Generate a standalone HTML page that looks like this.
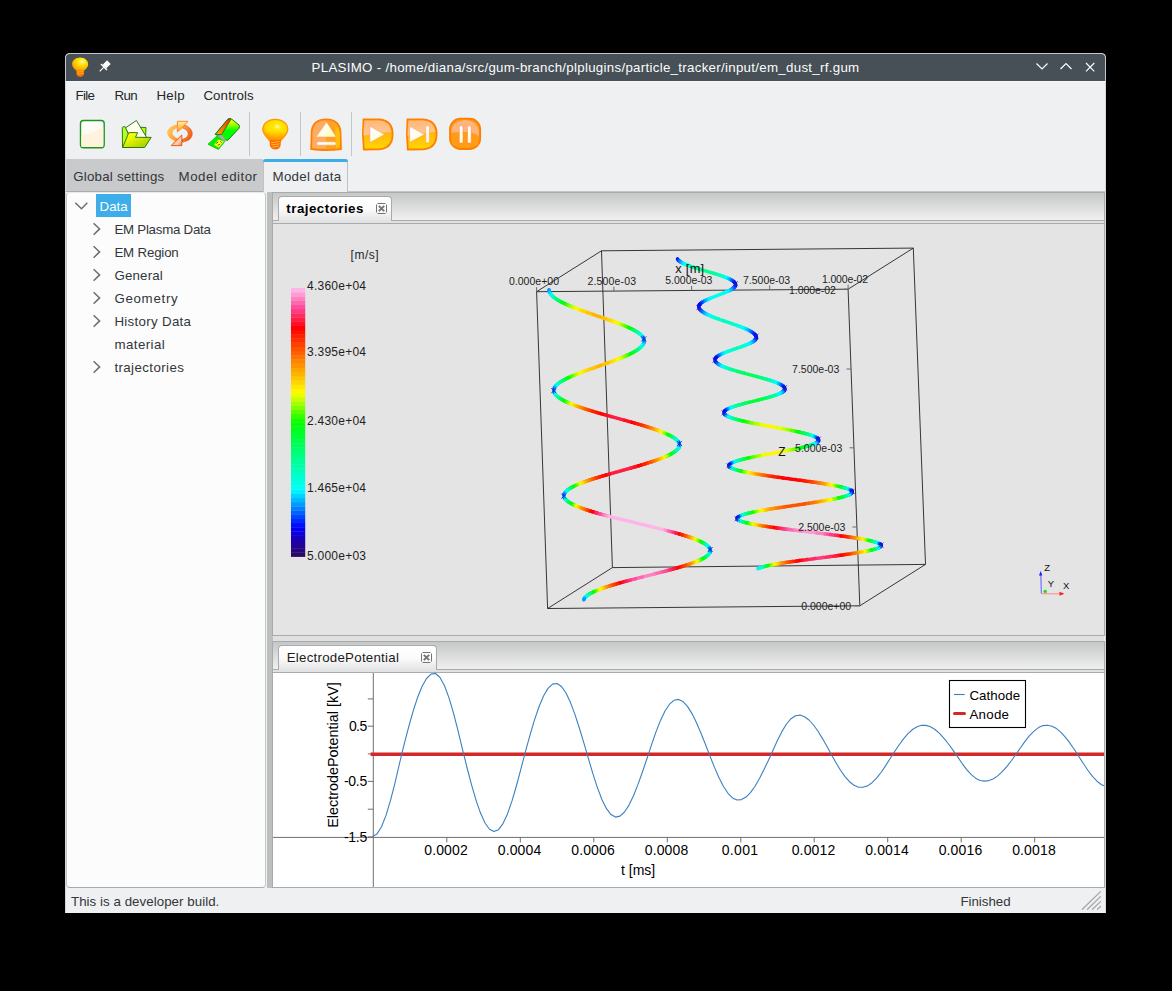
<!DOCTYPE html><html><head><meta charset="utf-8"><style>
*{margin:0;padding:0;box-sizing:border-box}
html,body{width:1172px;height:991px;background:#000;overflow:hidden;font-family:"Liberation Sans",sans-serif}
.a{position:absolute}
.t{position:absolute;white-space:nowrap;line-height:1}
svg{position:absolute;overflow:visible}
</style></head><body>
<div class="a" style="left:65px;top:53px;width:1041px;height:860px;background:#eff0f1;border-radius:5px 5px 0 0"></div>
<div class="a" style="left:65px;top:53px;width:1041px;height:28px;background:#475057;border-radius:5px 5px 0 0;border:1px solid #c4c8cc;border-bottom:none"></div>
<div class="a" style="left:66px;top:81px;width:1039px;height:1px;background:#f7f7f8"></div>
<div class="a" style="left:65px;top:81px;width:1px;height:832px;background:#d4d6d8"></div>
<div class="a" style="left:1105px;top:81px;width:1px;height:832px;background:#d4d6d8"></div>
<div class="t" style="left:311.60px;top:60.74px;font-size:13.3px;color:#fcfcfc;font-weight:normal;letter-spacing:0.29277108433734883px;">PLASIMO - /home/diana/src/gum-branch/plplugins/particle_tracker/input/em_dust_rf.gum</div>
<svg style="left:0px;top:0px" width="1172" height="991" viewBox="0 0 1172 991">
<defs><radialGradient id="tb1" cx="0.62" cy="0.32" r="0.7"><stop offset="0" stop-color="#fff8b0"/><stop offset="0.22" stop-color="#ffee40"/><stop offset="0.45" stop-color="#ffdc00"/><stop offset="1" stop-color="#ff9c00"/></radialGradient>
<linearGradient id="tb2" x1="0" y1="0" x2="0" y2="1"><stop offset="0" stop-color="#ff8a00"/><stop offset="1" stop-color="#ff6a00"/></linearGradient></defs>
<path d="M80.1 57.6 C75.5 57.6 72.1 60.5 72.1 64.2 C72.1 66.8 74.2 68.6 76.2 70.6 L84.2 70.6 C86.2 68.6 88.2 66.8 88.2 64.2 C88.2 60.5 84.8 57.6 80.1 57.6 Z" fill="url(#tb1)"/>
<path d="M76.3 70 L84.2 70 L83.9 74.5 Q83 76.9 80.2 76.9 Q77.4 76.9 76.6 74.5 Z" fill="url(#tb2)"/>
<path d="M77 72 L83.5 71.2 M77.2 74 L83.3 73.2" stroke="#ffb020" stroke-width="0.9"/>
<g transform="translate(104.5 66.5) rotate(45)">
<rect x="-2.6" y="-6.2" width="5.2" height="6.6" fill="#fcfcfc"/>
<rect x="-4.2" y="0" width="8.4" height="1.5" fill="#fcfcfc"/>
<rect x="-0.6" y="1.2" width="1.2" height="5.6" fill="#fcfcfc"/>
</g>
</svg>
<svg style="left:1030px;top:58px" width="70" height="20" viewBox="0 0 70 20">
<path d="M6.5 5.5 L12 11 L17.5 5.5" fill="none" stroke="#fcfcfc" stroke-width="1.2"/>
<path d="M30.5 11 L36 5.5 L41.5 11" fill="none" stroke="#fcfcfc" stroke-width="1.2"/>
<path d="M56 5 L64.3 13.3 M64.3 5 L56 13.3" fill="none" stroke="#fcfcfc" stroke-width="1.2"/>
</svg>
<div class="t" style="left:75.40px;top:89.04px;font-size:13.3px;color:#232629;font-weight:normal;letter-spacing:-0.6166666666666684px;">File</div>
<div class="t" style="left:114.60px;top:89.04px;font-size:13.3px;color:#232629;font-weight:normal;letter-spacing:-0.6500000000000021px;">Run</div>
<div class="t" style="left:156.40px;top:89.04px;font-size:13.3px;color:#232629;font-weight:normal;letter-spacing:0.28333333333332905px;">Help</div>
<div class="t" style="left:203.40px;top:89.04px;font-size:13.3px;color:#232629;font-weight:normal;letter-spacing:0.11428571428571185px;">Controls</div>
<div class="a" style="left:249px;top:112px;width:1px;height:44px;background:#c4c6c8"></div>
<div class="a" style="left:300px;top:112px;width:1px;height:44px;background:#c4c6c8"></div>
<div class="a" style="left:351px;top:112px;width:1px;height:44px;background:#c4c6c8"></div>
<svg style="left:0px;top:0px" width="1172" height="991" viewBox="0 0 1172 991">
<defs>
<linearGradient id="gNew" x1="0" y1="0" x2="0" y2="1"><stop offset="0" stop-color="#ffffff"/><stop offset="1" stop-color="#fff4e2"/></linearGradient>
<linearGradient id="gFold" x1="0" y1="0" x2="1" y2="1"><stop offset="0.2" stop-color="#ffff00"/><stop offset="1" stop-color="#90c800"/></linearGradient>
<linearGradient id="gUsbCap" x1="0" y1="0" x2="0" y2="1"><stop offset="0.1" stop-color="#ffff00"/><stop offset="0.55" stop-color="#00ff00"/></linearGradient>
<linearGradient id="gUsbTop" x1="1" y1="0" x2="0" y2="1"><stop offset="0" stop-color="#ff2000"/><stop offset="1" stop-color="#ffb000"/></linearGradient>
<radialGradient id="gBulb" cx="0.58" cy="0.35" r="0.65"><stop offset="0" stop-color="#fff8a0"/><stop offset="0.25" stop-color="#ffe600"/><stop offset="0.7" stop-color="#ffd800"/><stop offset="1" stop-color="#ffa000"/></radialGradient>
<linearGradient id="gOrTop" x1="0" y1="0" x2="0" y2="1"><stop offset="0" stop-color="#ffb878"/><stop offset="1" stop-color="#ffc898"/></linearGradient>
<linearGradient id="gOrBot" x1="0" y1="0" x2="0" y2="1"><stop offset="0" stop-color="#ff9c20"/><stop offset="1" stop-color="#ffd800"/></linearGradient>
<linearGradient id="gWhite" x1="0" y1="0" x2="1" y2="1"><stop offset="0.3" stop-color="#ffffff"/><stop offset="1" stop-color="#ffffa8"/></linearGradient>
<linearGradient id="gRef" x1="0" y1="0" x2="1" y2="1"><stop offset="0" stop-color="#ffe060"/><stop offset="0.5" stop-color="#ffa030"/><stop offset="1" stop-color="#ff5010"/></linearGradient>
<clipPath id="cTop1"><rect x="350" y="110" width="50" height="16"/></clipPath>
</defs>
<rect x="80.5" y="120.5" width="23.7" height="27.3" rx="3" fill="url(#gNew)" stroke="#1f951f" stroke-width="1.4"/>
<path d="M81.4 136 Q88 134.5 91 133.5 Q97 130 103.2 127 L103.2 147 L81.4 147 Z" fill="#fff3de"/>
<path d="M122.5 147.3 L122.3 127.5 L124 126.5 L126 127.5 L133 147.3 Z" fill="#b4ff28" stroke="#1c6e10" stroke-width="0.9"/>
<path d="M140.5 127.3 L146 127.5 L145.5 137 L141 137 Z" fill="#b4ff00" stroke="#1c6e10" stroke-width="0.9"/>
<path d="M125.6 127.8 L136.4 120.5 L146.7 137.5 L132 141 Z" fill="#fffff0" stroke="#1c6e10" stroke-width="0.9"/>
<path d="M122.6 147.5 L128.8 132.6 L137.6 132.6 L135.5 137.3 L151.2 137.4 L144.6 147.5 Z" fill="url(#gFold)" stroke="#1c6e10" stroke-width="0.9"/>
<defs><linearGradient id="gR1" x1="0" y1="0" x2="1" y2="1"><stop offset="0" stop-color="#ffb040"/><stop offset="1" stop-color="#e84a10"/></linearGradient><linearGradient id="gR2" x1="0" y1="0" x2="1" y2="1"><stop offset="0" stop-color="#ffd860"/><stop offset="1" stop-color="#ff8a20"/></linearGradient><linearGradient id="gR3" x1="0" y1="0" x2="0" y2="1"><stop offset="0" stop-color="#fff2a0"/><stop offset="1" stop-color="#ff9a20"/></linearGradient><linearGradient id="gR4" x1="0" y1="0" x2="1" y2="1"><stop offset="0" stop-color="#ff8a30"/><stop offset="0.7" stop-color="#ffd0b0"/><stop offset="1" stop-color="#ff7030"/></linearGradient></defs>
<path d="M183.5 124.5 C189.5 126.5 193 130.5 192.2 135 C191.3 139.3 187.5 141.3 182 142.3 L182 139.3 C185.5 138.5 188.2 136.7 188.2 134 C188.2 131 185.5 128.8 181.2 127.5 Z" fill="url(#gR1)" stroke="#d84a10" stroke-width="0.5"/>
<path d="M177.4 121.3 L187.9 121.3 L184.6 124.9 L181.4 128.4 L177.4 131.9 Z" fill="url(#gR3)" stroke="#ff7010" stroke-width="0.8"/>
<path d="M176.5 124.8 C170.5 126.3 167.2 129.8 167.6 133.2 C168 137 172 140 177.2 141.6 L178.6 138.9 C174.6 137.5 172.2 135.5 172.2 133 C172.2 130.5 174.2 128.6 177.6 127.6 Z" fill="url(#gR2)" stroke="#ffa040" stroke-width="0.4"/>
<path d="M181.8 145.6 L171.2 145.6 L174.7 142 L178.1 138.6 L181.8 135 Z" fill="url(#gR4)" stroke="#e04000" stroke-width="0.8"/>
<path d="M208 144.2 L216.8 136.2 L225.8 140.2 L218.4 149.4 Z" fill="#00ee00" stroke="#00c000" stroke-width="0.8"/>
<path d="M214 144.8 L218.5 139.6 L224 141.5 L218.6 147.8 Z" fill="#ffff20"/>
<path d="M216.3 143.5 L218 141.8 M218.2 145.5 L219.8 143.8 M220.5 141.5 L221.5 142.5" stroke="#111" stroke-width="1"/>
<path d="M215.3 134.2 L227.9 119.2 Q229.5 118 231.5 119 L239 125 Q240 126.5 239 128.3 L227.4 140.6 Z" fill="url(#gUsbCap)" stroke="#117a11" stroke-width="1"/>
<path d="M215.3 134.2 L227.9 119.2 Q229.5 118 231 119.2 L221.5 134.8 Z" fill="url(#gUsbTop)" stroke="#117a11" stroke-width="0.9"/>
<path d="M217 135.4 L221.6 135 L226.5 140.5 L224.5 141.5 Z" fill="#a8a8a8"/>
<path d="M275.2 119.4 C268 119.4 262.8 123.5 262.8 129.5 C262.8 133.5 266 136.5 269.2 140.3 L281 140.3 C284.5 136.5 287.8 133.5 287.8 129.5 C287.8 123.5 282.5 119.4 275.2 119.4 Z" fill="url(#gBulb)" stroke="#ff9800" stroke-width="1.2"/>
<defs><linearGradient id="gNeck" x1="0" y1="0" x2="0" y2="1"><stop offset="0.55" stop-color="#ffa000" stop-opacity="0"/><stop offset="1" stop-color="#ff9000" stop-opacity="1"/></linearGradient></defs>
<path d="M275.2 119.4 C268 119.4 262.8 123.5 262.8 129.5 C262.8 133.5 266 136.5 269.2 140.3 L281 140.3 C284.5 136.5 287.8 133.5 287.8 129.5 C287.8 123.5 282.5 119.4 275.2 119.4 Z" fill="url(#gNeck)"/>
<path d="M269.5 140.2 L281 140.2 L280.5 146 Q279 149.5 275.2 149.6 Q271.5 149.5 270 146 Z" fill="#ff6a00"/>
<path d="M271 142.8 L279.5 141.5 M271.2 145 L279.5 143.8 M272.5 147.2 L278.8 146" stroke="#ffc030" stroke-width="1"/>
<path d="M311.2 149 L311.6 133 Q312 119.5 326 119.3 Q340.2 119.5 340.5 133 L341 149 Q326 151 311.2 149 Z" fill="#ffac60" stroke="#ff8000" stroke-width="1.8"/>
<path d="M326 120.5 Q339 121 339.5 133 L340 148.3 Q333 149.2 326 149.3 Z" fill="#ffa020"/>
<path d="M335 125 Q339.5 129 339.6 134 L340 147.5 L336 148 Z" fill="#ffd000" opacity="0.7"/>
<path d="M316 137 L326.6 122.1 L336.3 137 Z" fill="url(#gWhite)" stroke="#ff9070" stroke-width="0.5"/>
<rect x="316.8" y="141.8" width="19.2" height="3.4" rx="1.5" fill="url(#gWhite)" stroke="#ff9070" stroke-width="0.5"/>
<path d="M363.5 119.3 L379.5 119.4 Q392.6 120.5 392.6 134 Q392.6 148.5 379 149.3 L363.8 149.5 Q362.2 134 363.5 119.3 Z" fill="url(#gOrBot)" stroke="#ff8000" stroke-width="1.8"/>
<path d="M364.5 120.4 L379.5 120.5 Q390.5 121.5 391.2 132 Q379 133 363.6 135.5 Q363.5 128 364.5 120.4 Z" fill="url(#gOrTop)"/>
<path d="M407.5 119.3 L423.5 119.4 Q436.6 120.5 436.6 134 Q436.6 148.5 423 149.3 L407.8 149.5 Q406.2 134 407.5 119.3 Z" fill="url(#gOrBot)" stroke="#ff8000" stroke-width="1.8"/>
<path d="M408.5 120.4 L423.5 120.5 Q434.5 121.5 435.2 132 Q423 133 407.6 135.5 Q407.5 128 408.5 120.4 Z" fill="url(#gOrTop)"/>
<path d="M369.9 126.3 L384.6 134.6 L369.9 142.5 Z" fill="url(#gWhite)" stroke="#ff9070" stroke-width="0.5"/>
<path d="M409.7 126.3 L424.6 134.6 L409.7 142.3 Z" fill="url(#gWhite)" stroke="#ff9070" stroke-width="0.5"/>
<rect x="425.8" y="125.8" width="3.6" height="17" rx="1" fill="url(#gWhite)" stroke="#ff9070" stroke-width="0.5"/>
<rect x="450" y="118.7" width="30.2" height="30.3" rx="10.5" fill="#ff9a1a" stroke="#ff8000" stroke-width="1.8"/>
<path d="M451.2 132.5 Q451.5 121 465 120 Q479 121 479 134 L479 136 Q472 131.5 465 132 Z" fill="#ffb478"/>
<path d="M452 140 Q458 147.5 465 147.5 Q473 147.5 478 140 L478 145 L452 145 Z" fill="#ffa800" opacity="0.6"/>
<rect x="459.4" y="125.8" width="3.6" height="17.3" rx="1.2" fill="url(#gWhite)" stroke="#ff8060" stroke-width="0.5"/>
<rect x="467.6" y="125.8" width="3.6" height="17.3" rx="1.2" fill="url(#gWhite)" stroke="#ff8060" stroke-width="0.5"/>
</svg>
<div class="a" style="left:66px;top:159px;width:197px;height:33px;background:#c9cacb"></div>
<div class="a" style="left:66px;top:191px;width:197px;height:1px;background:#a9abad"></div>
<div class="a" style="left:348px;top:191px;width:757px;height:1px;background:#c4c6c8"></div>
<div class="a" style="left:263px;top:159px;width:85px;height:33px;background:#eff0f1;border:1px solid #c0c2c4;border-bottom:none;border-radius:3px 3px 0 0"></div>
<div class="a" style="left:263px;top:159px;width:85px;height:3px;background:#3daee9;border-radius:3px 3px 0 0"></div>
<div class="t" style="left:73.30px;top:170.44px;font-size:13.3px;color:#31363b;font-weight:normal;letter-spacing:0.20714285714285655px;">Global settings</div>
<div class="t" style="left:178.60px;top:170.44px;font-size:13.3px;color:#31363b;font-weight:normal;letter-spacing:0.472727272727273px;">Model editor</div>
<div class="t" style="left:272.50px;top:170.44px;font-size:13.3px;color:#31363b;font-weight:normal;letter-spacing:0.31111111111111395px;">Model data</div>
<div class="a" style="left:66px;top:192px;width:200px;height:696px;background:#fcfcfc;border:1px solid #c4c6c8;border-top-color:#e8e9ea;border-bottom-color:#a9abad;border-radius:4px"></div>
<div class="a" style="left:96px;top:194px;width:35px;height:23px;background:#3daee9"></div>
<div class="t" style="left:99.50px;top:200.04px;font-size:13.3px;color:#fcfcfc;font-weight:normal;letter-spacing:0.033333333333333805px;">Data</div>
<svg style="left:74px;top:200px" width="16" height="12" viewBox="0 0 16 12"><path d="M1.3 2.7 L7.5 8.7 L13.3 2.7" fill="none" stroke="#6b6e71" stroke-width="1.5"/></svg>
<div class="t" style="left:114.40px;top:222.74px;font-size:13.3px;color:#31363b;font-weight:normal;letter-spacing:-0.24615384615384636px;">EM Plasma Data</div>
<svg style="left:92px;top:222.0px" width="10" height="13" viewBox="0 0 10 12"><path d="M1.6 0.7 L7.6 6.4 L1.6 12.2" fill="none" stroke="#6b6e71" stroke-width="1.5"/></svg>
<div class="t" style="left:114.40px;top:245.74px;font-size:13.3px;color:#31363b;font-weight:normal;letter-spacing:-0.17499999999999893px;">EM Region</div>
<svg style="left:92px;top:245.0px" width="10" height="13" viewBox="0 0 10 12"><path d="M1.6 0.7 L7.6 6.4 L1.6 12.2" fill="none" stroke="#6b6e71" stroke-width="1.5"/></svg>
<div class="t" style="left:114.40px;top:268.74px;font-size:13.3px;color:#31363b;font-weight:normal;letter-spacing:0.18333333333333476px;">General</div>
<svg style="left:92px;top:268.0px" width="10" height="13" viewBox="0 0 10 12"><path d="M1.6 0.7 L7.6 6.4 L1.6 12.2" fill="none" stroke="#6b6e71" stroke-width="1.5"/></svg>
<div class="t" style="left:114.40px;top:291.74px;font-size:13.3px;color:#31363b;font-weight:normal;letter-spacing:0.6999999999999977px;">Geometry</div>
<svg style="left:92px;top:291.0px" width="10" height="13" viewBox="0 0 10 12"><path d="M1.6 0.7 L7.6 6.4 L1.6 12.2" fill="none" stroke="#6b6e71" stroke-width="1.5"/></svg>
<div class="t" style="left:114.40px;top:314.74px;font-size:13.3px;color:#31363b;font-weight:normal;letter-spacing:0.3136363636363626px;">History Data</div>
<svg style="left:92px;top:314.0px" width="10" height="13" viewBox="0 0 10 12"><path d="M1.6 0.7 L7.6 6.4 L1.6 12.2" fill="none" stroke="#6b6e71" stroke-width="1.5"/></svg>
<div class="t" style="left:114.40px;top:337.74px;font-size:13.3px;color:#31363b;font-weight:normal;letter-spacing:0.44285714285714406px;">material</div>
<div class="t" style="left:114.40px;top:360.74px;font-size:13.3px;color:#31363b;font-weight:normal;letter-spacing:0.4045454545454548px;">trajectories</div>
<svg style="left:92px;top:360.0px" width="10" height="13" viewBox="0 0 10 12"><path d="M1.6 0.7 L7.6 6.4 L1.6 12.2" fill="none" stroke="#6b6e71" stroke-width="1.5"/></svg>
<div class="a" style="left:266px;top:192px;width:7px;height:696px;background:#bdbec0"></div>
<div class="a" style="left:266px;top:192px;width:1px;height:696px;background:#eff0f1"></div>
<div class="a" style="left:272px;top:192px;width:833px;height:444px;background:#dfe0e1;border:1px solid #a9aaab"></div>
<div class="a" style="left:273px;top:193px;width:831px;height:27px;background:linear-gradient(#c6c7c7,#f0f0f0)"></div>
<div class="a" style="left:273px;top:220px;width:831px;height:1px;background:#a9aaab"></div>
<div class="a" style="left:273px;top:221px;width:831px;height:2px;background:#e1e2e3"></div>
<div class="a" style="left:272px;top:223px;width:833px;height:1px;background:#a9aaab"></div>
<div class="a" style="left:278px;top:196px;width:114px;height:25px;background:linear-gradient(#ffffff 0%,#fbfbfb 50%,#e4e4e4 100%);border:1px solid #a9aaab;border-bottom:none;border-radius:4px 4px 0 0"></div>
<div class="t" style="left:286.30px;top:202.24px;font-size:13.3px;color:#000;font-weight:bold;letter-spacing:0.4909090909090876px;">trajectories</div>
<svg style="left:376px;top:203px" width="12" height="12" viewBox="0 0 12 12"><path d="M1.5 0.5 H9.5 M1.5 10.5 H9.5 M0.5 1.5 V9.5 M10.5 1.5 V9.5" stroke="#727476" stroke-width="1"/><path d="M2.8 2.8 L8.2 8.2 M8.2 2.8 L2.8 8.2" stroke="#727476" stroke-width="1.9"/></svg>
<div class="a" style="left:273px;top:224px;width:831px;height:411px;background:#e4e4e4"></div>
<div class="a" style="left:272px;top:641px;width:833px;height:247px;background:#dfe0e1;border:1px solid #a9aaab"></div>
<div class="a" style="left:273px;top:642px;width:831px;height:27px;background:linear-gradient(#c6c7c7,#f0f0f0)"></div>
<div class="a" style="left:273px;top:669px;width:831px;height:1px;background:#a9aaab"></div>
<div class="a" style="left:273px;top:670px;width:831px;height:2px;background:#e1e2e3"></div>
<div class="a" style="left:272px;top:672px;width:833px;height:1px;background:#a9aaab"></div>
<div class="a" style="left:278px;top:645px;width:159px;height:25px;background:linear-gradient(#ffffff 0%,#fbfbfb 50%,#e4e4e4 100%);border:1px solid #a9aaab;border-bottom:none;border-radius:4px 4px 0 0"></div>
<div class="t" style="left:286.70px;top:651.44px;font-size:13.3px;color:#1b1b1b;font-weight:normal;letter-spacing:0.24999999999999917px;">ElectrodePotential</div>
<svg style="left:421px;top:652px" width="12" height="12" viewBox="0 0 12 12"><path d="M1.5 0.5 H9.5 M1.5 10.5 H9.5 M0.5 1.5 V9.5 M10.5 1.5 V9.5" stroke="#727476" stroke-width="1"/><path d="M2.8 2.8 L8.2 8.2 M8.2 2.8 L2.8 8.2" stroke="#727476" stroke-width="1.9"/></svg>
<div class="a" style="left:273px;top:673px;width:831px;height:214px;background:#ffffff"></div>
<div class="a" style="left:273px;top:636px;width:831px;height:5px;background:#dfe0e2"></div>
<svg style="left:0px;top:0px" width="1172" height="991" viewBox="0 0 1172 991">
<rect x="291" y="552.40" width="14.2" height="4.50" fill="#2a0867"/>
<rect x="291" y="548.21" width="14.2" height="4.50" fill="#27057c"/>
<rect x="291" y="544.01" width="14.2" height="4.50" fill="#240291"/>
<rect x="291" y="539.81" width="14.2" height="4.50" fill="#1f00a7"/>
<rect x="291" y="535.62" width="14.2" height="4.50" fill="#1600c0"/>
<rect x="291" y="531.42" width="14.2" height="4.50" fill="#0e00d9"/>
<rect x="291" y="527.22" width="14.2" height="4.50" fill="#0500f2"/>
<rect x="291" y="523.02" width="14.2" height="4.50" fill="#000dff"/>
<rect x="291" y="518.83" width="14.2" height="4.50" fill="#002aff"/>
<rect x="291" y="514.63" width="14.2" height="4.50" fill="#0046ff"/>
<rect x="291" y="510.43" width="14.2" height="4.50" fill="#0063ff"/>
<rect x="291" y="506.24" width="14.2" height="4.50" fill="#007fff"/>
<rect x="291" y="502.04" width="14.2" height="4.50" fill="#009cff"/>
<rect x="291" y="497.84" width="14.2" height="4.50" fill="#00b8ff"/>
<rect x="291" y="493.65" width="14.2" height="4.50" fill="#00d4ff"/>
<rect x="291" y="489.45" width="14.2" height="4.50" fill="#00f1ff"/>
<rect x="291" y="485.25" width="14.2" height="4.50" fill="#00fff7"/>
<rect x="291" y="481.06" width="14.2" height="4.50" fill="#00ffe8"/>
<rect x="291" y="476.86" width="14.2" height="4.50" fill="#00ffd9"/>
<rect x="291" y="472.66" width="14.2" height="4.50" fill="#00ffca"/>
<rect x="291" y="468.47" width="14.2" height="4.50" fill="#00ffba"/>
<rect x="291" y="464.27" width="14.2" height="4.50" fill="#00ffab"/>
<rect x="291" y="460.07" width="14.2" height="4.50" fill="#00ff9c"/>
<rect x="291" y="455.88" width="14.2" height="4.50" fill="#00ff8d"/>
<rect x="291" y="451.68" width="14.2" height="4.50" fill="#00ff7d"/>
<rect x="291" y="447.48" width="14.2" height="4.50" fill="#00ff6c"/>
<rect x="291" y="443.28" width="14.2" height="4.50" fill="#00ff5c"/>
<rect x="291" y="439.09" width="14.2" height="4.50" fill="#00ff4b"/>
<rect x="291" y="434.89" width="14.2" height="4.50" fill="#00ff3a"/>
<rect x="291" y="430.69" width="14.2" height="4.50" fill="#00ff2a"/>
<rect x="291" y="426.50" width="14.2" height="4.50" fill="#00ff19"/>
<rect x="291" y="422.30" width="14.2" height="4.50" fill="#00ff08"/>
<rect x="291" y="418.10" width="14.2" height="4.50" fill="#12ff00"/>
<rect x="291" y="413.91" width="14.2" height="4.50" fill="#36ff00"/>
<rect x="291" y="409.71" width="14.2" height="4.50" fill="#5bff00"/>
<rect x="291" y="405.51" width="14.2" height="4.50" fill="#7fff00"/>
<rect x="291" y="401.32" width="14.2" height="4.50" fill="#a3ff00"/>
<rect x="291" y="397.12" width="14.2" height="4.50" fill="#c7ff00"/>
<rect x="291" y="392.92" width="14.2" height="4.50" fill="#ebff00"/>
<rect x="291" y="388.73" width="14.2" height="4.50" fill="#fff700"/>
<rect x="291" y="384.53" width="14.2" height="4.50" fill="#ffe700"/>
<rect x="291" y="380.33" width="14.2" height="4.50" fill="#ffd600"/>
<rect x="291" y="376.13" width="14.2" height="4.50" fill="#ffc600"/>
<rect x="291" y="371.94" width="14.2" height="4.50" fill="#ffb500"/>
<rect x="291" y="367.74" width="14.2" height="4.50" fill="#ffa500"/>
<rect x="291" y="363.54" width="14.2" height="4.50" fill="#ff9400"/>
<rect x="291" y="359.35" width="14.2" height="4.50" fill="#ff8400"/>
<rect x="291" y="355.15" width="14.2" height="4.50" fill="#ff7300"/>
<rect x="291" y="350.95" width="14.2" height="4.50" fill="#ff6200"/>
<rect x="291" y="346.76" width="14.2" height="4.50" fill="#ff5200"/>
<rect x="291" y="342.56" width="14.2" height="4.50" fill="#ff4100"/>
<rect x="291" y="338.36" width="14.2" height="4.50" fill="#ff3000"/>
<rect x="291" y="334.17" width="14.2" height="4.50" fill="#ff2000"/>
<rect x="291" y="329.97" width="14.2" height="4.50" fill="#ff0f00"/>
<rect x="291" y="325.77" width="14.2" height="4.50" fill="#ff0103"/>
<rect x="291" y="321.57" width="14.2" height="4.50" fill="#ff1023"/>
<rect x="291" y="317.38" width="14.2" height="4.50" fill="#ff1e43"/>
<rect x="291" y="313.18" width="14.2" height="4.50" fill="#ff2c64"/>
<rect x="291" y="308.98" width="14.2" height="4.50" fill="#ff3b84"/>
<rect x="291" y="304.79" width="14.2" height="4.50" fill="#ff4f9c"/>
<rect x="291" y="300.59" width="14.2" height="4.50" fill="#ff68ae"/>
<rect x="291" y="296.39" width="14.2" height="4.50" fill="#ff81c1"/>
<rect x="291" y="292.20" width="14.2" height="4.50" fill="#ff9ad4"/>
<rect x="291" y="288.00" width="14.2" height="4.50" fill="#ffb4e7"/>
<line x1="536.6" y1="291.7" x2="848.1" y2="289.2" stroke="#222" stroke-width="0.9"/>
<line x1="848.1" y1="289.2" x2="913.3" y2="248.1" stroke="#222" stroke-width="0.9"/>
<line x1="913.3" y1="248.1" x2="601.5" y2="250.8" stroke="#222" stroke-width="0.9"/>
<line x1="601.5" y1="250.8" x2="536.6" y2="291.7" stroke="#222" stroke-width="0.9"/>
<line x1="547.6" y1="608.5" x2="859.8" y2="605.8" stroke="#222" stroke-width="0.9"/>
<line x1="859.8" y1="605.8" x2="925.5" y2="564.4" stroke="#222" stroke-width="0.9"/>
<line x1="925.5" y1="564.4" x2="612.4" y2="567.6" stroke="#222" stroke-width="0.9"/>
<line x1="612.4" y1="567.6" x2="547.6" y2="608.5" stroke="#222" stroke-width="0.9"/>
<line x1="536.6" y1="291.7" x2="547.6" y2="608.5" stroke="#222" stroke-width="0.9"/>
<line x1="848.1" y1="289.2" x2="859.8" y2="605.8" stroke="#222" stroke-width="0.9"/>
<line x1="601.5" y1="250.8" x2="612.4" y2="567.6" stroke="#222" stroke-width="0.9"/>
<line x1="913.3" y1="248.1" x2="925.5" y2="564.4" stroke="#222" stroke-width="0.9"/>
<line x1="536.6" y1="287.2" x2="536.6" y2="291.7" stroke="#6a6a6a" stroke-width="1"/>
<line x1="613.9" y1="286.6" x2="613.9" y2="291.1" stroke="#6a6a6a" stroke-width="1"/>
<line x1="691.6" y1="286.0" x2="691.6" y2="290.5" stroke="#6a6a6a" stroke-width="1"/>
<line x1="769.7" y1="285.3" x2="769.7" y2="289.8" stroke="#6a6a6a" stroke-width="1"/>
<line x1="848.1" y1="284.7" x2="848.1" y2="289.2" stroke="#6a6a6a" stroke-width="1"/>
<line x1="843.6" y1="289.2" x2="848.1" y2="289.2" stroke="#6a6a6a" stroke-width="1"/>
<line x1="846.5" y1="369.0" x2="851.0" y2="369.0" stroke="#6a6a6a" stroke-width="1"/>
<line x1="849.5" y1="447.8" x2="854.0" y2="447.8" stroke="#6a6a6a" stroke-width="1"/>
<line x1="852.4" y1="527.0" x2="856.9" y2="527.0" stroke="#6a6a6a" stroke-width="1"/>
<line x1="855.3" y1="605.8" x2="859.8" y2="605.8" stroke="#6a6a6a" stroke-width="1"/>
<polyline points="549.0,289.8 549.0,290.1 549.1,290.5" fill="none" stroke="#007fff" stroke-width="3.5" stroke-linecap="round" stroke-linejoin="round"/>
<polyline points="549.1,290.5 549.1,290.8 549.2,291.1 549.3,291.5 549.4,291.8 549.5,292.1" fill="none" stroke="#009cff" stroke-width="3.5" stroke-linecap="round" stroke-linejoin="round"/>
<polyline points="549.5,292.1 549.7,292.5 549.9,292.8 550.1,293.1" fill="none" stroke="#00b8ff" stroke-width="3.5" stroke-linecap="round" stroke-linejoin="round"/>
<polyline points="550.1,293.1 550.3,293.5 550.5,293.8 550.7,294.1" fill="none" stroke="#00d4ff" stroke-width="3.5" stroke-linecap="round" stroke-linejoin="round"/>
<polyline points="550.7,294.1 551.0,294.5 551.3,294.8" fill="none" stroke="#00f1ff" stroke-width="3.5" stroke-linecap="round" stroke-linejoin="round"/>
<polyline points="551.3,294.8 551.6,295.1 551.9,295.5" fill="none" stroke="#00fff7" stroke-width="3.5" stroke-linecap="round" stroke-linejoin="round"/>
<polyline points="551.9,295.5 552.2,295.8 552.5,296.1" fill="none" stroke="#00ffe8" stroke-width="3.5" stroke-linecap="round" stroke-linejoin="round"/>
<polyline points="552.5,296.1 552.9,296.5 553.3,296.8" fill="none" stroke="#00ffd9" stroke-width="3.5" stroke-linecap="round" stroke-linejoin="round"/>
<polyline points="553.3,296.8 553.7,297.1" fill="none" stroke="#00ffca" stroke-width="3.5" stroke-linecap="round" stroke-linejoin="round"/>
<polyline points="553.7,297.1 554.1,297.5 554.5,297.8" fill="none" stroke="#00ffba" stroke-width="3.5" stroke-linecap="round" stroke-linejoin="round"/>
<polyline points="554.5,297.8 555.0,298.1 555.5,298.5" fill="none" stroke="#00ffab" stroke-width="3.5" stroke-linecap="round" stroke-linejoin="round"/>
<polyline points="555.5,298.5 555.9,298.8" fill="none" stroke="#00ff9c" stroke-width="3.5" stroke-linecap="round" stroke-linejoin="round"/>
<polyline points="555.9,298.8 556.4,299.1 557.0,299.5" fill="none" stroke="#00ff8d" stroke-width="3.5" stroke-linecap="round" stroke-linejoin="round"/>
<polyline points="557.0,299.5 557.5,299.8 558.0,300.1" fill="none" stroke="#00ff7d" stroke-width="3.5" stroke-linecap="round" stroke-linejoin="round"/>
<polyline points="558.0,300.1 558.6,300.5" fill="none" stroke="#00ff6c" stroke-width="3.5" stroke-linecap="round" stroke-linejoin="round"/>
<polyline points="558.6,300.5 559.2,300.8 559.8,301.1" fill="none" stroke="#00ff5c" stroke-width="3.5" stroke-linecap="round" stroke-linejoin="round"/>
<polyline points="559.8,301.1 560.4,301.5 561.0,301.8" fill="none" stroke="#00ff4b" stroke-width="3.5" stroke-linecap="round" stroke-linejoin="round"/>
<polyline points="561.0,301.8 561.7,302.1" fill="none" stroke="#00ff3a" stroke-width="3.5" stroke-linecap="round" stroke-linejoin="round"/>
<polyline points="561.7,302.1 562.3,302.5 563.0,302.8" fill="none" stroke="#00ff2a" stroke-width="3.5" stroke-linecap="round" stroke-linejoin="round"/>
<polyline points="563.0,302.8 563.7,303.1 564.4,303.5" fill="none" stroke="#00ff19" stroke-width="3.5" stroke-linecap="round" stroke-linejoin="round"/>
<polyline points="564.4,303.5 565.1,303.8 565.8,304.1" fill="none" stroke="#00ff08" stroke-width="3.5" stroke-linecap="round" stroke-linejoin="round"/>
<polyline points="565.8,304.1 566.6,304.5" fill="none" stroke="#12ff00" stroke-width="3.5" stroke-linecap="round" stroke-linejoin="round"/>
<polyline points="566.6,304.5 567.3,304.8 568.1,305.1" fill="none" stroke="#36ff00" stroke-width="3.5" stroke-linecap="round" stroke-linejoin="round"/>
<polyline points="568.1,305.1 568.9,305.5 569.7,305.8" fill="none" stroke="#5bff00" stroke-width="3.5" stroke-linecap="round" stroke-linejoin="round"/>
<polyline points="569.7,305.8 570.5,306.2 571.3,306.5" fill="none" stroke="#7fff00" stroke-width="3.5" stroke-linecap="round" stroke-linejoin="round"/>
<polyline points="571.3,306.5 572.1,306.8 572.9,307.2" fill="none" stroke="#a3ff00" stroke-width="3.5" stroke-linecap="round" stroke-linejoin="round"/>
<polyline points="572.9,307.2 573.8,307.5 574.6,307.8 575.5,308.2" fill="none" stroke="#c7ff00" stroke-width="3.5" stroke-linecap="round" stroke-linejoin="round"/>
<polyline points="575.5,308.2 576.4,308.5 577.2,308.8" fill="none" stroke="#ebff00" stroke-width="3.5" stroke-linecap="round" stroke-linejoin="round"/>
<polyline points="577.2,308.8 578.1,309.2 579.0,309.5 579.9,309.8" fill="none" stroke="#fff700" stroke-width="3.5" stroke-linecap="round" stroke-linejoin="round"/>
<polyline points="579.9,309.8 580.8,310.2 581.8,310.5 582.7,310.8" fill="none" stroke="#ffe700" stroke-width="3.5" stroke-linecap="round" stroke-linejoin="round"/>
<polyline points="582.7,310.8 583.6,311.2 584.6,311.5 585.5,311.8 586.5,312.2 587.4,312.5" fill="none" stroke="#ffd600" stroke-width="3.5" stroke-linecap="round" stroke-linejoin="round"/>
<polyline points="587.4,312.5 588.4,312.8 589.3,313.2 590.3,313.5 591.3,313.8 592.2,314.2 593.2,314.5" fill="none" stroke="#ffc600" stroke-width="3.5" stroke-linecap="round" stroke-linejoin="round"/>
<polyline points="593.2,314.5 594.2,314.8 595.2,315.2 596.2,315.5 597.1,315.8 598.1,316.2 599.1,316.5 600.1,316.8 601.1,317.2 602.0,317.5 603.0,317.8" fill="none" stroke="#ffb500" stroke-width="3.5" stroke-linecap="round" stroke-linejoin="round"/>
<polyline points="603.0,317.8 604.0,318.2 604.9,318.5 605.9,318.8 606.9,319.2 607.8,319.5 608.8,319.8" fill="none" stroke="#ffc600" stroke-width="3.5" stroke-linecap="round" stroke-linejoin="round"/>
<polyline points="608.8,319.8 609.7,320.2 610.7,320.5 611.6,320.8 612.6,321.2" fill="none" stroke="#ffd600" stroke-width="3.5" stroke-linecap="round" stroke-linejoin="round"/>
<polyline points="612.6,321.2 613.5,321.5 614.4,321.8 615.3,322.2" fill="none" stroke="#ffe700" stroke-width="3.5" stroke-linecap="round" stroke-linejoin="round"/>
<polyline points="615.3,322.2 616.2,322.5 617.1,322.8 618.0,323.2" fill="none" stroke="#fff700" stroke-width="3.5" stroke-linecap="round" stroke-linejoin="round"/>
<polyline points="618.0,323.2 618.9,323.5 619.8,323.8 620.6,324.2" fill="none" stroke="#ebff00" stroke-width="3.5" stroke-linecap="round" stroke-linejoin="round"/>
<polyline points="620.6,324.2 621.5,324.5 622.3,324.8" fill="none" stroke="#c7ff00" stroke-width="3.5" stroke-linecap="round" stroke-linejoin="round"/>
<polyline points="622.3,324.8 623.1,325.2 624.0,325.5" fill="none" stroke="#a3ff00" stroke-width="3.5" stroke-linecap="round" stroke-linejoin="round"/>
<polyline points="624.0,325.5 624.8,325.8 625.5,326.2" fill="none" stroke="#7fff00" stroke-width="3.5" stroke-linecap="round" stroke-linejoin="round"/>
<polyline points="625.5,326.2 626.3,326.5 627.1,326.8" fill="none" stroke="#5bff00" stroke-width="3.5" stroke-linecap="round" stroke-linejoin="round"/>
<polyline points="627.1,326.8 627.9,327.2 628.6,327.5" fill="none" stroke="#36ff00" stroke-width="3.5" stroke-linecap="round" stroke-linejoin="round"/>
<polyline points="628.6,327.5 629.3,327.8" fill="none" stroke="#12ff00" stroke-width="3.5" stroke-linecap="round" stroke-linejoin="round"/>
<polyline points="629.3,327.8 630.0,328.2 630.7,328.5" fill="none" stroke="#00ff08" stroke-width="3.5" stroke-linecap="round" stroke-linejoin="round"/>
<polyline points="630.7,328.5 631.4,328.8 632.1,329.2" fill="none" stroke="#00ff19" stroke-width="3.5" stroke-linecap="round" stroke-linejoin="round"/>
<polyline points="632.1,329.2 632.7,329.5" fill="none" stroke="#00ff2a" stroke-width="3.5" stroke-linecap="round" stroke-linejoin="round"/>
<polyline points="632.7,329.5 633.4,329.8 634.0,330.2" fill="none" stroke="#00ff3a" stroke-width="3.5" stroke-linecap="round" stroke-linejoin="round"/>
<polyline points="634.0,330.2 634.6,330.5" fill="none" stroke="#00ff4b" stroke-width="3.5" stroke-linecap="round" stroke-linejoin="round"/>
<polyline points="634.6,330.5 635.2,330.8 635.8,331.2" fill="none" stroke="#00ff5c" stroke-width="3.5" stroke-linecap="round" stroke-linejoin="round"/>
<polyline points="635.8,331.2 636.3,331.5" fill="none" stroke="#00ff6c" stroke-width="3.5" stroke-linecap="round" stroke-linejoin="round"/>
<polyline points="636.3,331.5 636.9,331.8 637.4,332.2" fill="none" stroke="#00ff7d" stroke-width="3.5" stroke-linecap="round" stroke-linejoin="round"/>
<polyline points="637.4,332.2 637.9,332.5" fill="none" stroke="#00ff8d" stroke-width="3.5" stroke-linecap="round" stroke-linejoin="round"/>
<polyline points="637.9,332.5 638.4,332.8 638.8,333.2" fill="none" stroke="#00ff9c" stroke-width="3.5" stroke-linecap="round" stroke-linejoin="round"/>
<polyline points="638.8,333.2 639.3,333.5" fill="none" stroke="#00ffab" stroke-width="3.5" stroke-linecap="round" stroke-linejoin="round"/>
<polyline points="639.3,333.5 639.7,333.8 640.1,334.2" fill="none" stroke="#00ffba" stroke-width="3.5" stroke-linecap="round" stroke-linejoin="round"/>
<polyline points="640.1,334.2 640.5,334.5" fill="none" stroke="#00ffca" stroke-width="3.5" stroke-linecap="round" stroke-linejoin="round"/>
<polyline points="640.5,334.5 640.9,334.8 641.2,335.2" fill="none" stroke="#00ffd9" stroke-width="3.5" stroke-linecap="round" stroke-linejoin="round"/>
<polyline points="641.2,335.2 641.6,335.5" fill="none" stroke="#00ffe8" stroke-width="3.5" stroke-linecap="round" stroke-linejoin="round"/>
<polyline points="641.6,335.5 641.9,335.8 642.2,336.2" fill="none" stroke="#00fff7" stroke-width="3.5" stroke-linecap="round" stroke-linejoin="round"/>
<polyline points="642.2,336.2 642.5,336.5 642.7,336.9" fill="none" stroke="#00f1ff" stroke-width="3.5" stroke-linecap="round" stroke-linejoin="round"/>
<polyline points="642.7,336.9 642.9,337.2 643.2,337.5" fill="none" stroke="#00d4ff" stroke-width="3.5" stroke-linecap="round" stroke-linejoin="round"/>
<polyline points="643.2,337.5 643.3,337.9 643.5,338.2 643.7,338.5" fill="none" stroke="#00b8ff" stroke-width="3.5" stroke-linecap="round" stroke-linejoin="round"/>
<polyline points="643.7,338.5 643.8,338.9 643.9,339.2 644.0,339.5 644.0,339.9" fill="none" stroke="#009cff" stroke-width="3.5" stroke-linecap="round" stroke-linejoin="round"/>
<polyline points="644.0,339.9 644.1,340.2 644.1,340.5 644.1,340.9 644.1,341.2 644.1,341.5 644.1,341.9" fill="none" stroke="#007fff" stroke-width="3.5" stroke-linecap="round" stroke-linejoin="round"/>
<polyline points="644.1,341.9 644.0,342.2 643.9,342.5 643.8,342.9 643.7,343.2" fill="none" stroke="#009cff" stroke-width="3.5" stroke-linecap="round" stroke-linejoin="round"/>
<polyline points="643.7,343.2 643.5,343.5 643.4,343.9 643.2,344.2" fill="none" stroke="#00b8ff" stroke-width="3.5" stroke-linecap="round" stroke-linejoin="round"/>
<polyline points="643.2,344.2 643.0,344.5 642.8,344.9 642.5,345.2" fill="none" stroke="#00d4ff" stroke-width="3.5" stroke-linecap="round" stroke-linejoin="round"/>
<polyline points="642.5,345.2 642.3,345.5 642.0,345.9" fill="none" stroke="#00f1ff" stroke-width="3.5" stroke-linecap="round" stroke-linejoin="round"/>
<polyline points="642.0,345.9 641.7,346.2 641.4,346.5" fill="none" stroke="#00fff7" stroke-width="3.5" stroke-linecap="round" stroke-linejoin="round"/>
<polyline points="641.4,346.5 641.1,346.9" fill="none" stroke="#00ffe8" stroke-width="3.5" stroke-linecap="round" stroke-linejoin="round"/>
<polyline points="641.1,346.9 640.7,347.2 640.4,347.5" fill="none" stroke="#00ffd9" stroke-width="3.5" stroke-linecap="round" stroke-linejoin="round"/>
<polyline points="640.4,347.5 640.0,347.9 639.6,348.2" fill="none" stroke="#00ffca" stroke-width="3.5" stroke-linecap="round" stroke-linejoin="round"/>
<polyline points="639.6,348.2 639.2,348.5" fill="none" stroke="#00ffba" stroke-width="3.5" stroke-linecap="round" stroke-linejoin="round"/>
<polyline points="639.2,348.5 638.7,348.9 638.3,349.2" fill="none" stroke="#00ffab" stroke-width="3.5" stroke-linecap="round" stroke-linejoin="round"/>
<polyline points="638.3,349.2 637.8,349.5 637.3,349.9" fill="none" stroke="#00ff9c" stroke-width="3.5" stroke-linecap="round" stroke-linejoin="round"/>
<polyline points="637.3,349.9 636.8,350.2" fill="none" stroke="#00ff8d" stroke-width="3.5" stroke-linecap="round" stroke-linejoin="round"/>
<polyline points="636.8,350.2 636.3,350.5 635.8,350.9" fill="none" stroke="#00ff7d" stroke-width="3.5" stroke-linecap="round" stroke-linejoin="round"/>
<polyline points="635.8,350.9 635.2,351.2" fill="none" stroke="#00ff6c" stroke-width="3.5" stroke-linecap="round" stroke-linejoin="round"/>
<polyline points="635.2,351.2 634.7,351.5 634.1,351.9" fill="none" stroke="#00ff5c" stroke-width="3.5" stroke-linecap="round" stroke-linejoin="round"/>
<polyline points="634.1,351.9 633.5,352.2" fill="none" stroke="#00ff4b" stroke-width="3.5" stroke-linecap="round" stroke-linejoin="round"/>
<polyline points="633.5,352.2 632.9,352.5 632.2,352.9" fill="none" stroke="#00ff3a" stroke-width="3.5" stroke-linecap="round" stroke-linejoin="round"/>
<polyline points="632.2,352.9 631.6,353.2 630.9,353.5" fill="none" stroke="#00ff2a" stroke-width="3.5" stroke-linecap="round" stroke-linejoin="round"/>
<polyline points="630.9,353.5 630.3,353.9" fill="none" stroke="#00ff19" stroke-width="3.5" stroke-linecap="round" stroke-linejoin="round"/>
<polyline points="630.3,353.9 629.6,354.2 628.9,354.5" fill="none" stroke="#00ff08" stroke-width="3.5" stroke-linecap="round" stroke-linejoin="round"/>
<polyline points="628.9,354.5 628.2,354.9 627.4,355.2" fill="none" stroke="#12ff00" stroke-width="3.5" stroke-linecap="round" stroke-linejoin="round"/>
<polyline points="627.4,355.2 626.7,355.5 626.0,355.9" fill="none" stroke="#36ff00" stroke-width="3.5" stroke-linecap="round" stroke-linejoin="round"/>
<polyline points="626.0,355.9 625.2,356.2 624.4,356.5" fill="none" stroke="#5bff00" stroke-width="3.5" stroke-linecap="round" stroke-linejoin="round"/>
<polyline points="624.4,356.5 623.6,356.9 622.8,357.2" fill="none" stroke="#7fff00" stroke-width="3.5" stroke-linecap="round" stroke-linejoin="round"/>
<polyline points="622.8,357.2 622.0,357.5 621.2,357.9" fill="none" stroke="#a3ff00" stroke-width="3.5" stroke-linecap="round" stroke-linejoin="round"/>
<polyline points="621.2,357.9 620.4,358.2 619.5,358.5" fill="none" stroke="#c7ff00" stroke-width="3.5" stroke-linecap="round" stroke-linejoin="round"/>
<polyline points="619.5,358.5 618.7,358.9 617.8,359.2 617.0,359.5" fill="none" stroke="#ebff00" stroke-width="3.5" stroke-linecap="round" stroke-linejoin="round"/>
<polyline points="617.0,359.5 616.1,359.9 615.2,360.2 614.3,360.5" fill="none" stroke="#fff700" stroke-width="3.5" stroke-linecap="round" stroke-linejoin="round"/>
<polyline points="614.3,360.5 613.5,360.9 612.6,361.2 611.6,361.5" fill="none" stroke="#ffe700" stroke-width="3.5" stroke-linecap="round" stroke-linejoin="round"/>
<polyline points="611.6,361.5 610.7,361.9 609.8,362.2 608.9,362.5 608.0,362.9" fill="none" stroke="#ffd600" stroke-width="3.5" stroke-linecap="round" stroke-linejoin="round"/>
<polyline points="608.0,362.9 607.0,363.2 606.1,363.5 605.2,363.9 604.2,364.2 603.3,364.5 602.3,364.9 601.4,365.2 600.4,365.5" fill="none" stroke="#ffc600" stroke-width="3.5" stroke-linecap="round" stroke-linejoin="round"/>
<polyline points="600.4,365.5 599.5,365.9 598.5,366.2 597.6,366.5 596.6,366.9 595.7,367.2 594.7,367.6" fill="none" stroke="#ffb500" stroke-width="3.5" stroke-linecap="round" stroke-linejoin="round"/>
<polyline points="594.7,367.6 593.8,367.9 592.8,368.2 591.9,368.6 590.9,368.9 590.0,369.2 589.0,369.6 588.1,369.9" fill="none" stroke="#ffc600" stroke-width="3.5" stroke-linecap="round" stroke-linejoin="round"/>
<polyline points="588.1,369.9 587.2,370.2 586.3,370.6 585.3,370.9 584.4,371.2 583.5,371.6" fill="none" stroke="#ffd600" stroke-width="3.5" stroke-linecap="round" stroke-linejoin="round"/>
<polyline points="583.5,371.6 582.6,371.9 581.7,372.2 580.8,372.6" fill="none" stroke="#ffe700" stroke-width="3.5" stroke-linecap="round" stroke-linejoin="round"/>
<polyline points="580.8,372.6 580.0,372.9 579.1,373.2 578.2,373.6" fill="none" stroke="#fff700" stroke-width="3.5" stroke-linecap="round" stroke-linejoin="round"/>
<polyline points="578.2,373.6 577.4,373.9 576.5,374.2" fill="none" stroke="#ebff00" stroke-width="3.5" stroke-linecap="round" stroke-linejoin="round"/>
<polyline points="576.5,374.2 575.7,374.6 574.9,374.9" fill="none" stroke="#c7ff00" stroke-width="3.5" stroke-linecap="round" stroke-linejoin="round"/>
<polyline points="574.9,374.9 574.1,375.2 573.3,375.6" fill="none" stroke="#a3ff00" stroke-width="3.5" stroke-linecap="round" stroke-linejoin="round"/>
<polyline points="573.3,375.6 572.5,375.9 571.7,376.2" fill="none" stroke="#7fff00" stroke-width="3.5" stroke-linecap="round" stroke-linejoin="round"/>
<polyline points="571.7,376.2 570.9,376.6 570.2,376.9" fill="none" stroke="#5bff00" stroke-width="3.5" stroke-linecap="round" stroke-linejoin="round"/>
<polyline points="570.2,376.9 569.4,377.2 568.7,377.6" fill="none" stroke="#36ff00" stroke-width="3.5" stroke-linecap="round" stroke-linejoin="round"/>
<polyline points="568.7,377.6 568.0,377.9 567.3,378.2" fill="none" stroke="#12ff00" stroke-width="3.5" stroke-linecap="round" stroke-linejoin="round"/>
<polyline points="567.3,378.2 566.6,378.6" fill="none" stroke="#00ff08" stroke-width="3.5" stroke-linecap="round" stroke-linejoin="round"/>
<polyline points="566.6,378.6 565.9,378.9 565.3,379.2" fill="none" stroke="#00ff19" stroke-width="3.5" stroke-linecap="round" stroke-linejoin="round"/>
<polyline points="565.3,379.2 564.6,379.6" fill="none" stroke="#00ff2a" stroke-width="3.5" stroke-linecap="round" stroke-linejoin="round"/>
<polyline points="564.6,379.6 564.0,379.9 563.4,380.2" fill="none" stroke="#00ff3a" stroke-width="3.5" stroke-linecap="round" stroke-linejoin="round"/>
<polyline points="563.4,380.2 562.8,380.6" fill="none" stroke="#00ff4b" stroke-width="3.5" stroke-linecap="round" stroke-linejoin="round"/>
<polyline points="562.8,380.6 562.2,380.9 561.7,381.2" fill="none" stroke="#00ff5c" stroke-width="3.5" stroke-linecap="round" stroke-linejoin="round"/>
<polyline points="561.7,381.2 561.1,381.6" fill="none" stroke="#00ff6c" stroke-width="3.5" stroke-linecap="round" stroke-linejoin="round"/>
<polyline points="561.1,381.6 560.6,381.9 560.1,382.2" fill="none" stroke="#00ff7d" stroke-width="3.5" stroke-linecap="round" stroke-linejoin="round"/>
<polyline points="560.1,382.2 559.6,382.6" fill="none" stroke="#00ff8d" stroke-width="3.5" stroke-linecap="round" stroke-linejoin="round"/>
<polyline points="559.6,382.6 559.1,382.9 558.7,383.2" fill="none" stroke="#00ff9c" stroke-width="3.5" stroke-linecap="round" stroke-linejoin="round"/>
<polyline points="558.7,383.2 558.2,383.6" fill="none" stroke="#00ffab" stroke-width="3.5" stroke-linecap="round" stroke-linejoin="round"/>
<polyline points="558.2,383.6 557.8,383.9 557.4,384.2" fill="none" stroke="#00ffba" stroke-width="3.5" stroke-linecap="round" stroke-linejoin="round"/>
<polyline points="557.4,384.2 557.0,384.6" fill="none" stroke="#00ffca" stroke-width="3.5" stroke-linecap="round" stroke-linejoin="round"/>
<polyline points="557.0,384.6 556.7,384.9 556.3,385.2" fill="none" stroke="#00ffd9" stroke-width="3.5" stroke-linecap="round" stroke-linejoin="round"/>
<polyline points="556.3,385.2 556.0,385.6" fill="none" stroke="#00ffe8" stroke-width="3.5" stroke-linecap="round" stroke-linejoin="round"/>
<polyline points="556.0,385.6 555.7,385.9 555.4,386.2" fill="none" stroke="#00fff7" stroke-width="3.5" stroke-linecap="round" stroke-linejoin="round"/>
<polyline points="555.4,386.2 555.2,386.6 554.9,386.9" fill="none" stroke="#00f1ff" stroke-width="3.5" stroke-linecap="round" stroke-linejoin="round"/>
<polyline points="554.9,386.9 554.7,387.2 554.5,387.6" fill="none" stroke="#00d4ff" stroke-width="3.5" stroke-linecap="round" stroke-linejoin="round"/>
<polyline points="554.5,387.6 554.3,387.9 554.2,388.2" fill="none" stroke="#00b8ff" stroke-width="3.5" stroke-linecap="round" stroke-linejoin="round"/>
<polyline points="554.2,388.2 554.0,388.6 553.9,388.9 553.8,389.2 553.8,389.6" fill="none" stroke="#009cff" stroke-width="3.5" stroke-linecap="round" stroke-linejoin="round"/>
<polyline points="553.8,389.6 553.7,389.9 553.7,390.2 553.7,390.6 553.7,390.9" fill="none" stroke="#007fff" stroke-width="3.5" stroke-linecap="round" stroke-linejoin="round"/>
<polyline points="553.7,390.9 553.8,391.2 553.9,391.6 554.0,391.9 554.1,392.2" fill="none" stroke="#009cff" stroke-width="3.5" stroke-linecap="round" stroke-linejoin="round"/>
<polyline points="554.1,392.2 554.2,392.6 554.4,392.9 554.6,393.2" fill="none" stroke="#00b8ff" stroke-width="3.5" stroke-linecap="round" stroke-linejoin="round"/>
<polyline points="554.6,393.2 554.8,393.6 555.0,393.9" fill="none" stroke="#00d4ff" stroke-width="3.5" stroke-linecap="round" stroke-linejoin="round"/>
<polyline points="555.0,393.9 555.2,394.2 555.5,394.6" fill="none" stroke="#00f1ff" stroke-width="3.5" stroke-linecap="round" stroke-linejoin="round"/>
<polyline points="555.5,394.6 555.8,394.9" fill="none" stroke="#00fff7" stroke-width="3.5" stroke-linecap="round" stroke-linejoin="round"/>
<polyline points="555.8,394.9 556.1,395.2 556.4,395.6" fill="none" stroke="#00ffe8" stroke-width="3.5" stroke-linecap="round" stroke-linejoin="round"/>
<polyline points="556.4,395.6 556.8,395.9" fill="none" stroke="#00ffd9" stroke-width="3.5" stroke-linecap="round" stroke-linejoin="round"/>
<polyline points="556.8,395.9 557.2,396.2 557.6,396.6" fill="none" stroke="#00ffca" stroke-width="3.5" stroke-linecap="round" stroke-linejoin="round"/>
<polyline points="557.6,396.6 558.0,396.9" fill="none" stroke="#00ffba" stroke-width="3.5" stroke-linecap="round" stroke-linejoin="round"/>
<polyline points="558.0,396.9 558.4,397.2" fill="none" stroke="#00ffab" stroke-width="3.5" stroke-linecap="round" stroke-linejoin="round"/>
<polyline points="558.4,397.2 558.9,397.6" fill="none" stroke="#00ff9c" stroke-width="3.5" stroke-linecap="round" stroke-linejoin="round"/>
<polyline points="558.9,397.6 559.3,397.9 559.8,398.2" fill="none" stroke="#00ff8d" stroke-width="3.5" stroke-linecap="round" stroke-linejoin="round"/>
<polyline points="559.8,398.2 560.4,398.6" fill="none" stroke="#00ff7d" stroke-width="3.5" stroke-linecap="round" stroke-linejoin="round"/>
<polyline points="560.4,398.6 560.9,398.9" fill="none" stroke="#00ff6c" stroke-width="3.5" stroke-linecap="round" stroke-linejoin="round"/>
<polyline points="560.9,398.9 561.4,399.3" fill="none" stroke="#00ff5c" stroke-width="3.5" stroke-linecap="round" stroke-linejoin="round"/>
<polyline points="561.4,399.3 562.0,399.6 562.6,399.9" fill="none" stroke="#00ff4b" stroke-width="3.5" stroke-linecap="round" stroke-linejoin="round"/>
<polyline points="562.6,399.9 563.2,400.3" fill="none" stroke="#00ff3a" stroke-width="3.5" stroke-linecap="round" stroke-linejoin="round"/>
<polyline points="563.2,400.3 563.9,400.6" fill="none" stroke="#00ff2a" stroke-width="3.5" stroke-linecap="round" stroke-linejoin="round"/>
<polyline points="563.9,400.6 564.5,400.9" fill="none" stroke="#00ff19" stroke-width="3.5" stroke-linecap="round" stroke-linejoin="round"/>
<polyline points="564.5,400.9 565.2,401.3 565.9,401.6" fill="none" stroke="#00ff08" stroke-width="3.5" stroke-linecap="round" stroke-linejoin="round"/>
<polyline points="565.9,401.6 566.6,401.9" fill="none" stroke="#12ff00" stroke-width="3.5" stroke-linecap="round" stroke-linejoin="round"/>
<polyline points="566.6,401.9 567.3,402.3" fill="none" stroke="#36ff00" stroke-width="3.5" stroke-linecap="round" stroke-linejoin="round"/>
<polyline points="567.3,402.3 568.1,402.6" fill="none" stroke="#5bff00" stroke-width="3.5" stroke-linecap="round" stroke-linejoin="round"/>
<polyline points="568.1,402.6 568.8,402.9 569.6,403.3" fill="none" stroke="#7fff00" stroke-width="3.5" stroke-linecap="round" stroke-linejoin="round"/>
<polyline points="569.6,403.3 570.4,403.6" fill="none" stroke="#a3ff00" stroke-width="3.5" stroke-linecap="round" stroke-linejoin="round"/>
<polyline points="570.4,403.6 571.2,403.9" fill="none" stroke="#c7ff00" stroke-width="3.5" stroke-linecap="round" stroke-linejoin="round"/>
<polyline points="571.2,403.9 572.0,404.3 572.9,404.6" fill="none" stroke="#ebff00" stroke-width="3.5" stroke-linecap="round" stroke-linejoin="round"/>
<polyline points="572.9,404.6 573.7,404.9" fill="none" stroke="#fff700" stroke-width="3.5" stroke-linecap="round" stroke-linejoin="round"/>
<polyline points="573.7,404.9 574.6,405.3" fill="none" stroke="#ffe700" stroke-width="3.5" stroke-linecap="round" stroke-linejoin="round"/>
<polyline points="574.6,405.3 575.5,405.6 576.4,405.9" fill="none" stroke="#ffd600" stroke-width="3.5" stroke-linecap="round" stroke-linejoin="round"/>
<polyline points="576.4,405.9 577.3,406.3" fill="none" stroke="#ffc600" stroke-width="3.5" stroke-linecap="round" stroke-linejoin="round"/>
<polyline points="577.3,406.3 578.3,406.6 579.2,406.9" fill="none" stroke="#ffb500" stroke-width="3.5" stroke-linecap="round" stroke-linejoin="round"/>
<polyline points="579.2,406.9 580.2,407.3" fill="none" stroke="#ffa500" stroke-width="3.5" stroke-linecap="round" stroke-linejoin="round"/>
<polyline points="580.2,407.3 581.2,407.6 582.2,407.9" fill="none" stroke="#ff9400" stroke-width="3.5" stroke-linecap="round" stroke-linejoin="round"/>
<polyline points="582.2,407.9 583.2,408.3 584.2,408.6" fill="none" stroke="#ff8400" stroke-width="3.5" stroke-linecap="round" stroke-linejoin="round"/>
<polyline points="584.2,408.6 585.2,408.9" fill="none" stroke="#ff7300" stroke-width="3.5" stroke-linecap="round" stroke-linejoin="round"/>
<polyline points="585.2,408.9 586.3,409.3 587.3,409.6" fill="none" stroke="#ff6200" stroke-width="3.5" stroke-linecap="round" stroke-linejoin="round"/>
<polyline points="587.3,409.6 588.4,409.9 589.4,410.3" fill="none" stroke="#ff5200" stroke-width="3.5" stroke-linecap="round" stroke-linejoin="round"/>
<polyline points="589.4,410.3 590.5,410.6 591.6,410.9" fill="none" stroke="#ff4100" stroke-width="3.5" stroke-linecap="round" stroke-linejoin="round"/>
<polyline points="591.6,410.9 592.7,411.3 593.8,411.6" fill="none" stroke="#ff3000" stroke-width="3.5" stroke-linecap="round" stroke-linejoin="round"/>
<polyline points="593.8,411.6 595.0,411.9 596.1,412.3 597.2,412.6" fill="none" stroke="#ff2000" stroke-width="3.5" stroke-linecap="round" stroke-linejoin="round"/>
<polyline points="597.2,412.6 598.4,412.9 599.5,413.3 600.7,413.6" fill="none" stroke="#ff0f00" stroke-width="3.5" stroke-linecap="round" stroke-linejoin="round"/>
<polyline points="600.7,413.6 601.9,413.9 603.0,414.3 604.2,414.6 605.4,414.9" fill="none" stroke="#ff0103" stroke-width="3.5" stroke-linecap="round" stroke-linejoin="round"/>
<polyline points="605.4,414.9 606.6,415.3 607.8,415.6 609.0,415.9 610.1,416.3 611.3,416.6" fill="none" stroke="#ff1023" stroke-width="3.5" stroke-linecap="round" stroke-linejoin="round"/>
<polyline points="611.3,416.6 612.6,416.9 613.8,417.3 615.0,417.6 616.2,417.9 617.4,418.3 618.6,418.6 619.8,418.9 621.0,419.3 622.2,419.6 623.4,419.9 624.6,420.3" fill="none" stroke="#ff1e43" stroke-width="3.5" stroke-linecap="round" stroke-linejoin="round"/>
<polyline points="624.6,420.3 625.8,420.6 627.0,420.9 628.2,421.3 629.4,421.6 630.6,421.9 631.7,422.3" fill="none" stroke="#ff1023" stroke-width="3.5" stroke-linecap="round" stroke-linejoin="round"/>
<polyline points="631.7,422.3 632.9,422.6 634.1,422.9 635.2,423.3" fill="none" stroke="#ff0103" stroke-width="3.5" stroke-linecap="round" stroke-linejoin="round"/>
<polyline points="635.2,423.3 636.4,423.6 637.5,423.9 638.7,424.3" fill="none" stroke="#ff0f00" stroke-width="3.5" stroke-linecap="round" stroke-linejoin="round"/>
<polyline points="638.7,424.3 639.8,424.6 640.9,424.9 642.1,425.3" fill="none" stroke="#ff2000" stroke-width="3.5" stroke-linecap="round" stroke-linejoin="round"/>
<polyline points="642.1,425.3 643.2,425.6 644.3,425.9" fill="none" stroke="#ff3000" stroke-width="3.5" stroke-linecap="round" stroke-linejoin="round"/>
<polyline points="644.3,425.9 645.3,426.3 646.4,426.6" fill="none" stroke="#ff4100" stroke-width="3.5" stroke-linecap="round" stroke-linejoin="round"/>
<polyline points="646.4,426.6 647.5,426.9 648.5,427.3" fill="none" stroke="#ff5200" stroke-width="3.5" stroke-linecap="round" stroke-linejoin="round"/>
<polyline points="648.5,427.3 649.6,427.6 650.6,427.9" fill="none" stroke="#ff6200" stroke-width="3.5" stroke-linecap="round" stroke-linejoin="round"/>
<polyline points="650.6,427.9 651.6,428.3" fill="none" stroke="#ff7300" stroke-width="3.5" stroke-linecap="round" stroke-linejoin="round"/>
<polyline points="651.6,428.3 652.6,428.6 653.6,428.9" fill="none" stroke="#ff8400" stroke-width="3.5" stroke-linecap="round" stroke-linejoin="round"/>
<polyline points="653.6,428.9 654.6,429.3" fill="none" stroke="#ff9400" stroke-width="3.5" stroke-linecap="round" stroke-linejoin="round"/>
<polyline points="654.6,429.3 655.6,429.6 656.5,430.0" fill="none" stroke="#ffa500" stroke-width="3.5" stroke-linecap="round" stroke-linejoin="round"/>
<polyline points="656.5,430.0 657.5,430.3" fill="none" stroke="#ffb500" stroke-width="3.5" stroke-linecap="round" stroke-linejoin="round"/>
<polyline points="657.5,430.3 658.4,430.6 659.3,431.0" fill="none" stroke="#ffc600" stroke-width="3.5" stroke-linecap="round" stroke-linejoin="round"/>
<polyline points="659.3,431.0 660.2,431.3" fill="none" stroke="#ffd600" stroke-width="3.5" stroke-linecap="round" stroke-linejoin="round"/>
<polyline points="660.2,431.3 661.0,431.6" fill="none" stroke="#ffe700" stroke-width="3.5" stroke-linecap="round" stroke-linejoin="round"/>
<polyline points="661.0,431.6 661.9,432.0 662.7,432.3" fill="none" stroke="#fff700" stroke-width="3.5" stroke-linecap="round" stroke-linejoin="round"/>
<polyline points="662.7,432.3 663.6,432.6" fill="none" stroke="#ebff00" stroke-width="3.5" stroke-linecap="round" stroke-linejoin="round"/>
<polyline points="663.6,432.6 664.4,433.0" fill="none" stroke="#c7ff00" stroke-width="3.5" stroke-linecap="round" stroke-linejoin="round"/>
<polyline points="664.4,433.0 665.2,433.3" fill="none" stroke="#a3ff00" stroke-width="3.5" stroke-linecap="round" stroke-linejoin="round"/>
<polyline points="665.2,433.3 665.9,433.6 666.7,434.0" fill="none" stroke="#7fff00" stroke-width="3.5" stroke-linecap="round" stroke-linejoin="round"/>
<polyline points="666.7,434.0 667.4,434.3" fill="none" stroke="#5bff00" stroke-width="3.5" stroke-linecap="round" stroke-linejoin="round"/>
<polyline points="667.4,434.3 668.1,434.6" fill="none" stroke="#36ff00" stroke-width="3.5" stroke-linecap="round" stroke-linejoin="round"/>
<polyline points="668.1,434.6 668.8,435.0" fill="none" stroke="#12ff00" stroke-width="3.5" stroke-linecap="round" stroke-linejoin="round"/>
<polyline points="668.8,435.0 669.5,435.3" fill="none" stroke="#00ff08" stroke-width="3.5" stroke-linecap="round" stroke-linejoin="round"/>
<polyline points="669.5,435.3 670.2,435.6 670.8,436.0" fill="none" stroke="#00ff19" stroke-width="3.5" stroke-linecap="round" stroke-linejoin="round"/>
<polyline points="670.8,436.0 671.4,436.3" fill="none" stroke="#00ff2a" stroke-width="3.5" stroke-linecap="round" stroke-linejoin="round"/>
<polyline points="671.4,436.3 672.0,436.6" fill="none" stroke="#00ff3a" stroke-width="3.5" stroke-linecap="round" stroke-linejoin="round"/>
<polyline points="672.0,436.6 672.6,437.0" fill="none" stroke="#00ff4b" stroke-width="3.5" stroke-linecap="round" stroke-linejoin="round"/>
<polyline points="672.6,437.0 673.1,437.3" fill="none" stroke="#00ff5c" stroke-width="3.5" stroke-linecap="round" stroke-linejoin="round"/>
<polyline points="673.1,437.3 673.7,437.6" fill="none" stroke="#00ff6c" stroke-width="3.5" stroke-linecap="round" stroke-linejoin="round"/>
<polyline points="673.7,437.6 674.2,438.0" fill="none" stroke="#00ff7d" stroke-width="3.5" stroke-linecap="round" stroke-linejoin="round"/>
<polyline points="674.2,438.0 674.7,438.3 675.1,438.6" fill="none" stroke="#00ff8d" stroke-width="3.5" stroke-linecap="round" stroke-linejoin="round"/>
<polyline points="675.1,438.6 675.6,439.0" fill="none" stroke="#00ff9c" stroke-width="3.5" stroke-linecap="round" stroke-linejoin="round"/>
<polyline points="675.6,439.0 676.0,439.3" fill="none" stroke="#00ffab" stroke-width="3.5" stroke-linecap="round" stroke-linejoin="round"/>
<polyline points="676.0,439.3 676.4,439.6" fill="none" stroke="#00ffba" stroke-width="3.5" stroke-linecap="round" stroke-linejoin="round"/>
<polyline points="676.4,439.6 676.8,440.0" fill="none" stroke="#00ffca" stroke-width="3.5" stroke-linecap="round" stroke-linejoin="round"/>
<polyline points="676.8,440.0 677.1,440.3 677.5,440.6" fill="none" stroke="#00ffd9" stroke-width="3.5" stroke-linecap="round" stroke-linejoin="round"/>
<polyline points="677.5,440.6 677.8,441.0" fill="none" stroke="#00ffe8" stroke-width="3.5" stroke-linecap="round" stroke-linejoin="round"/>
<polyline points="677.8,441.0 678.1,441.3" fill="none" stroke="#00fff7" stroke-width="3.5" stroke-linecap="round" stroke-linejoin="round"/>
<polyline points="678.1,441.3 678.3,441.6 678.6,442.0" fill="none" stroke="#00f1ff" stroke-width="3.5" stroke-linecap="round" stroke-linejoin="round"/>
<polyline points="678.6,442.0 678.8,442.3 679.0,442.6" fill="none" stroke="#00d4ff" stroke-width="3.5" stroke-linecap="round" stroke-linejoin="round"/>
<polyline points="679.0,442.6 679.1,443.0 679.3,443.3" fill="none" stroke="#00b8ff" stroke-width="3.5" stroke-linecap="round" stroke-linejoin="round"/>
<polyline points="679.3,443.3 679.4,443.6 679.5,444.0 679.6,444.3" fill="none" stroke="#009cff" stroke-width="3.5" stroke-linecap="round" stroke-linejoin="round"/>
<polyline points="679.6,444.3 679.6,444.6 679.6,445.0 679.6,445.3 679.5,445.6" fill="none" stroke="#007fff" stroke-width="3.5" stroke-linecap="round" stroke-linejoin="round"/>
<polyline points="679.5,445.6 679.5,446.0 679.4,446.3 679.3,446.6 679.2,447.0" fill="none" stroke="#009cff" stroke-width="3.5" stroke-linecap="round" stroke-linejoin="round"/>
<polyline points="679.2,447.0 679.0,447.3 678.8,447.6" fill="none" stroke="#00b8ff" stroke-width="3.5" stroke-linecap="round" stroke-linejoin="round"/>
<polyline points="678.8,447.6 678.6,448.0" fill="none" stroke="#00d4ff" stroke-width="3.5" stroke-linecap="round" stroke-linejoin="round"/>
<polyline points="678.6,448.0 678.4,448.3 678.1,448.6" fill="none" stroke="#00f1ff" stroke-width="3.5" stroke-linecap="round" stroke-linejoin="round"/>
<polyline points="678.1,448.6 677.9,449.0" fill="none" stroke="#00fff7" stroke-width="3.5" stroke-linecap="round" stroke-linejoin="round"/>
<polyline points="677.9,449.0 677.6,449.3 677.2,449.6" fill="none" stroke="#00ffe8" stroke-width="3.5" stroke-linecap="round" stroke-linejoin="round"/>
<polyline points="677.2,449.6 676.9,450.0" fill="none" stroke="#00ffd9" stroke-width="3.5" stroke-linecap="round" stroke-linejoin="round"/>
<polyline points="676.9,450.0 676.5,450.3" fill="none" stroke="#00ffca" stroke-width="3.5" stroke-linecap="round" stroke-linejoin="round"/>
<polyline points="676.5,450.3 676.1,450.6" fill="none" stroke="#00ffba" stroke-width="3.5" stroke-linecap="round" stroke-linejoin="round"/>
<polyline points="676.1,450.6 675.7,451.0 675.3,451.3" fill="none" stroke="#00ffab" stroke-width="3.5" stroke-linecap="round" stroke-linejoin="round"/>
<polyline points="675.3,451.3 674.8,451.6" fill="none" stroke="#00ff9c" stroke-width="3.5" stroke-linecap="round" stroke-linejoin="round"/>
<polyline points="674.8,451.6 674.3,452.0" fill="none" stroke="#00ff8d" stroke-width="3.5" stroke-linecap="round" stroke-linejoin="round"/>
<polyline points="674.3,452.0 673.8,452.3" fill="none" stroke="#00ff7d" stroke-width="3.5" stroke-linecap="round" stroke-linejoin="round"/>
<polyline points="673.8,452.3 673.3,452.6" fill="none" stroke="#00ff6c" stroke-width="3.5" stroke-linecap="round" stroke-linejoin="round"/>
<polyline points="673.3,452.6 672.8,453.0" fill="none" stroke="#00ff5c" stroke-width="3.5" stroke-linecap="round" stroke-linejoin="round"/>
<polyline points="672.8,453.0 672.2,453.3" fill="none" stroke="#00ff4b" stroke-width="3.5" stroke-linecap="round" stroke-linejoin="round"/>
<polyline points="672.2,453.3 671.6,453.6" fill="none" stroke="#00ff3a" stroke-width="3.5" stroke-linecap="round" stroke-linejoin="round"/>
<polyline points="671.6,453.6 671.0,454.0 670.4,454.3" fill="none" stroke="#00ff2a" stroke-width="3.5" stroke-linecap="round" stroke-linejoin="round"/>
<polyline points="670.4,454.3 669.7,454.6" fill="none" stroke="#00ff19" stroke-width="3.5" stroke-linecap="round" stroke-linejoin="round"/>
<polyline points="669.7,454.6 669.1,455.0" fill="none" stroke="#00ff08" stroke-width="3.5" stroke-linecap="round" stroke-linejoin="round"/>
<polyline points="669.1,455.0 668.4,455.3" fill="none" stroke="#12ff00" stroke-width="3.5" stroke-linecap="round" stroke-linejoin="round"/>
<polyline points="668.4,455.3 667.7,455.6" fill="none" stroke="#36ff00" stroke-width="3.5" stroke-linecap="round" stroke-linejoin="round"/>
<polyline points="667.7,455.6 666.9,456.0" fill="none" stroke="#5bff00" stroke-width="3.5" stroke-linecap="round" stroke-linejoin="round"/>
<polyline points="666.9,456.0 666.2,456.3" fill="none" stroke="#7fff00" stroke-width="3.5" stroke-linecap="round" stroke-linejoin="round"/>
<polyline points="666.2,456.3 665.4,456.6" fill="none" stroke="#a3ff00" stroke-width="3.5" stroke-linecap="round" stroke-linejoin="round"/>
<polyline points="665.4,456.6 664.6,457.0 663.8,457.3" fill="none" stroke="#c7ff00" stroke-width="3.5" stroke-linecap="round" stroke-linejoin="round"/>
<polyline points="663.8,457.3 663.0,457.6" fill="none" stroke="#ebff00" stroke-width="3.5" stroke-linecap="round" stroke-linejoin="round"/>
<polyline points="663.0,457.6 662.2,458.0" fill="none" stroke="#fff700" stroke-width="3.5" stroke-linecap="round" stroke-linejoin="round"/>
<polyline points="662.2,458.0 661.3,458.3" fill="none" stroke="#ffe700" stroke-width="3.5" stroke-linecap="round" stroke-linejoin="round"/>
<polyline points="661.3,458.3 660.5,458.6 659.6,459.0" fill="none" stroke="#ffd600" stroke-width="3.5" stroke-linecap="round" stroke-linejoin="round"/>
<polyline points="659.6,459.0 658.7,459.3" fill="none" stroke="#ffc600" stroke-width="3.5" stroke-linecap="round" stroke-linejoin="round"/>
<polyline points="658.7,459.3 657.7,459.6" fill="none" stroke="#ffb500" stroke-width="3.5" stroke-linecap="round" stroke-linejoin="round"/>
<polyline points="657.7,459.6 656.8,460.0 655.9,460.3" fill="none" stroke="#ffa500" stroke-width="3.5" stroke-linecap="round" stroke-linejoin="round"/>
<polyline points="655.9,460.3 654.9,460.7" fill="none" stroke="#ff9400" stroke-width="3.5" stroke-linecap="round" stroke-linejoin="round"/>
<polyline points="654.9,460.7 653.9,461.0 652.9,461.3" fill="none" stroke="#ff8400" stroke-width="3.5" stroke-linecap="round" stroke-linejoin="round"/>
<polyline points="652.9,461.3 651.9,461.7" fill="none" stroke="#ff7300" stroke-width="3.5" stroke-linecap="round" stroke-linejoin="round"/>
<polyline points="651.9,461.7 650.9,462.0 649.9,462.3" fill="none" stroke="#ff6200" stroke-width="3.5" stroke-linecap="round" stroke-linejoin="round"/>
<polyline points="649.9,462.3 648.8,462.7 647.8,463.0" fill="none" stroke="#ff5200" stroke-width="3.5" stroke-linecap="round" stroke-linejoin="round"/>
<polyline points="647.8,463.0 646.7,463.3" fill="none" stroke="#ff4100" stroke-width="3.5" stroke-linecap="round" stroke-linejoin="round"/>
<polyline points="646.7,463.3 645.7,463.7 644.6,464.0" fill="none" stroke="#ff3000" stroke-width="3.5" stroke-linecap="round" stroke-linejoin="round"/>
<polyline points="644.6,464.0 643.5,464.3 642.4,464.7 641.3,465.0" fill="none" stroke="#ff2000" stroke-width="3.5" stroke-linecap="round" stroke-linejoin="round"/>
<polyline points="641.3,465.0 640.1,465.3 639.0,465.7" fill="none" stroke="#ff0f00" stroke-width="3.5" stroke-linecap="round" stroke-linejoin="round"/>
<polyline points="639.0,465.7 637.9,466.0 636.7,466.3 635.6,466.7" fill="none" stroke="#ff0103" stroke-width="3.5" stroke-linecap="round" stroke-linejoin="round"/>
<polyline points="635.6,466.7 634.4,467.0 633.3,467.3 632.1,467.7 630.9,468.0" fill="none" stroke="#ff1023" stroke-width="3.5" stroke-linecap="round" stroke-linejoin="round"/>
<polyline points="630.9,468.0 629.8,468.3 628.6,468.7 627.4,469.0 626.2,469.3 625.0,469.7 623.8,470.0 622.6,470.3 621.5,470.7 620.3,471.0 619.1,471.3 617.9,471.7 616.7,472.0 615.5,472.3 614.3,472.7 613.1,473.0 612.0,473.3 610.8,473.7 609.6,474.0" fill="none" stroke="#ff1e43" stroke-width="3.5" stroke-linecap="round" stroke-linejoin="round"/>
<polyline points="609.6,474.0 608.5,474.3 607.3,474.7 606.1,475.0" fill="none" stroke="#ff1023" stroke-width="3.5" stroke-linecap="round" stroke-linejoin="round"/>
<polyline points="606.1,475.0 605.0,475.3 603.9,475.7 602.7,476.0" fill="none" stroke="#ff0103" stroke-width="3.5" stroke-linecap="round" stroke-linejoin="round"/>
<polyline points="602.7,476.0 601.6,476.3 600.5,476.7 599.4,477.0" fill="none" stroke="#ff0f00" stroke-width="3.5" stroke-linecap="round" stroke-linejoin="round"/>
<polyline points="599.4,477.0 598.3,477.3 597.2,477.7" fill="none" stroke="#ff2000" stroke-width="3.5" stroke-linecap="round" stroke-linejoin="round"/>
<polyline points="597.2,477.7 596.1,478.0 595.0,478.3" fill="none" stroke="#ff3000" stroke-width="3.5" stroke-linecap="round" stroke-linejoin="round"/>
<polyline points="595.0,478.3 594.0,478.7 592.9,479.0" fill="none" stroke="#ff4100" stroke-width="3.5" stroke-linecap="round" stroke-linejoin="round"/>
<polyline points="592.9,479.0 591.9,479.3" fill="none" stroke="#ff5200" stroke-width="3.5" stroke-linecap="round" stroke-linejoin="round"/>
<polyline points="591.9,479.3 590.9,479.7 589.9,480.0" fill="none" stroke="#ff6200" stroke-width="3.5" stroke-linecap="round" stroke-linejoin="round"/>
<polyline points="589.9,480.0 588.9,480.3" fill="none" stroke="#ff7300" stroke-width="3.5" stroke-linecap="round" stroke-linejoin="round"/>
<polyline points="588.9,480.3 587.9,480.7 586.9,481.0" fill="none" stroke="#ff8400" stroke-width="3.5" stroke-linecap="round" stroke-linejoin="round"/>
<polyline points="586.9,481.0 586.0,481.3" fill="none" stroke="#ff9400" stroke-width="3.5" stroke-linecap="round" stroke-linejoin="round"/>
<polyline points="586.0,481.3 585.0,481.7 584.1,482.0" fill="none" stroke="#ffa500" stroke-width="3.5" stroke-linecap="round" stroke-linejoin="round"/>
<polyline points="584.1,482.0 583.2,482.3" fill="none" stroke="#ffb500" stroke-width="3.5" stroke-linecap="round" stroke-linejoin="round"/>
<polyline points="583.2,482.3 582.3,482.7" fill="none" stroke="#ffc600" stroke-width="3.5" stroke-linecap="round" stroke-linejoin="round"/>
<polyline points="582.3,482.7 581.4,483.0" fill="none" stroke="#ffd600" stroke-width="3.5" stroke-linecap="round" stroke-linejoin="round"/>
<polyline points="581.4,483.0 580.6,483.3 579.7,483.7" fill="none" stroke="#ffe700" stroke-width="3.5" stroke-linecap="round" stroke-linejoin="round"/>
<polyline points="579.7,483.7 578.9,484.0" fill="none" stroke="#fff700" stroke-width="3.5" stroke-linecap="round" stroke-linejoin="round"/>
<polyline points="578.9,484.0 578.1,484.3" fill="none" stroke="#ebff00" stroke-width="3.5" stroke-linecap="round" stroke-linejoin="round"/>
<polyline points="578.1,484.3 577.3,484.7" fill="none" stroke="#c7ff00" stroke-width="3.5" stroke-linecap="round" stroke-linejoin="round"/>
<polyline points="577.3,484.7 576.6,485.0" fill="none" stroke="#a3ff00" stroke-width="3.5" stroke-linecap="round" stroke-linejoin="round"/>
<polyline points="576.6,485.0 575.8,485.3" fill="none" stroke="#7fff00" stroke-width="3.5" stroke-linecap="round" stroke-linejoin="round"/>
<polyline points="575.8,485.3 575.1,485.7" fill="none" stroke="#5bff00" stroke-width="3.5" stroke-linecap="round" stroke-linejoin="round"/>
<polyline points="575.1,485.7 574.4,486.0 573.7,486.3" fill="none" stroke="#36ff00" stroke-width="3.5" stroke-linecap="round" stroke-linejoin="round"/>
<polyline points="573.7,486.3 573.0,486.7" fill="none" stroke="#12ff00" stroke-width="3.5" stroke-linecap="round" stroke-linejoin="round"/>
<polyline points="573.0,486.7 572.4,487.0" fill="none" stroke="#00ff08" stroke-width="3.5" stroke-linecap="round" stroke-linejoin="round"/>
<polyline points="572.4,487.0 571.8,487.3" fill="none" stroke="#00ff19" stroke-width="3.5" stroke-linecap="round" stroke-linejoin="round"/>
<polyline points="571.8,487.3 571.2,487.7" fill="none" stroke="#00ff2a" stroke-width="3.5" stroke-linecap="round" stroke-linejoin="round"/>
<polyline points="571.2,487.7 570.6,488.0" fill="none" stroke="#00ff3a" stroke-width="3.5" stroke-linecap="round" stroke-linejoin="round"/>
<polyline points="570.6,488.0 570.0,488.3" fill="none" stroke="#00ff4b" stroke-width="3.5" stroke-linecap="round" stroke-linejoin="round"/>
<polyline points="570.0,488.3 569.5,488.7" fill="none" stroke="#00ff5c" stroke-width="3.5" stroke-linecap="round" stroke-linejoin="round"/>
<polyline points="569.5,488.7 569.0,489.0" fill="none" stroke="#00ff6c" stroke-width="3.5" stroke-linecap="round" stroke-linejoin="round"/>
<polyline points="569.0,489.0 568.5,489.3" fill="none" stroke="#00ff7d" stroke-width="3.5" stroke-linecap="round" stroke-linejoin="round"/>
<polyline points="568.5,489.3 568.0,489.7" fill="none" stroke="#00ff8d" stroke-width="3.5" stroke-linecap="round" stroke-linejoin="round"/>
<polyline points="568.0,489.7 567.6,490.0" fill="none" stroke="#00ff9c" stroke-width="3.5" stroke-linecap="round" stroke-linejoin="round"/>
<polyline points="567.6,490.0 567.2,490.3" fill="none" stroke="#00ffab" stroke-width="3.5" stroke-linecap="round" stroke-linejoin="round"/>
<polyline points="567.2,490.3 566.8,490.7" fill="none" stroke="#00ffba" stroke-width="3.5" stroke-linecap="round" stroke-linejoin="round"/>
<polyline points="566.8,490.7 566.4,491.0" fill="none" stroke="#00ffca" stroke-width="3.5" stroke-linecap="round" stroke-linejoin="round"/>
<polyline points="566.4,491.0 566.0,491.4 565.7,491.7" fill="none" stroke="#00ffd9" stroke-width="3.5" stroke-linecap="round" stroke-linejoin="round"/>
<polyline points="565.7,491.7 565.4,492.0" fill="none" stroke="#00ffe8" stroke-width="3.5" stroke-linecap="round" stroke-linejoin="round"/>
<polyline points="565.4,492.0 565.1,492.4" fill="none" stroke="#00fff7" stroke-width="3.5" stroke-linecap="round" stroke-linejoin="round"/>
<polyline points="565.1,492.4 564.9,492.7 564.7,493.0" fill="none" stroke="#00f1ff" stroke-width="3.5" stroke-linecap="round" stroke-linejoin="round"/>
<polyline points="564.7,493.0 564.5,493.4" fill="none" stroke="#00d4ff" stroke-width="3.5" stroke-linecap="round" stroke-linejoin="round"/>
<polyline points="564.5,493.4 564.3,493.7 564.1,494.0" fill="none" stroke="#00b8ff" stroke-width="3.5" stroke-linecap="round" stroke-linejoin="round"/>
<polyline points="564.1,494.0 564.0,494.4 563.9,494.7 563.8,495.0" fill="none" stroke="#009cff" stroke-width="3.5" stroke-linecap="round" stroke-linejoin="round"/>
<polyline points="563.8,495.0 563.8,495.4 563.8,495.7 563.8,496.0 563.8,496.4" fill="none" stroke="#007fff" stroke-width="3.5" stroke-linecap="round" stroke-linejoin="round"/>
<polyline points="563.8,496.4 563.9,496.7 564.0,497.0" fill="none" stroke="#009cff" stroke-width="3.5" stroke-linecap="round" stroke-linejoin="round"/>
<polyline points="564.0,497.0 564.2,497.4 564.3,497.7" fill="none" stroke="#00b8ff" stroke-width="3.5" stroke-linecap="round" stroke-linejoin="round"/>
<polyline points="564.3,497.7 564.5,498.0 564.7,498.4" fill="none" stroke="#00d4ff" stroke-width="3.5" stroke-linecap="round" stroke-linejoin="round"/>
<polyline points="564.7,498.4 565.0,498.7" fill="none" stroke="#00f1ff" stroke-width="3.5" stroke-linecap="round" stroke-linejoin="round"/>
<polyline points="565.0,498.7 565.2,499.0" fill="none" stroke="#00fff7" stroke-width="3.5" stroke-linecap="round" stroke-linejoin="round"/>
<polyline points="565.2,499.0 565.5,499.4 565.8,499.7" fill="none" stroke="#00ffe8" stroke-width="3.5" stroke-linecap="round" stroke-linejoin="round"/>
<polyline points="565.8,499.7 566.2,500.0" fill="none" stroke="#00ffd9" stroke-width="3.5" stroke-linecap="round" stroke-linejoin="round"/>
<polyline points="566.2,500.0 566.6,500.4" fill="none" stroke="#00ffca" stroke-width="3.5" stroke-linecap="round" stroke-linejoin="round"/>
<polyline points="566.6,500.4 566.9,500.7" fill="none" stroke="#00ffba" stroke-width="3.5" stroke-linecap="round" stroke-linejoin="round"/>
<polyline points="566.9,500.7 567.4,501.0" fill="none" stroke="#00ffab" stroke-width="3.5" stroke-linecap="round" stroke-linejoin="round"/>
<polyline points="567.4,501.0 567.8,501.4" fill="none" stroke="#00ff9c" stroke-width="3.5" stroke-linecap="round" stroke-linejoin="round"/>
<polyline points="567.8,501.4 568.3,501.7" fill="none" stroke="#00ff8d" stroke-width="3.5" stroke-linecap="round" stroke-linejoin="round"/>
<polyline points="568.3,501.7 568.7,502.0" fill="none" stroke="#00ff7d" stroke-width="3.5" stroke-linecap="round" stroke-linejoin="round"/>
<polyline points="568.7,502.0 569.3,502.4" fill="none" stroke="#00ff6c" stroke-width="3.5" stroke-linecap="round" stroke-linejoin="round"/>
<polyline points="569.3,502.4 569.8,502.7" fill="none" stroke="#00ff5c" stroke-width="3.5" stroke-linecap="round" stroke-linejoin="round"/>
<polyline points="569.8,502.7 570.4,503.0" fill="none" stroke="#00ff4b" stroke-width="3.5" stroke-linecap="round" stroke-linejoin="round"/>
<polyline points="570.4,503.0 570.9,503.4" fill="none" stroke="#00ff3a" stroke-width="3.5" stroke-linecap="round" stroke-linejoin="round"/>
<polyline points="570.9,503.4 571.5,503.7" fill="none" stroke="#00ff2a" stroke-width="3.5" stroke-linecap="round" stroke-linejoin="round"/>
<polyline points="571.5,503.7 572.2,504.0" fill="none" stroke="#00ff19" stroke-width="3.5" stroke-linecap="round" stroke-linejoin="round"/>
<polyline points="572.2,504.0 572.8,504.4" fill="none" stroke="#00ff08" stroke-width="3.5" stroke-linecap="round" stroke-linejoin="round"/>
<polyline points="572.8,504.4 573.5,504.7" fill="none" stroke="#12ff00" stroke-width="3.5" stroke-linecap="round" stroke-linejoin="round"/>
<polyline points="573.5,504.7 574.2,505.0" fill="none" stroke="#36ff00" stroke-width="3.5" stroke-linecap="round" stroke-linejoin="round"/>
<polyline points="574.2,505.0 574.9,505.4" fill="none" stroke="#5bff00" stroke-width="3.5" stroke-linecap="round" stroke-linejoin="round"/>
<polyline points="574.9,505.4 575.7,505.7" fill="none" stroke="#7fff00" stroke-width="3.5" stroke-linecap="round" stroke-linejoin="round"/>
<polyline points="575.7,505.7 576.4,506.0" fill="none" stroke="#c7ff00" stroke-width="3.5" stroke-linecap="round" stroke-linejoin="round"/>
<polyline points="576.4,506.0 577.2,506.4" fill="none" stroke="#ebff00" stroke-width="3.5" stroke-linecap="round" stroke-linejoin="round"/>
<polyline points="577.2,506.4 578.0,506.7" fill="none" stroke="#fff700" stroke-width="3.5" stroke-linecap="round" stroke-linejoin="round"/>
<polyline points="578.0,506.7 578.9,507.0" fill="none" stroke="#ffe700" stroke-width="3.5" stroke-linecap="round" stroke-linejoin="round"/>
<polyline points="578.9,507.0 579.7,507.4" fill="none" stroke="#ffd600" stroke-width="3.5" stroke-linecap="round" stroke-linejoin="round"/>
<polyline points="579.7,507.4 580.6,507.7" fill="none" stroke="#ffc600" stroke-width="3.5" stroke-linecap="round" stroke-linejoin="round"/>
<polyline points="580.6,507.7 581.5,508.0" fill="none" stroke="#ffb500" stroke-width="3.5" stroke-linecap="round" stroke-linejoin="round"/>
<polyline points="581.5,508.0 582.4,508.4" fill="none" stroke="#ffa500" stroke-width="3.5" stroke-linecap="round" stroke-linejoin="round"/>
<polyline points="582.4,508.4 583.3,508.7" fill="none" stroke="#ff9400" stroke-width="3.5" stroke-linecap="round" stroke-linejoin="round"/>
<polyline points="583.3,508.7 584.3,509.0 585.2,509.4" fill="none" stroke="#ff8400" stroke-width="3.5" stroke-linecap="round" stroke-linejoin="round"/>
<polyline points="585.2,509.4 586.2,509.7" fill="none" stroke="#ff7300" stroke-width="3.5" stroke-linecap="round" stroke-linejoin="round"/>
<polyline points="586.2,509.7 587.2,510.0" fill="none" stroke="#ff6200" stroke-width="3.5" stroke-linecap="round" stroke-linejoin="round"/>
<polyline points="587.2,510.0 588.3,510.4" fill="none" stroke="#ff5200" stroke-width="3.5" stroke-linecap="round" stroke-linejoin="round"/>
<polyline points="588.3,510.4 589.3,510.7" fill="none" stroke="#ff4100" stroke-width="3.5" stroke-linecap="round" stroke-linejoin="round"/>
<polyline points="589.3,510.7 590.4,511.0" fill="none" stroke="#ff3000" stroke-width="3.5" stroke-linecap="round" stroke-linejoin="round"/>
<polyline points="590.4,511.0 591.4,511.4" fill="none" stroke="#ff2000" stroke-width="3.5" stroke-linecap="round" stroke-linejoin="round"/>
<polyline points="591.4,511.4 592.5,511.7" fill="none" stroke="#ff0f00" stroke-width="3.5" stroke-linecap="round" stroke-linejoin="round"/>
<polyline points="592.5,511.7 593.6,512.0 594.8,512.4" fill="none" stroke="#ff0103" stroke-width="3.5" stroke-linecap="round" stroke-linejoin="round"/>
<polyline points="594.8,512.4 595.9,512.7" fill="none" stroke="#ff1023" stroke-width="3.5" stroke-linecap="round" stroke-linejoin="round"/>
<polyline points="595.9,512.7 597.1,513.0" fill="none" stroke="#ff1e43" stroke-width="3.5" stroke-linecap="round" stroke-linejoin="round"/>
<polyline points="597.1,513.0 598.2,513.4 599.4,513.7" fill="none" stroke="#ff2c64" stroke-width="3.5" stroke-linecap="round" stroke-linejoin="round"/>
<polyline points="599.4,513.7 600.6,514.0" fill="none" stroke="#ff3b84" stroke-width="3.5" stroke-linecap="round" stroke-linejoin="round"/>
<polyline points="600.6,514.0 601.8,514.4 603.1,514.7" fill="none" stroke="#ff4f9c" stroke-width="3.5" stroke-linecap="round" stroke-linejoin="round"/>
<polyline points="603.1,514.7 604.3,515.0" fill="none" stroke="#ff68ae" stroke-width="3.5" stroke-linecap="round" stroke-linejoin="round"/>
<polyline points="604.3,515.0 605.5,515.4 606.8,515.7" fill="none" stroke="#ff81c1" stroke-width="3.5" stroke-linecap="round" stroke-linejoin="round"/>
<polyline points="606.8,515.7 608.1,516.0 609.4,516.4" fill="none" stroke="#ff9ad4" stroke-width="3.5" stroke-linecap="round" stroke-linejoin="round"/>
<polyline points="609.4,516.4 610.6,516.7 611.9,517.0 613.3,517.4 614.6,517.7 615.9,518.0 617.2,518.4 618.6,518.7 619.9,519.0 621.3,519.4 622.7,519.7 624.0,520.0 625.4,520.4 626.8,520.7 628.2,521.0 629.5,521.4 630.9,521.7 632.3,522.0 633.7,522.4 635.1,522.7 636.5,523.1 637.9,523.4 639.3,523.7 640.7,524.1 642.1,524.4 643.5,524.7 644.8,525.1 646.2,525.4 647.6,525.7 649.0,526.1 650.4,526.4 651.7,526.7 653.1,527.1 654.5,527.4 655.8,527.7 657.2,528.1 658.5,528.4 659.8,528.7 661.2,529.1 662.5,529.4 663.8,529.7 665.1,530.1" fill="none" stroke="#ffb4e7" stroke-width="3.5" stroke-linecap="round" stroke-linejoin="round"/>
<polyline points="665.1,530.1 666.4,530.4 667.6,530.7" fill="none" stroke="#ff9ad4" stroke-width="3.5" stroke-linecap="round" stroke-linejoin="round"/>
<polyline points="667.6,530.7 668.9,531.1" fill="none" stroke="#ff81c1" stroke-width="3.5" stroke-linecap="round" stroke-linejoin="round"/>
<polyline points="668.9,531.1 670.1,531.4 671.4,531.7" fill="none" stroke="#ff68ae" stroke-width="3.5" stroke-linecap="round" stroke-linejoin="round"/>
<polyline points="671.4,531.7 672.6,532.1 673.8,532.4" fill="none" stroke="#ff4f9c" stroke-width="3.5" stroke-linecap="round" stroke-linejoin="round"/>
<polyline points="673.8,532.4 675.0,532.7" fill="none" stroke="#ff3b84" stroke-width="3.5" stroke-linecap="round" stroke-linejoin="round"/>
<polyline points="675.0,532.7 676.2,533.1" fill="none" stroke="#ff2c64" stroke-width="3.5" stroke-linecap="round" stroke-linejoin="round"/>
<polyline points="676.2,533.1 677.4,533.4 678.6,533.7" fill="none" stroke="#ff1e43" stroke-width="3.5" stroke-linecap="round" stroke-linejoin="round"/>
<polyline points="678.6,533.7 679.7,534.1" fill="none" stroke="#ff1023" stroke-width="3.5" stroke-linecap="round" stroke-linejoin="round"/>
<polyline points="679.7,534.1 680.8,534.4" fill="none" stroke="#ff0103" stroke-width="3.5" stroke-linecap="round" stroke-linejoin="round"/>
<polyline points="680.8,534.4 681.9,534.7" fill="none" stroke="#ff0f00" stroke-width="3.5" stroke-linecap="round" stroke-linejoin="round"/>
<polyline points="681.9,534.7 683.0,535.1 684.1,535.4" fill="none" stroke="#ff2000" stroke-width="3.5" stroke-linecap="round" stroke-linejoin="round"/>
<polyline points="684.1,535.4 685.2,535.7" fill="none" stroke="#ff3000" stroke-width="3.5" stroke-linecap="round" stroke-linejoin="round"/>
<polyline points="685.2,535.7 686.2,536.1" fill="none" stroke="#ff4100" stroke-width="3.5" stroke-linecap="round" stroke-linejoin="round"/>
<polyline points="686.2,536.1 687.3,536.4" fill="none" stroke="#ff5200" stroke-width="3.5" stroke-linecap="round" stroke-linejoin="round"/>
<polyline points="687.3,536.4 688.3,536.7" fill="none" stroke="#ff6200" stroke-width="3.5" stroke-linecap="round" stroke-linejoin="round"/>
<polyline points="688.3,536.7 689.2,537.1" fill="none" stroke="#ff7300" stroke-width="3.5" stroke-linecap="round" stroke-linejoin="round"/>
<polyline points="689.2,537.1 690.2,537.4" fill="none" stroke="#ff8400" stroke-width="3.5" stroke-linecap="round" stroke-linejoin="round"/>
<polyline points="690.2,537.4 691.2,537.7" fill="none" stroke="#ff9400" stroke-width="3.5" stroke-linecap="round" stroke-linejoin="round"/>
<polyline points="691.2,537.7 692.1,538.1" fill="none" stroke="#ffa500" stroke-width="3.5" stroke-linecap="round" stroke-linejoin="round"/>
<polyline points="692.1,538.1 693.0,538.4" fill="none" stroke="#ffb500" stroke-width="3.5" stroke-linecap="round" stroke-linejoin="round"/>
<polyline points="693.0,538.4 693.9,538.7" fill="none" stroke="#ffc600" stroke-width="3.5" stroke-linecap="round" stroke-linejoin="round"/>
<polyline points="693.9,538.7 694.8,539.1" fill="none" stroke="#ffd600" stroke-width="3.5" stroke-linecap="round" stroke-linejoin="round"/>
<polyline points="694.8,539.1 695.6,539.4" fill="none" stroke="#ffe700" stroke-width="3.5" stroke-linecap="round" stroke-linejoin="round"/>
<polyline points="695.6,539.4 696.5,539.7" fill="none" stroke="#fff700" stroke-width="3.5" stroke-linecap="round" stroke-linejoin="round"/>
<polyline points="696.5,539.7 697.3,540.1" fill="none" stroke="#ebff00" stroke-width="3.5" stroke-linecap="round" stroke-linejoin="round"/>
<polyline points="697.3,540.1 698.1,540.4" fill="none" stroke="#c7ff00" stroke-width="3.5" stroke-linecap="round" stroke-linejoin="round"/>
<polyline points="698.1,540.4 698.8,540.7" fill="none" stroke="#a3ff00" stroke-width="3.5" stroke-linecap="round" stroke-linejoin="round"/>
<polyline points="698.8,540.7 699.6,541.1" fill="none" stroke="#7fff00" stroke-width="3.5" stroke-linecap="round" stroke-linejoin="round"/>
<polyline points="699.6,541.1 700.3,541.4" fill="none" stroke="#5bff00" stroke-width="3.5" stroke-linecap="round" stroke-linejoin="round"/>
<polyline points="700.3,541.4 701.0,541.7" fill="none" stroke="#36ff00" stroke-width="3.5" stroke-linecap="round" stroke-linejoin="round"/>
<polyline points="701.0,541.7 701.6,542.1" fill="none" stroke="#12ff00" stroke-width="3.5" stroke-linecap="round" stroke-linejoin="round"/>
<polyline points="701.6,542.1 702.3,542.4" fill="none" stroke="#00ff08" stroke-width="3.5" stroke-linecap="round" stroke-linejoin="round"/>
<polyline points="702.3,542.4 702.9,542.7" fill="none" stroke="#00ff19" stroke-width="3.5" stroke-linecap="round" stroke-linejoin="round"/>
<polyline points="702.9,542.7 703.5,543.1" fill="none" stroke="#00ff2a" stroke-width="3.5" stroke-linecap="round" stroke-linejoin="round"/>
<polyline points="703.5,543.1 704.1,543.4" fill="none" stroke="#00ff4b" stroke-width="3.5" stroke-linecap="round" stroke-linejoin="round"/>
<polyline points="704.1,543.4 704.7,543.7" fill="none" stroke="#00ff5c" stroke-width="3.5" stroke-linecap="round" stroke-linejoin="round"/>
<polyline points="704.7,543.7 705.2,544.1" fill="none" stroke="#00ff6c" stroke-width="3.5" stroke-linecap="round" stroke-linejoin="round"/>
<polyline points="705.2,544.1 705.7,544.4" fill="none" stroke="#00ff7d" stroke-width="3.5" stroke-linecap="round" stroke-linejoin="round"/>
<polyline points="705.7,544.4 706.2,544.7" fill="none" stroke="#00ff8d" stroke-width="3.5" stroke-linecap="round" stroke-linejoin="round"/>
<polyline points="706.2,544.7 706.6,545.1" fill="none" stroke="#00ff9c" stroke-width="3.5" stroke-linecap="round" stroke-linejoin="round"/>
<polyline points="706.6,545.1 707.0,545.4" fill="none" stroke="#00ffab" stroke-width="3.5" stroke-linecap="round" stroke-linejoin="round"/>
<polyline points="707.0,545.4 707.4,545.7" fill="none" stroke="#00ffba" stroke-width="3.5" stroke-linecap="round" stroke-linejoin="round"/>
<polyline points="707.4,545.7 707.8,546.1" fill="none" stroke="#00ffca" stroke-width="3.5" stroke-linecap="round" stroke-linejoin="round"/>
<polyline points="707.8,546.1 708.2,546.4 708.5,546.7" fill="none" stroke="#00ffd9" stroke-width="3.5" stroke-linecap="round" stroke-linejoin="round"/>
<polyline points="708.5,546.7 708.8,547.1" fill="none" stroke="#00ffe8" stroke-width="3.5" stroke-linecap="round" stroke-linejoin="round"/>
<polyline points="708.8,547.1 709.1,547.4" fill="none" stroke="#00fff7" stroke-width="3.5" stroke-linecap="round" stroke-linejoin="round"/>
<polyline points="709.1,547.4 709.3,547.7" fill="none" stroke="#00f1ff" stroke-width="3.5" stroke-linecap="round" stroke-linejoin="round"/>
<polyline points="709.3,547.7 709.5,548.1 709.7,548.4" fill="none" stroke="#00d4ff" stroke-width="3.5" stroke-linecap="round" stroke-linejoin="round"/>
<polyline points="709.7,548.4 709.9,548.7 710.1,549.1" fill="none" stroke="#00b8ff" stroke-width="3.5" stroke-linecap="round" stroke-linejoin="round"/>
<polyline points="710.1,549.1 710.2,549.4 710.3,549.7 710.3,550.1" fill="none" stroke="#009cff" stroke-width="3.5" stroke-linecap="round" stroke-linejoin="round"/>
<polyline points="710.3,550.1 710.4,550.4 710.4,550.7 710.3,551.1 710.3,551.4" fill="none" stroke="#007fff" stroke-width="3.5" stroke-linecap="round" stroke-linejoin="round"/>
<polyline points="710.3,551.4 710.2,551.7 710.1,552.1 710.0,552.4" fill="none" stroke="#009cff" stroke-width="3.5" stroke-linecap="round" stroke-linejoin="round"/>
<polyline points="710.0,552.4 709.8,552.7" fill="none" stroke="#00b8ff" stroke-width="3.5" stroke-linecap="round" stroke-linejoin="round"/>
<polyline points="709.8,552.7 709.6,553.1 709.4,553.4" fill="none" stroke="#00d4ff" stroke-width="3.5" stroke-linecap="round" stroke-linejoin="round"/>
<polyline points="709.4,553.4 709.2,553.8" fill="none" stroke="#00f1ff" stroke-width="3.5" stroke-linecap="round" stroke-linejoin="round"/>
<polyline points="709.2,553.8 708.9,554.1 708.6,554.4" fill="none" stroke="#00fff7" stroke-width="3.5" stroke-linecap="round" stroke-linejoin="round"/>
<polyline points="708.6,554.4 708.3,554.8" fill="none" stroke="#00ffe8" stroke-width="3.5" stroke-linecap="round" stroke-linejoin="round"/>
<polyline points="708.3,554.8 708.0,555.1" fill="none" stroke="#00ffd9" stroke-width="3.5" stroke-linecap="round" stroke-linejoin="round"/>
<polyline points="708.0,555.1 707.6,555.4" fill="none" stroke="#00ffca" stroke-width="3.5" stroke-linecap="round" stroke-linejoin="round"/>
<polyline points="707.6,555.4 707.2,555.8" fill="none" stroke="#00ffba" stroke-width="3.5" stroke-linecap="round" stroke-linejoin="round"/>
<polyline points="707.2,555.8 706.8,556.1" fill="none" stroke="#00ffab" stroke-width="3.5" stroke-linecap="round" stroke-linejoin="round"/>
<polyline points="706.8,556.1 706.3,556.4" fill="none" stroke="#00ff9c" stroke-width="3.5" stroke-linecap="round" stroke-linejoin="round"/>
<polyline points="706.3,556.4 705.8,556.8" fill="none" stroke="#00ff8d" stroke-width="3.5" stroke-linecap="round" stroke-linejoin="round"/>
<polyline points="705.8,556.8 705.3,557.1" fill="none" stroke="#00ff7d" stroke-width="3.5" stroke-linecap="round" stroke-linejoin="round"/>
<polyline points="705.3,557.1 704.8,557.4" fill="none" stroke="#00ff6c" stroke-width="3.5" stroke-linecap="round" stroke-linejoin="round"/>
<polyline points="704.8,557.4 704.3,557.8" fill="none" stroke="#00ff5c" stroke-width="3.5" stroke-linecap="round" stroke-linejoin="round"/>
<polyline points="704.3,557.8 703.7,558.1" fill="none" stroke="#00ff4b" stroke-width="3.5" stroke-linecap="round" stroke-linejoin="round"/>
<polyline points="703.7,558.1 703.1,558.4" fill="none" stroke="#00ff3a" stroke-width="3.5" stroke-linecap="round" stroke-linejoin="round"/>
<polyline points="703.1,558.4 702.4,558.8" fill="none" stroke="#00ff2a" stroke-width="3.5" stroke-linecap="round" stroke-linejoin="round"/>
<polyline points="702.4,558.8 701.8,559.1" fill="none" stroke="#00ff19" stroke-width="3.5" stroke-linecap="round" stroke-linejoin="round"/>
<polyline points="701.8,559.1 701.1,559.4" fill="none" stroke="#00ff08" stroke-width="3.5" stroke-linecap="round" stroke-linejoin="round"/>
<polyline points="701.1,559.4 700.4,559.8" fill="none" stroke="#12ff00" stroke-width="3.5" stroke-linecap="round" stroke-linejoin="round"/>
<polyline points="700.4,559.8 699.7,560.1" fill="none" stroke="#36ff00" stroke-width="3.5" stroke-linecap="round" stroke-linejoin="round"/>
<polyline points="699.7,560.1 699.0,560.4" fill="none" stroke="#5bff00" stroke-width="3.5" stroke-linecap="round" stroke-linejoin="round"/>
<polyline points="699.0,560.4 698.2,560.8" fill="none" stroke="#7fff00" stroke-width="3.5" stroke-linecap="round" stroke-linejoin="round"/>
<polyline points="698.2,560.8 697.4,561.1" fill="none" stroke="#a3ff00" stroke-width="3.5" stroke-linecap="round" stroke-linejoin="round"/>
<polyline points="697.4,561.1 696.6,561.4" fill="none" stroke="#c7ff00" stroke-width="3.5" stroke-linecap="round" stroke-linejoin="round"/>
<polyline points="696.6,561.4 695.8,561.8" fill="none" stroke="#ebff00" stroke-width="3.5" stroke-linecap="round" stroke-linejoin="round"/>
<polyline points="695.8,561.8 694.9,562.1" fill="none" stroke="#fff700" stroke-width="3.5" stroke-linecap="round" stroke-linejoin="round"/>
<polyline points="694.9,562.1 694.0,562.4" fill="none" stroke="#ffe700" stroke-width="3.5" stroke-linecap="round" stroke-linejoin="round"/>
<polyline points="694.0,562.4 693.1,562.8" fill="none" stroke="#ffd600" stroke-width="3.5" stroke-linecap="round" stroke-linejoin="round"/>
<polyline points="693.1,562.8 692.2,563.1" fill="none" stroke="#ffc600" stroke-width="3.5" stroke-linecap="round" stroke-linejoin="round"/>
<polyline points="692.2,563.1 691.3,563.4" fill="none" stroke="#ffb500" stroke-width="3.5" stroke-linecap="round" stroke-linejoin="round"/>
<polyline points="691.3,563.4 690.3,563.8" fill="none" stroke="#ffa500" stroke-width="3.5" stroke-linecap="round" stroke-linejoin="round"/>
<polyline points="690.3,563.8 689.4,564.1" fill="none" stroke="#ff9400" stroke-width="3.5" stroke-linecap="round" stroke-linejoin="round"/>
<polyline points="689.4,564.1 688.4,564.4 687.4,564.8" fill="none" stroke="#ff8400" stroke-width="3.5" stroke-linecap="round" stroke-linejoin="round"/>
<polyline points="687.4,564.8 686.3,565.1" fill="none" stroke="#ff7300" stroke-width="3.5" stroke-linecap="round" stroke-linejoin="round"/>
<polyline points="686.3,565.1 685.3,565.4" fill="none" stroke="#ff6200" stroke-width="3.5" stroke-linecap="round" stroke-linejoin="round"/>
<polyline points="685.3,565.4 684.2,565.8" fill="none" stroke="#ff5200" stroke-width="3.5" stroke-linecap="round" stroke-linejoin="round"/>
<polyline points="684.2,565.8 683.2,566.1 682.1,566.4" fill="none" stroke="#ff4100" stroke-width="3.5" stroke-linecap="round" stroke-linejoin="round"/>
<polyline points="682.1,566.4 681.0,566.8" fill="none" stroke="#ff3000" stroke-width="3.5" stroke-linecap="round" stroke-linejoin="round"/>
<polyline points="681.0,566.8 679.8,567.1 678.7,567.4" fill="none" stroke="#ff2000" stroke-width="3.5" stroke-linecap="round" stroke-linejoin="round"/>
<polyline points="678.7,567.4 677.6,567.8" fill="none" stroke="#ff0f00" stroke-width="3.5" stroke-linecap="round" stroke-linejoin="round"/>
<polyline points="677.6,567.8 676.4,568.1 675.2,568.4" fill="none" stroke="#ff0103" stroke-width="3.5" stroke-linecap="round" stroke-linejoin="round"/>
<polyline points="675.2,568.4 674.0,568.8 672.8,569.1" fill="none" stroke="#ff1023" stroke-width="3.5" stroke-linecap="round" stroke-linejoin="round"/>
<polyline points="672.8,569.1 671.6,569.4 670.4,569.8" fill="none" stroke="#ff1e43" stroke-width="3.5" stroke-linecap="round" stroke-linejoin="round"/>
<polyline points="670.4,569.8 669.2,570.1 667.9,570.4" fill="none" stroke="#ff2c64" stroke-width="3.5" stroke-linecap="round" stroke-linejoin="round"/>
<polyline points="667.9,570.4 666.7,570.8 665.4,571.1" fill="none" stroke="#ff3b84" stroke-width="3.5" stroke-linecap="round" stroke-linejoin="round"/>
<polyline points="665.4,571.1 664.2,571.4 662.9,571.8 661.6,572.1 660.3,572.4" fill="none" stroke="#ff4f9c" stroke-width="3.5" stroke-linecap="round" stroke-linejoin="round"/>
<polyline points="660.3,572.4 659.0,572.8 657.7,573.1 656.4,573.4 655.1,573.8 653.8,574.1" fill="none" stroke="#ff68ae" stroke-width="3.5" stroke-linecap="round" stroke-linejoin="round"/>
<polyline points="653.8,574.1 652.5,574.4 651.2,574.8 649.9,575.1 648.5,575.4 647.2,575.8 645.9,576.1 644.6,576.4 643.3,576.8 642.0,577.1" fill="none" stroke="#ff81c1" stroke-width="3.5" stroke-linecap="round" stroke-linejoin="round"/>
<polyline points="642.0,577.1 640.6,577.4 639.3,577.8 638.0,578.1 636.7,578.4 635.4,578.8" fill="none" stroke="#ff68ae" stroke-width="3.5" stroke-linecap="round" stroke-linejoin="round"/>
<polyline points="635.4,578.8 634.1,579.1 632.8,579.4 631.5,579.8 630.3,580.1" fill="none" stroke="#ff4f9c" stroke-width="3.5" stroke-linecap="round" stroke-linejoin="round"/>
<polyline points="630.3,580.1 629.0,580.4 627.7,580.8" fill="none" stroke="#ff3b84" stroke-width="3.5" stroke-linecap="round" stroke-linejoin="round"/>
<polyline points="627.7,580.8 626.5,581.1 625.2,581.4" fill="none" stroke="#ff2c64" stroke-width="3.5" stroke-linecap="round" stroke-linejoin="round"/>
<polyline points="625.2,581.4 624.0,581.8 622.8,582.1" fill="none" stroke="#ff1e43" stroke-width="3.5" stroke-linecap="round" stroke-linejoin="round"/>
<polyline points="622.8,582.1 621.5,582.4 620.3,582.8" fill="none" stroke="#ff1023" stroke-width="3.5" stroke-linecap="round" stroke-linejoin="round"/>
<polyline points="620.3,582.8 619.1,583.1 618.0,583.4" fill="none" stroke="#ff0103" stroke-width="3.5" stroke-linecap="round" stroke-linejoin="round"/>
<polyline points="618.0,583.4 616.8,583.8" fill="none" stroke="#ff0f00" stroke-width="3.5" stroke-linecap="round" stroke-linejoin="round"/>
<polyline points="616.8,583.8 615.6,584.1 614.5,584.5" fill="none" stroke="#ff2000" stroke-width="3.5" stroke-linecap="round" stroke-linejoin="round"/>
<polyline points="614.5,584.5 613.4,584.8" fill="none" stroke="#ff3000" stroke-width="3.5" stroke-linecap="round" stroke-linejoin="round"/>
<polyline points="613.4,584.8 612.2,585.1 611.1,585.5" fill="none" stroke="#ff4100" stroke-width="3.5" stroke-linecap="round" stroke-linejoin="round"/>
<polyline points="611.1,585.5 610.1,585.8" fill="none" stroke="#ff5200" stroke-width="3.5" stroke-linecap="round" stroke-linejoin="round"/>
<polyline points="610.1,585.8 609.0,586.1" fill="none" stroke="#ff6200" stroke-width="3.5" stroke-linecap="round" stroke-linejoin="round"/>
<polyline points="609.0,586.1 607.9,586.5 606.9,586.8" fill="none" stroke="#ff7300" stroke-width="3.5" stroke-linecap="round" stroke-linejoin="round"/>
<polyline points="606.9,586.8 605.9,587.1" fill="none" stroke="#ff8400" stroke-width="3.5" stroke-linecap="round" stroke-linejoin="round"/>
<polyline points="605.9,587.1 604.9,587.5" fill="none" stroke="#ff9400" stroke-width="3.5" stroke-linecap="round" stroke-linejoin="round"/>
<polyline points="604.9,587.5 603.9,587.8" fill="none" stroke="#ffa500" stroke-width="3.5" stroke-linecap="round" stroke-linejoin="round"/>
<polyline points="603.9,587.8 602.9,588.1" fill="none" stroke="#ffb500" stroke-width="3.5" stroke-linecap="round" stroke-linejoin="round"/>
<polyline points="602.9,588.1 602.0,588.5" fill="none" stroke="#ffc600" stroke-width="3.5" stroke-linecap="round" stroke-linejoin="round"/>
<polyline points="602.0,588.5 601.1,588.8" fill="none" stroke="#ffd600" stroke-width="3.5" stroke-linecap="round" stroke-linejoin="round"/>
<polyline points="601.1,588.8 600.2,589.1 599.3,589.5" fill="none" stroke="#ffe700" stroke-width="3.5" stroke-linecap="round" stroke-linejoin="round"/>
<polyline points="599.3,589.5 598.4,589.8" fill="none" stroke="#fff700" stroke-width="3.5" stroke-linecap="round" stroke-linejoin="round"/>
<polyline points="598.4,589.8 597.6,590.1" fill="none" stroke="#ebff00" stroke-width="3.5" stroke-linecap="round" stroke-linejoin="round"/>
<polyline points="597.6,590.1 596.8,590.5" fill="none" stroke="#c7ff00" stroke-width="3.5" stroke-linecap="round" stroke-linejoin="round"/>
<polyline points="596.8,590.5 596.0,590.8" fill="none" stroke="#a3ff00" stroke-width="3.5" stroke-linecap="round" stroke-linejoin="round"/>
<polyline points="596.0,590.8 595.2,591.1" fill="none" stroke="#7fff00" stroke-width="3.5" stroke-linecap="round" stroke-linejoin="round"/>
<polyline points="595.2,591.1 594.4,591.5" fill="none" stroke="#5bff00" stroke-width="3.5" stroke-linecap="round" stroke-linejoin="round"/>
<polyline points="594.4,591.5 593.7,591.8" fill="none" stroke="#36ff00" stroke-width="3.5" stroke-linecap="round" stroke-linejoin="round"/>
<polyline points="593.7,591.8 593.0,592.1" fill="none" stroke="#12ff00" stroke-width="3.5" stroke-linecap="round" stroke-linejoin="round"/>
<polyline points="593.0,592.1 592.3,592.5" fill="none" stroke="#00ff08" stroke-width="3.5" stroke-linecap="round" stroke-linejoin="round"/>
<polyline points="592.3,592.5 591.7,592.8" fill="none" stroke="#00ff19" stroke-width="3.5" stroke-linecap="round" stroke-linejoin="round"/>
<polyline points="591.7,592.8 591.0,593.1" fill="none" stroke="#00ff2a" stroke-width="3.5" stroke-linecap="round" stroke-linejoin="round"/>
<polyline points="591.0,593.1 590.4,593.5" fill="none" stroke="#00ff4b" stroke-width="3.5" stroke-linecap="round" stroke-linejoin="round"/>
<polyline points="590.4,593.5 589.8,593.8" fill="none" stroke="#00ff5c" stroke-width="3.5" stroke-linecap="round" stroke-linejoin="round"/>
<polyline points="589.8,593.8 589.3,594.1" fill="none" stroke="#00ff6c" stroke-width="3.5" stroke-linecap="round" stroke-linejoin="round"/>
<polyline points="589.3,594.1 588.7,594.5" fill="none" stroke="#00ff7d" stroke-width="3.5" stroke-linecap="round" stroke-linejoin="round"/>
<polyline points="588.7,594.5 588.2,594.8" fill="none" stroke="#00ff8d" stroke-width="3.5" stroke-linecap="round" stroke-linejoin="round"/>
<polyline points="588.2,594.8 587.7,595.1" fill="none" stroke="#00ff9c" stroke-width="3.5" stroke-linecap="round" stroke-linejoin="round"/>
<polyline points="587.7,595.1 587.3,595.5" fill="none" stroke="#00ffab" stroke-width="3.5" stroke-linecap="round" stroke-linejoin="round"/>
<polyline points="587.3,595.5 586.9,595.8" fill="none" stroke="#00ffba" stroke-width="3.5" stroke-linecap="round" stroke-linejoin="round"/>
<polyline points="586.9,595.8 586.5,596.1 586.1,596.5" fill="none" stroke="#00ffca" stroke-width="3.5" stroke-linecap="round" stroke-linejoin="round"/>
<polyline points="586.1,596.5 585.7,596.8" fill="none" stroke="#00ffd9" stroke-width="3.5" stroke-linecap="round" stroke-linejoin="round"/>
<polyline points="585.7,596.8 585.4,597.1" fill="none" stroke="#00ffe8" stroke-width="3.5" stroke-linecap="round" stroke-linejoin="round"/>
<polyline points="585.4,597.1 585.1,597.5" fill="none" stroke="#00fff7" stroke-width="3.5" stroke-linecap="round" stroke-linejoin="round"/>
<polyline points="585.1,597.5 584.9,597.8 584.6,598.1" fill="none" stroke="#00f1ff" stroke-width="3.5" stroke-linecap="round" stroke-linejoin="round"/>
<polyline points="584.6,598.1 584.4,598.5" fill="none" stroke="#00d4ff" stroke-width="3.5" stroke-linecap="round" stroke-linejoin="round"/>
<polyline points="584.4,598.5 584.2,598.8 584.1,599.1" fill="none" stroke="#00b8ff" stroke-width="3.5" stroke-linecap="round" stroke-linejoin="round"/>
<polyline points="584.1,599.1 583.9,599.5 583.8,599.8" fill="none" stroke="#009cff" stroke-width="3.5" stroke-linecap="round" stroke-linejoin="round"/>
<polyline points="677.5,258.9 677.7,259.2 677.9,259.6 678.1,259.9" fill="none" stroke="#000dff" stroke-width="3.5" stroke-linecap="round" stroke-linejoin="round"/>
<polyline points="678.1,259.9 678.4,260.2 678.8,260.6" fill="none" stroke="#002aff" stroke-width="3.5" stroke-linecap="round" stroke-linejoin="round"/>
<polyline points="678.8,260.6 679.1,260.9 679.6,261.2" fill="none" stroke="#0046ff" stroke-width="3.5" stroke-linecap="round" stroke-linejoin="round"/>
<polyline points="679.6,261.2 680.0,261.6" fill="none" stroke="#0063ff" stroke-width="3.5" stroke-linecap="round" stroke-linejoin="round"/>
<polyline points="680.0,261.6 680.5,261.9 681.1,262.2" fill="none" stroke="#007fff" stroke-width="3.5" stroke-linecap="round" stroke-linejoin="round"/>
<polyline points="681.1,262.2 681.7,262.6" fill="none" stroke="#009cff" stroke-width="3.5" stroke-linecap="round" stroke-linejoin="round"/>
<polyline points="681.7,262.6 682.3,262.9 682.9,263.2" fill="none" stroke="#00b8ff" stroke-width="3.5" stroke-linecap="round" stroke-linejoin="round"/>
<polyline points="682.9,263.2 683.6,263.6" fill="none" stroke="#00d4ff" stroke-width="3.5" stroke-linecap="round" stroke-linejoin="round"/>
<polyline points="683.6,263.6 684.4,263.9 685.1,264.2" fill="none" stroke="#00f1ff" stroke-width="3.5" stroke-linecap="round" stroke-linejoin="round"/>
<polyline points="685.1,264.2 685.9,264.6 686.7,264.9" fill="none" stroke="#00fff7" stroke-width="3.5" stroke-linecap="round" stroke-linejoin="round"/>
<polyline points="686.7,264.9 687.6,265.2" fill="none" stroke="#00ffe8" stroke-width="3.5" stroke-linecap="round" stroke-linejoin="round"/>
<polyline points="687.6,265.2 688.5,265.6 689.4,265.9" fill="none" stroke="#00ffd9" stroke-width="3.5" stroke-linecap="round" stroke-linejoin="round"/>
<polyline points="689.4,265.9 690.3,266.2 691.3,266.6" fill="none" stroke="#00ffca" stroke-width="3.5" stroke-linecap="round" stroke-linejoin="round"/>
<polyline points="691.3,266.6 692.3,266.9 693.3,267.2" fill="none" stroke="#00ffba" stroke-width="3.5" stroke-linecap="round" stroke-linejoin="round"/>
<polyline points="693.3,267.2 694.3,267.6 695.4,267.9" fill="none" stroke="#00ffab" stroke-width="3.5" stroke-linecap="round" stroke-linejoin="round"/>
<polyline points="695.4,267.9 696.4,268.2 697.5,268.6 698.6,268.9 699.7,269.2" fill="none" stroke="#00ff9c" stroke-width="3.5" stroke-linecap="round" stroke-linejoin="round"/>
<polyline points="699.7,269.2 700.8,269.6 702.0,269.9 703.1,270.2 704.2,270.6 705.4,270.9 706.5,271.2 707.7,271.6 708.8,271.9 709.9,272.2 711.1,272.6 712.2,272.9 713.3,273.2" fill="none" stroke="#00ff8d" stroke-width="3.5" stroke-linecap="round" stroke-linejoin="round"/>
<polyline points="713.3,273.2 714.4,273.6 715.5,273.9 716.6,274.2" fill="none" stroke="#00ff9c" stroke-width="3.5" stroke-linecap="round" stroke-linejoin="round"/>
<polyline points="716.6,274.2 717.6,274.6 718.7,274.9 719.7,275.2" fill="none" stroke="#00ffab" stroke-width="3.5" stroke-linecap="round" stroke-linejoin="round"/>
<polyline points="719.7,275.2 720.7,275.6 721.7,275.9" fill="none" stroke="#00ffba" stroke-width="3.5" stroke-linecap="round" stroke-linejoin="round"/>
<polyline points="721.7,275.9 722.7,276.2 723.6,276.6" fill="none" stroke="#00ffca" stroke-width="3.5" stroke-linecap="round" stroke-linejoin="round"/>
<polyline points="723.6,276.6 724.5,276.9 725.4,277.2" fill="none" stroke="#00ffd9" stroke-width="3.5" stroke-linecap="round" stroke-linejoin="round"/>
<polyline points="725.4,277.2 726.2,277.6" fill="none" stroke="#00ffe8" stroke-width="3.5" stroke-linecap="round" stroke-linejoin="round"/>
<polyline points="726.2,277.6 727.0,277.9 727.8,278.2" fill="none" stroke="#00fff7" stroke-width="3.5" stroke-linecap="round" stroke-linejoin="round"/>
<polyline points="727.8,278.2 728.6,278.6" fill="none" stroke="#00f1ff" stroke-width="3.5" stroke-linecap="round" stroke-linejoin="round"/>
<polyline points="728.6,278.6 729.3,278.9 730.0,279.2" fill="none" stroke="#00d4ff" stroke-width="3.5" stroke-linecap="round" stroke-linejoin="round"/>
<polyline points="730.0,279.2 730.6,279.6" fill="none" stroke="#00b8ff" stroke-width="3.5" stroke-linecap="round" stroke-linejoin="round"/>
<polyline points="730.6,279.6 731.2,279.9 731.8,280.2" fill="none" stroke="#009cff" stroke-width="3.5" stroke-linecap="round" stroke-linejoin="round"/>
<polyline points="731.8,280.2 732.3,280.6" fill="none" stroke="#007fff" stroke-width="3.5" stroke-linecap="round" stroke-linejoin="round"/>
<polyline points="732.3,280.6 732.8,280.9 733.3,281.2" fill="none" stroke="#0063ff" stroke-width="3.5" stroke-linecap="round" stroke-linejoin="round"/>
<polyline points="733.3,281.2 733.7,281.6 734.1,281.9" fill="none" stroke="#0046ff" stroke-width="3.5" stroke-linecap="round" stroke-linejoin="round"/>
<polyline points="734.1,281.9 734.4,282.2 734.7,282.6" fill="none" stroke="#002aff" stroke-width="3.5" stroke-linecap="round" stroke-linejoin="round"/>
<polyline points="734.7,282.6 735.0,282.9 735.2,283.2 735.3,283.6" fill="none" stroke="#000dff" stroke-width="3.5" stroke-linecap="round" stroke-linejoin="round"/>
<polyline points="735.3,283.6 735.5,283.9 735.6,284.2 735.6,284.6 735.6,284.9 735.5,285.2 735.4,285.6 735.3,285.9" fill="none" stroke="#0500f2" stroke-width="3.5" stroke-linecap="round" stroke-linejoin="round"/>
<polyline points="735.3,285.9 735.1,286.2 734.9,286.6 734.6,286.9" fill="none" stroke="#000dff" stroke-width="3.5" stroke-linecap="round" stroke-linejoin="round"/>
<polyline points="734.6,286.9 734.3,287.2 734.0,287.6" fill="none" stroke="#002aff" stroke-width="3.5" stroke-linecap="round" stroke-linejoin="round"/>
<polyline points="734.0,287.6 733.6,287.9 733.2,288.2" fill="none" stroke="#0046ff" stroke-width="3.5" stroke-linecap="round" stroke-linejoin="round"/>
<polyline points="733.2,288.2 732.7,288.6 732.2,288.9" fill="none" stroke="#0063ff" stroke-width="3.5" stroke-linecap="round" stroke-linejoin="round"/>
<polyline points="732.2,288.9 731.7,289.2 731.1,289.6" fill="none" stroke="#007fff" stroke-width="3.5" stroke-linecap="round" stroke-linejoin="round"/>
<polyline points="731.1,289.6 730.6,289.9" fill="none" stroke="#009cff" stroke-width="3.5" stroke-linecap="round" stroke-linejoin="round"/>
<polyline points="730.6,289.9 729.9,290.2 729.3,290.6" fill="none" stroke="#00b8ff" stroke-width="3.5" stroke-linecap="round" stroke-linejoin="round"/>
<polyline points="729.3,290.6 728.6,290.9 727.9,291.2" fill="none" stroke="#00d4ff" stroke-width="3.5" stroke-linecap="round" stroke-linejoin="round"/>
<polyline points="727.9,291.2 727.2,291.6 726.4,291.9 725.7,292.2" fill="none" stroke="#00f1ff" stroke-width="3.5" stroke-linecap="round" stroke-linejoin="round"/>
<polyline points="725.7,292.2 724.9,292.6 724.1,292.9 723.3,293.2" fill="none" stroke="#00fff7" stroke-width="3.5" stroke-linecap="round" stroke-linejoin="round"/>
<polyline points="723.3,293.2 722.4,293.6 721.6,293.9 720.7,294.2 719.9,294.6 719.0,294.9 718.1,295.2 717.2,295.6 716.4,295.9 715.5,296.2 714.6,296.6 713.8,296.9 712.9,297.2 712.1,297.6 711.2,297.9" fill="none" stroke="#00ffe8" stroke-width="3.5" stroke-linecap="round" stroke-linejoin="round"/>
<polyline points="711.2,297.9 710.4,298.2 709.6,298.6 708.8,298.9" fill="none" stroke="#00fff7" stroke-width="3.5" stroke-linecap="round" stroke-linejoin="round"/>
<polyline points="708.8,298.9 708.1,299.2 707.3,299.6 706.6,299.9" fill="none" stroke="#00f1ff" stroke-width="3.5" stroke-linecap="round" stroke-linejoin="round"/>
<polyline points="706.6,299.9 705.9,300.2 705.2,300.6" fill="none" stroke="#00d4ff" stroke-width="3.5" stroke-linecap="round" stroke-linejoin="round"/>
<polyline points="705.2,300.6 704.5,300.9 703.9,301.2" fill="none" stroke="#00b8ff" stroke-width="3.5" stroke-linecap="round" stroke-linejoin="round"/>
<polyline points="703.9,301.2 703.3,301.6 702.8,301.9" fill="none" stroke="#009cff" stroke-width="3.5" stroke-linecap="round" stroke-linejoin="round"/>
<polyline points="702.8,301.9 702.2,302.2" fill="none" stroke="#007fff" stroke-width="3.5" stroke-linecap="round" stroke-linejoin="round"/>
<polyline points="702.2,302.2 701.7,302.6 701.3,302.9" fill="none" stroke="#0063ff" stroke-width="3.5" stroke-linecap="round" stroke-linejoin="round"/>
<polyline points="701.3,302.9 700.8,303.2 700.5,303.6" fill="none" stroke="#0046ff" stroke-width="3.5" stroke-linecap="round" stroke-linejoin="round"/>
<polyline points="700.5,303.6 700.1,303.9 699.8,304.2" fill="none" stroke="#002aff" stroke-width="3.5" stroke-linecap="round" stroke-linejoin="round"/>
<polyline points="699.8,304.2 699.5,304.6 699.3,304.9 699.1,305.2" fill="none" stroke="#000dff" stroke-width="3.5" stroke-linecap="round" stroke-linejoin="round"/>
<polyline points="699.1,305.2 698.9,305.6 698.8,305.9 698.8,306.2 698.8,306.6 698.8,306.9 698.8,307.2 698.9,307.6 699.1,307.9 699.2,308.2" fill="none" stroke="#0500f2" stroke-width="3.5" stroke-linecap="round" stroke-linejoin="round"/>
<polyline points="699.2,308.2 699.4,308.6 699.6,308.9 699.8,309.2 700.1,309.6" fill="none" stroke="#000dff" stroke-width="3.5" stroke-linecap="round" stroke-linejoin="round"/>
<polyline points="700.1,309.6 700.4,309.9 700.7,310.2 701.0,310.6" fill="none" stroke="#002aff" stroke-width="3.5" stroke-linecap="round" stroke-linejoin="round"/>
<polyline points="701.0,310.6 701.4,310.9 701.8,311.2" fill="none" stroke="#0046ff" stroke-width="3.5" stroke-linecap="round" stroke-linejoin="round"/>
<polyline points="701.8,311.2 702.3,311.6 702.7,311.9 703.2,312.2" fill="none" stroke="#0063ff" stroke-width="3.5" stroke-linecap="round" stroke-linejoin="round"/>
<polyline points="703.2,312.2 703.7,312.6 704.3,312.9" fill="none" stroke="#007fff" stroke-width="3.5" stroke-linecap="round" stroke-linejoin="round"/>
<polyline points="704.3,312.9 704.9,313.2 705.5,313.6" fill="none" stroke="#009cff" stroke-width="3.5" stroke-linecap="round" stroke-linejoin="round"/>
<polyline points="705.5,313.6 706.1,313.9 706.8,314.2" fill="none" stroke="#00b8ff" stroke-width="3.5" stroke-linecap="round" stroke-linejoin="round"/>
<polyline points="706.8,314.2 707.5,314.6 708.2,314.9" fill="none" stroke="#00d4ff" stroke-width="3.5" stroke-linecap="round" stroke-linejoin="round"/>
<polyline points="708.2,314.9 708.9,315.2 709.6,315.6 710.4,315.9" fill="none" stroke="#00f1ff" stroke-width="3.5" stroke-linecap="round" stroke-linejoin="round"/>
<polyline points="710.4,315.9 711.2,316.2 712.0,316.6" fill="none" stroke="#00fff7" stroke-width="3.5" stroke-linecap="round" stroke-linejoin="round"/>
<polyline points="712.0,316.6 712.8,316.9 713.7,317.2 714.5,317.6" fill="none" stroke="#00ffe8" stroke-width="3.5" stroke-linecap="round" stroke-linejoin="round"/>
<polyline points="714.5,317.6 715.4,317.9 716.3,318.2 717.2,318.6 718.1,318.9" fill="none" stroke="#00ffd9" stroke-width="3.5" stroke-linecap="round" stroke-linejoin="round"/>
<polyline points="718.1,318.9 719.0,319.2 720.0,319.6 720.9,319.9 721.9,320.2 722.9,320.6 723.8,320.9" fill="none" stroke="#00ffca" stroke-width="3.5" stroke-linecap="round" stroke-linejoin="round"/>
<polyline points="723.8,320.9 724.8,321.2 725.8,321.6 726.8,321.9 727.7,322.2 728.7,322.6 729.7,322.9 730.7,323.2 731.7,323.6" fill="none" stroke="#00ffba" stroke-width="3.5" stroke-linecap="round" stroke-linejoin="round"/>
<polyline points="731.7,323.6 732.6,323.9 733.6,324.2 734.5,324.6 735.5,324.9 736.4,325.2 737.4,325.6" fill="none" stroke="#00ffca" stroke-width="3.5" stroke-linecap="round" stroke-linejoin="round"/>
<polyline points="737.4,325.6 738.3,325.9 739.2,326.2 740.1,326.6 741.0,326.9" fill="none" stroke="#00ffd9" stroke-width="3.5" stroke-linecap="round" stroke-linejoin="round"/>
<polyline points="741.0,326.9 741.8,327.2 742.7,327.6 743.5,327.9" fill="none" stroke="#00ffe8" stroke-width="3.5" stroke-linecap="round" stroke-linejoin="round"/>
<polyline points="743.5,327.9 744.3,328.2 745.1,328.6" fill="none" stroke="#00fff7" stroke-width="3.5" stroke-linecap="round" stroke-linejoin="round"/>
<polyline points="745.1,328.6 745.8,328.9 746.6,329.2" fill="none" stroke="#00f1ff" stroke-width="3.5" stroke-linecap="round" stroke-linejoin="round"/>
<polyline points="746.6,329.2 747.3,329.6 748.0,329.9 748.7,330.2" fill="none" stroke="#00d4ff" stroke-width="3.5" stroke-linecap="round" stroke-linejoin="round"/>
<polyline points="748.7,330.2 749.3,330.6 750.0,330.9" fill="none" stroke="#00b8ff" stroke-width="3.5" stroke-linecap="round" stroke-linejoin="round"/>
<polyline points="750.0,330.9 750.6,331.2 751.1,331.6" fill="none" stroke="#009cff" stroke-width="3.5" stroke-linecap="round" stroke-linejoin="round"/>
<polyline points="751.1,331.6 751.7,331.9 752.2,332.2" fill="none" stroke="#007fff" stroke-width="3.5" stroke-linecap="round" stroke-linejoin="round"/>
<polyline points="752.2,332.2 752.7,332.6 753.1,332.9" fill="none" stroke="#0063ff" stroke-width="3.5" stroke-linecap="round" stroke-linejoin="round"/>
<polyline points="753.1,332.9 753.6,333.2 754.0,333.6 754.3,333.9" fill="none" stroke="#0046ff" stroke-width="3.5" stroke-linecap="round" stroke-linejoin="round"/>
<polyline points="754.3,333.9 754.7,334.2 755.0,334.6" fill="none" stroke="#002aff" stroke-width="3.5" stroke-linecap="round" stroke-linejoin="round"/>
<polyline points="755.0,334.6 755.2,334.9 755.5,335.2 755.7,335.6 755.9,335.9" fill="none" stroke="#000dff" stroke-width="3.5" stroke-linecap="round" stroke-linejoin="round"/>
<polyline points="755.9,335.9 756.0,336.2 756.2,336.6 756.3,336.9 756.4,337.2 756.4,337.6 756.3,337.9 756.3,338.2 756.2,338.6 756.0,338.9" fill="none" stroke="#0500f2" stroke-width="3.5" stroke-linecap="round" stroke-linejoin="round"/>
<polyline points="756.0,338.9 755.8,339.2 755.5,339.6" fill="none" stroke="#000dff" stroke-width="3.5" stroke-linecap="round" stroke-linejoin="round"/>
<polyline points="755.5,339.6 755.2,339.9 754.9,340.2" fill="none" stroke="#002aff" stroke-width="3.5" stroke-linecap="round" stroke-linejoin="round"/>
<polyline points="754.9,340.2 754.5,340.6 754.1,340.9" fill="none" stroke="#0046ff" stroke-width="3.5" stroke-linecap="round" stroke-linejoin="round"/>
<polyline points="754.1,340.9 753.6,341.2" fill="none" stroke="#0063ff" stroke-width="3.5" stroke-linecap="round" stroke-linejoin="round"/>
<polyline points="753.6,341.2 753.1,341.6 752.6,341.9" fill="none" stroke="#007fff" stroke-width="3.5" stroke-linecap="round" stroke-linejoin="round"/>
<polyline points="752.6,341.9 752.0,342.2 751.4,342.6" fill="none" stroke="#009cff" stroke-width="3.5" stroke-linecap="round" stroke-linejoin="round"/>
<polyline points="751.4,342.6 750.8,342.9" fill="none" stroke="#00b8ff" stroke-width="3.5" stroke-linecap="round" stroke-linejoin="round"/>
<polyline points="750.8,342.9 750.1,343.2 749.4,343.6" fill="none" stroke="#00d4ff" stroke-width="3.5" stroke-linecap="round" stroke-linejoin="round"/>
<polyline points="749.4,343.6 748.6,343.9 747.9,344.2" fill="none" stroke="#00f1ff" stroke-width="3.5" stroke-linecap="round" stroke-linejoin="round"/>
<polyline points="747.9,344.2 747.1,344.6 746.2,344.9" fill="none" stroke="#00fff7" stroke-width="3.5" stroke-linecap="round" stroke-linejoin="round"/>
<polyline points="746.2,344.9 745.4,345.2 744.5,345.6" fill="none" stroke="#00ffe8" stroke-width="3.5" stroke-linecap="round" stroke-linejoin="round"/>
<polyline points="744.5,345.6 743.6,345.9 742.7,346.2 741.8,346.6" fill="none" stroke="#00ffd9" stroke-width="3.5" stroke-linecap="round" stroke-linejoin="round"/>
<polyline points="741.8,346.6 740.9,346.9 739.9,347.2 739.0,347.6 738.0,347.9 737.1,348.2" fill="none" stroke="#00ffca" stroke-width="3.5" stroke-linecap="round" stroke-linejoin="round"/>
<polyline points="737.1,348.2 736.1,348.6 735.1,348.9 734.1,349.2" fill="none" stroke="#00ffba" stroke-width="3.5" stroke-linecap="round" stroke-linejoin="round"/>
<polyline points="734.1,349.2 733.2,349.6 732.2,349.9 731.2,350.2 730.3,350.6 729.4,350.9 728.4,351.2" fill="none" stroke="#00ffca" stroke-width="3.5" stroke-linecap="round" stroke-linejoin="round"/>
<polyline points="728.4,351.2 727.5,351.6 726.6,351.9" fill="none" stroke="#00ffd9" stroke-width="3.5" stroke-linecap="round" stroke-linejoin="round"/>
<polyline points="726.6,351.9 725.8,352.2 724.9,352.6 724.1,352.9" fill="none" stroke="#00ffe8" stroke-width="3.5" stroke-linecap="round" stroke-linejoin="round"/>
<polyline points="724.1,352.9 723.3,353.2" fill="none" stroke="#00fff7" stroke-width="3.5" stroke-linecap="round" stroke-linejoin="round"/>
<polyline points="723.3,353.2 722.5,353.6 721.8,353.9" fill="none" stroke="#00f1ff" stroke-width="3.5" stroke-linecap="round" stroke-linejoin="round"/>
<polyline points="721.8,353.9 721.0,354.2 720.4,354.6" fill="none" stroke="#00d4ff" stroke-width="3.5" stroke-linecap="round" stroke-linejoin="round"/>
<polyline points="720.4,354.6 719.7,354.9" fill="none" stroke="#00b8ff" stroke-width="3.5" stroke-linecap="round" stroke-linejoin="round"/>
<polyline points="719.7,354.9 719.1,355.2 718.5,355.6" fill="none" stroke="#009cff" stroke-width="3.5" stroke-linecap="round" stroke-linejoin="round"/>
<polyline points="718.5,355.6 718.0,355.9" fill="none" stroke="#007fff" stroke-width="3.5" stroke-linecap="round" stroke-linejoin="round"/>
<polyline points="718.0,355.9 717.5,356.2 717.0,356.6" fill="none" stroke="#0063ff" stroke-width="3.5" stroke-linecap="round" stroke-linejoin="round"/>
<polyline points="717.0,356.6 716.6,356.9 716.3,357.2" fill="none" stroke="#0046ff" stroke-width="3.5" stroke-linecap="round" stroke-linejoin="round"/>
<polyline points="716.3,357.2 715.9,357.6" fill="none" stroke="#002aff" stroke-width="3.5" stroke-linecap="round" stroke-linejoin="round"/>
<polyline points="715.9,357.6 715.7,357.9 715.4,358.2 715.2,358.6" fill="none" stroke="#000dff" stroke-width="3.5" stroke-linecap="round" stroke-linejoin="round"/>
<polyline points="715.2,358.6 715.1,358.9 715.0,359.2 715.0,359.6 715.0,359.9 715.1,360.2 715.2,360.6 715.3,360.9 715.4,361.2" fill="none" stroke="#0500f2" stroke-width="3.5" stroke-linecap="round" stroke-linejoin="round"/>
<polyline points="715.4,361.2 715.6,361.6 715.8,361.9 716.1,362.2" fill="none" stroke="#000dff" stroke-width="3.5" stroke-linecap="round" stroke-linejoin="round"/>
<polyline points="716.1,362.2 716.4,362.6 716.8,362.9" fill="none" stroke="#002aff" stroke-width="3.5" stroke-linecap="round" stroke-linejoin="round"/>
<polyline points="716.8,362.9 717.2,363.2 717.6,363.6" fill="none" stroke="#0046ff" stroke-width="3.5" stroke-linecap="round" stroke-linejoin="round"/>
<polyline points="717.6,363.6 718.1,363.9" fill="none" stroke="#0063ff" stroke-width="3.5" stroke-linecap="round" stroke-linejoin="round"/>
<polyline points="718.1,363.9 718.6,364.2 719.1,364.6" fill="none" stroke="#007fff" stroke-width="3.5" stroke-linecap="round" stroke-linejoin="round"/>
<polyline points="719.1,364.6 719.7,364.9" fill="none" stroke="#009cff" stroke-width="3.5" stroke-linecap="round" stroke-linejoin="round"/>
<polyline points="719.7,364.9 720.3,365.2 721.0,365.6" fill="none" stroke="#00b8ff" stroke-width="3.5" stroke-linecap="round" stroke-linejoin="round"/>
<polyline points="721.0,365.6 721.7,365.9" fill="none" stroke="#00d4ff" stroke-width="3.5" stroke-linecap="round" stroke-linejoin="round"/>
<polyline points="721.7,365.9 722.4,366.2 723.2,366.6" fill="none" stroke="#00f1ff" stroke-width="3.5" stroke-linecap="round" stroke-linejoin="round"/>
<polyline points="723.2,366.6 724.0,366.9" fill="none" stroke="#00fff7" stroke-width="3.5" stroke-linecap="round" stroke-linejoin="round"/>
<polyline points="724.0,366.9 724.8,367.2 725.7,367.6" fill="none" stroke="#00ffe8" stroke-width="3.5" stroke-linecap="round" stroke-linejoin="round"/>
<polyline points="725.7,367.6 726.6,367.9" fill="none" stroke="#00ffd9" stroke-width="3.5" stroke-linecap="round" stroke-linejoin="round"/>
<polyline points="726.6,367.9 727.5,368.2 728.5,368.6" fill="none" stroke="#00ffca" stroke-width="3.5" stroke-linecap="round" stroke-linejoin="round"/>
<polyline points="728.5,368.6 729.5,368.9 730.5,369.2" fill="none" stroke="#00ffba" stroke-width="3.5" stroke-linecap="round" stroke-linejoin="round"/>
<polyline points="730.5,369.2 731.6,369.6" fill="none" stroke="#00ffab" stroke-width="3.5" stroke-linecap="round" stroke-linejoin="round"/>
<polyline points="731.6,369.6 732.6,369.9 733.7,370.2" fill="none" stroke="#00ff9c" stroke-width="3.5" stroke-linecap="round" stroke-linejoin="round"/>
<polyline points="733.7,370.2 734.8,370.6 736.0,370.9 737.1,371.2" fill="none" stroke="#00ff8d" stroke-width="3.5" stroke-linecap="round" stroke-linejoin="round"/>
<polyline points="737.1,371.2 738.3,371.6 739.5,371.9" fill="none" stroke="#00ff7d" stroke-width="3.5" stroke-linecap="round" stroke-linejoin="round"/>
<polyline points="739.5,371.9 740.7,372.2 741.9,372.6 743.1,372.9 744.4,373.2" fill="none" stroke="#00ff6c" stroke-width="3.5" stroke-linecap="round" stroke-linejoin="round"/>
<polyline points="744.4,373.2 745.6,373.6 746.9,373.9 748.1,374.2 749.4,374.6 750.6,374.9 751.9,375.2 753.2,375.6 754.4,375.9 755.7,376.2 756.9,376.6" fill="none" stroke="#00ff5c" stroke-width="3.5" stroke-linecap="round" stroke-linejoin="round"/>
<polyline points="756.9,376.6 758.2,376.9 759.4,377.2 760.6,377.6 761.8,377.9" fill="none" stroke="#00ff6c" stroke-width="3.5" stroke-linecap="round" stroke-linejoin="round"/>
<polyline points="761.8,377.9 763.0,378.2 764.2,378.6 765.3,378.9" fill="none" stroke="#00ff7d" stroke-width="3.5" stroke-linecap="round" stroke-linejoin="round"/>
<polyline points="765.3,378.9 766.5,379.2 767.6,379.6" fill="none" stroke="#00ff8d" stroke-width="3.5" stroke-linecap="round" stroke-linejoin="round"/>
<polyline points="767.6,379.6 768.7,379.9 769.8,380.2" fill="none" stroke="#00ff9c" stroke-width="3.5" stroke-linecap="round" stroke-linejoin="round"/>
<polyline points="769.8,380.2 770.8,380.6" fill="none" stroke="#00ffab" stroke-width="3.5" stroke-linecap="round" stroke-linejoin="round"/>
<polyline points="770.8,380.6 771.8,380.9 772.8,381.2" fill="none" stroke="#00ffba" stroke-width="3.5" stroke-linecap="round" stroke-linejoin="round"/>
<polyline points="772.8,381.2 773.7,381.6" fill="none" stroke="#00ffca" stroke-width="3.5" stroke-linecap="round" stroke-linejoin="round"/>
<polyline points="773.7,381.6 774.7,381.9 775.6,382.2" fill="none" stroke="#00ffd9" stroke-width="3.5" stroke-linecap="round" stroke-linejoin="round"/>
<polyline points="775.6,382.2 776.4,382.6" fill="none" stroke="#00ffe8" stroke-width="3.5" stroke-linecap="round" stroke-linejoin="round"/>
<polyline points="776.4,382.6 777.2,382.9 778.0,383.2" fill="none" stroke="#00fff7" stroke-width="3.5" stroke-linecap="round" stroke-linejoin="round"/>
<polyline points="778.0,383.2 778.8,383.6" fill="none" stroke="#00f1ff" stroke-width="3.5" stroke-linecap="round" stroke-linejoin="round"/>
<polyline points="778.8,383.6 779.5,383.9" fill="none" stroke="#00d4ff" stroke-width="3.5" stroke-linecap="round" stroke-linejoin="round"/>
<polyline points="779.5,383.9 780.1,384.2 780.8,384.6" fill="none" stroke="#00b8ff" stroke-width="3.5" stroke-linecap="round" stroke-linejoin="round"/>
<polyline points="780.8,384.6 781.3,384.9" fill="none" stroke="#009cff" stroke-width="3.5" stroke-linecap="round" stroke-linejoin="round"/>
<polyline points="781.3,384.9 781.9,385.2" fill="none" stroke="#007fff" stroke-width="3.5" stroke-linecap="round" stroke-linejoin="round"/>
<polyline points="781.9,385.2 782.4,385.6 782.8,385.9" fill="none" stroke="#0063ff" stroke-width="3.5" stroke-linecap="round" stroke-linejoin="round"/>
<polyline points="782.8,385.9 783.3,386.2 783.6,386.6" fill="none" stroke="#0046ff" stroke-width="3.5" stroke-linecap="round" stroke-linejoin="round"/>
<polyline points="783.6,386.6 783.9,386.9" fill="none" stroke="#002aff" stroke-width="3.5" stroke-linecap="round" stroke-linejoin="round"/>
<polyline points="783.9,386.9 784.2,387.2 784.4,387.6 784.6,387.9" fill="none" stroke="#000dff" stroke-width="3.5" stroke-linecap="round" stroke-linejoin="round"/>
<polyline points="784.6,387.9 784.8,388.2 784.9,388.6 784.9,388.9 784.9,389.2 784.8,389.6 784.7,389.9" fill="none" stroke="#0500f2" stroke-width="3.5" stroke-linecap="round" stroke-linejoin="round"/>
<polyline points="784.7,389.9 784.5,390.2 784.3,390.6" fill="none" stroke="#000dff" stroke-width="3.5" stroke-linecap="round" stroke-linejoin="round"/>
<polyline points="784.3,390.6 784.0,390.9 783.6,391.2" fill="none" stroke="#002aff" stroke-width="3.5" stroke-linecap="round" stroke-linejoin="round"/>
<polyline points="783.6,391.2 783.2,391.6" fill="none" stroke="#0046ff" stroke-width="3.5" stroke-linecap="round" stroke-linejoin="round"/>
<polyline points="783.2,391.6 782.7,391.9" fill="none" stroke="#0063ff" stroke-width="3.5" stroke-linecap="round" stroke-linejoin="round"/>
<polyline points="782.7,391.9 782.2,392.2" fill="none" stroke="#007fff" stroke-width="3.5" stroke-linecap="round" stroke-linejoin="round"/>
<polyline points="782.2,392.2 781.6,392.6" fill="none" stroke="#009cff" stroke-width="3.5" stroke-linecap="round" stroke-linejoin="round"/>
<polyline points="781.6,392.6 781.0,392.9" fill="none" stroke="#00b8ff" stroke-width="3.5" stroke-linecap="round" stroke-linejoin="round"/>
<polyline points="781.0,392.9 780.3,393.2 779.6,393.6" fill="none" stroke="#00d4ff" stroke-width="3.5" stroke-linecap="round" stroke-linejoin="round"/>
<polyline points="779.6,393.6 778.8,393.9" fill="none" stroke="#00f1ff" stroke-width="3.5" stroke-linecap="round" stroke-linejoin="round"/>
<polyline points="778.8,393.9 778.0,394.2" fill="none" stroke="#00fff7" stroke-width="3.5" stroke-linecap="round" stroke-linejoin="round"/>
<polyline points="778.0,394.2 777.2,394.6" fill="none" stroke="#00ffe8" stroke-width="3.5" stroke-linecap="round" stroke-linejoin="round"/>
<polyline points="777.2,394.6 776.3,394.9" fill="none" stroke="#00ffd9" stroke-width="3.5" stroke-linecap="round" stroke-linejoin="round"/>
<polyline points="776.3,394.9 775.3,395.2" fill="none" stroke="#00ffca" stroke-width="3.5" stroke-linecap="round" stroke-linejoin="round"/>
<polyline points="775.3,395.2 774.3,395.6" fill="none" stroke="#00ffba" stroke-width="3.5" stroke-linecap="round" stroke-linejoin="round"/>
<polyline points="774.3,395.6 773.3,395.9" fill="none" stroke="#00ffab" stroke-width="3.5" stroke-linecap="round" stroke-linejoin="round"/>
<polyline points="773.3,395.9 772.2,396.2 771.1,396.6" fill="none" stroke="#00ff9c" stroke-width="3.5" stroke-linecap="round" stroke-linejoin="round"/>
<polyline points="771.1,396.6 770.0,396.9" fill="none" stroke="#00ff8d" stroke-width="3.5" stroke-linecap="round" stroke-linejoin="round"/>
<polyline points="770.0,396.9 768.8,397.2 767.6,397.6" fill="none" stroke="#00ff7d" stroke-width="3.5" stroke-linecap="round" stroke-linejoin="round"/>
<polyline points="767.6,397.6 766.4,397.9 765.2,398.2" fill="none" stroke="#00ff6c" stroke-width="3.5" stroke-linecap="round" stroke-linejoin="round"/>
<polyline points="765.2,398.2 763.9,398.6 762.6,398.9" fill="none" stroke="#00ff5c" stroke-width="3.5" stroke-linecap="round" stroke-linejoin="round"/>
<polyline points="762.6,398.9 761.3,399.2 760.0,399.6 758.7,399.9" fill="none" stroke="#00ff4b" stroke-width="3.5" stroke-linecap="round" stroke-linejoin="round"/>
<polyline points="758.7,399.9 757.4,400.2 756.0,400.6 754.7,400.9 753.3,401.2 752.0,401.6 750.6,401.9 749.3,402.2" fill="none" stroke="#00ff3a" stroke-width="3.5" stroke-linecap="round" stroke-linejoin="round"/>
<polyline points="749.3,402.2 748.0,402.6 746.7,402.9 745.3,403.2" fill="none" stroke="#00ff4b" stroke-width="3.5" stroke-linecap="round" stroke-linejoin="round"/>
<polyline points="745.3,403.2 744.1,403.6 742.8,403.9" fill="none" stroke="#00ff5c" stroke-width="3.5" stroke-linecap="round" stroke-linejoin="round"/>
<polyline points="742.8,403.9 741.6,404.2 740.3,404.6" fill="none" stroke="#00ff6c" stroke-width="3.5" stroke-linecap="round" stroke-linejoin="round"/>
<polyline points="740.3,404.6 739.1,404.9 738.0,405.2" fill="none" stroke="#00ff7d" stroke-width="3.5" stroke-linecap="round" stroke-linejoin="round"/>
<polyline points="738.0,405.2 736.8,405.6" fill="none" stroke="#00ff8d" stroke-width="3.5" stroke-linecap="round" stroke-linejoin="round"/>
<polyline points="736.8,405.6 735.7,405.9" fill="none" stroke="#00ff9c" stroke-width="3.5" stroke-linecap="round" stroke-linejoin="round"/>
<polyline points="735.7,405.9 734.7,406.2 733.7,406.6" fill="none" stroke="#00ffab" stroke-width="3.5" stroke-linecap="round" stroke-linejoin="round"/>
<polyline points="733.7,406.6 732.7,406.9" fill="none" stroke="#00ffba" stroke-width="3.5" stroke-linecap="round" stroke-linejoin="round"/>
<polyline points="732.7,406.9 731.7,407.2" fill="none" stroke="#00ffca" stroke-width="3.5" stroke-linecap="round" stroke-linejoin="round"/>
<polyline points="731.7,407.2 730.9,407.6" fill="none" stroke="#00ffd9" stroke-width="3.5" stroke-linecap="round" stroke-linejoin="round"/>
<polyline points="730.9,407.6 730.0,407.9" fill="none" stroke="#00ffe8" stroke-width="3.5" stroke-linecap="round" stroke-linejoin="round"/>
<polyline points="730.0,407.9 729.2,408.2" fill="none" stroke="#00fff7" stroke-width="3.5" stroke-linecap="round" stroke-linejoin="round"/>
<polyline points="729.2,408.2 728.5,408.6" fill="none" stroke="#00f1ff" stroke-width="3.5" stroke-linecap="round" stroke-linejoin="round"/>
<polyline points="728.5,408.6 727.8,408.9" fill="none" stroke="#00d4ff" stroke-width="3.5" stroke-linecap="round" stroke-linejoin="round"/>
<polyline points="727.8,408.9 727.1,409.2" fill="none" stroke="#00b8ff" stroke-width="3.5" stroke-linecap="round" stroke-linejoin="round"/>
<polyline points="727.1,409.2 726.6,409.6" fill="none" stroke="#009cff" stroke-width="3.5" stroke-linecap="round" stroke-linejoin="round"/>
<polyline points="726.6,409.6 726.0,409.9" fill="none" stroke="#007fff" stroke-width="3.5" stroke-linecap="round" stroke-linejoin="round"/>
<polyline points="726.0,409.9 725.6,410.2" fill="none" stroke="#0063ff" stroke-width="3.5" stroke-linecap="round" stroke-linejoin="round"/>
<polyline points="725.6,410.2 725.2,410.6" fill="none" stroke="#0046ff" stroke-width="3.5" stroke-linecap="round" stroke-linejoin="round"/>
<polyline points="725.2,410.6 724.8,410.9 724.5,411.2" fill="none" stroke="#002aff" stroke-width="3.5" stroke-linecap="round" stroke-linejoin="round"/>
<polyline points="724.5,411.2 724.3,411.6" fill="none" stroke="#000dff" stroke-width="3.5" stroke-linecap="round" stroke-linejoin="round"/>
<polyline points="724.3,411.6 724.2,411.9 724.1,412.2 724.1,412.6 724.1,412.9 724.2,413.2 724.3,413.6" fill="none" stroke="#0500f2" stroke-width="3.5" stroke-linecap="round" stroke-linejoin="round"/>
<polyline points="724.3,413.6 724.5,413.9 724.8,414.3" fill="none" stroke="#000dff" stroke-width="3.5" stroke-linecap="round" stroke-linejoin="round"/>
<polyline points="724.8,414.3 725.1,414.6" fill="none" stroke="#002aff" stroke-width="3.5" stroke-linecap="round" stroke-linejoin="round"/>
<polyline points="725.1,414.6 725.5,414.9" fill="none" stroke="#0046ff" stroke-width="3.5" stroke-linecap="round" stroke-linejoin="round"/>
<polyline points="725.5,414.9 726.0,415.3" fill="none" stroke="#0063ff" stroke-width="3.5" stroke-linecap="round" stroke-linejoin="round"/>
<polyline points="726.0,415.3 726.5,415.6" fill="none" stroke="#007fff" stroke-width="3.5" stroke-linecap="round" stroke-linejoin="round"/>
<polyline points="726.5,415.6 727.1,415.9" fill="none" stroke="#009cff" stroke-width="3.5" stroke-linecap="round" stroke-linejoin="round"/>
<polyline points="727.1,415.9 727.7,416.3" fill="none" stroke="#00b8ff" stroke-width="3.5" stroke-linecap="round" stroke-linejoin="round"/>
<polyline points="727.7,416.3 728.4,416.6" fill="none" stroke="#00d4ff" stroke-width="3.5" stroke-linecap="round" stroke-linejoin="round"/>
<polyline points="728.4,416.6 729.2,416.9" fill="none" stroke="#00f1ff" stroke-width="3.5" stroke-linecap="round" stroke-linejoin="round"/>
<polyline points="729.2,416.9 730.0,417.3" fill="none" stroke="#00fff7" stroke-width="3.5" stroke-linecap="round" stroke-linejoin="round"/>
<polyline points="730.0,417.3 730.9,417.6" fill="none" stroke="#00ffe8" stroke-width="3.5" stroke-linecap="round" stroke-linejoin="round"/>
<polyline points="730.9,417.6 731.8,417.9" fill="none" stroke="#00ffca" stroke-width="3.5" stroke-linecap="round" stroke-linejoin="round"/>
<polyline points="731.8,417.9 732.8,418.3" fill="none" stroke="#00ffba" stroke-width="3.5" stroke-linecap="round" stroke-linejoin="round"/>
<polyline points="732.8,418.3 733.8,418.6" fill="none" stroke="#00ffab" stroke-width="3.5" stroke-linecap="round" stroke-linejoin="round"/>
<polyline points="733.8,418.6 734.9,418.9" fill="none" stroke="#00ff9c" stroke-width="3.5" stroke-linecap="round" stroke-linejoin="round"/>
<polyline points="734.9,418.9 736.1,419.3" fill="none" stroke="#00ff8d" stroke-width="3.5" stroke-linecap="round" stroke-linejoin="round"/>
<polyline points="736.1,419.3 737.3,419.6" fill="none" stroke="#00ff7d" stroke-width="3.5" stroke-linecap="round" stroke-linejoin="round"/>
<polyline points="737.3,419.6 738.5,419.9" fill="none" stroke="#00ff5c" stroke-width="3.5" stroke-linecap="round" stroke-linejoin="round"/>
<polyline points="738.5,419.9 739.8,420.3" fill="none" stroke="#00ff4b" stroke-width="3.5" stroke-linecap="round" stroke-linejoin="round"/>
<polyline points="739.8,420.3 741.2,420.6" fill="none" stroke="#00ff3a" stroke-width="3.5" stroke-linecap="round" stroke-linejoin="round"/>
<polyline points="741.2,420.6 742.6,420.9" fill="none" stroke="#00ff2a" stroke-width="3.5" stroke-linecap="round" stroke-linejoin="round"/>
<polyline points="742.6,420.9 744.0,421.3" fill="none" stroke="#00ff19" stroke-width="3.5" stroke-linecap="round" stroke-linejoin="round"/>
<polyline points="744.0,421.3 745.5,421.6" fill="none" stroke="#00ff08" stroke-width="3.5" stroke-linecap="round" stroke-linejoin="round"/>
<polyline points="745.5,421.6 747.0,421.9 748.5,422.3" fill="none" stroke="#12ff00" stroke-width="3.5" stroke-linecap="round" stroke-linejoin="round"/>
<polyline points="748.5,422.3 750.1,422.6" fill="none" stroke="#36ff00" stroke-width="3.5" stroke-linecap="round" stroke-linejoin="round"/>
<polyline points="750.1,422.6 751.7,422.9" fill="none" stroke="#5bff00" stroke-width="3.5" stroke-linecap="round" stroke-linejoin="round"/>
<polyline points="751.7,422.9 753.4,423.3 755.0,423.6" fill="none" stroke="#7fff00" stroke-width="3.5" stroke-linecap="round" stroke-linejoin="round"/>
<polyline points="755.0,423.6 756.7,423.9 758.4,424.3" fill="none" stroke="#a3ff00" stroke-width="3.5" stroke-linecap="round" stroke-linejoin="round"/>
<polyline points="758.4,424.3 760.2,424.6 761.9,424.9" fill="none" stroke="#c7ff00" stroke-width="3.5" stroke-linecap="round" stroke-linejoin="round"/>
<polyline points="761.9,424.9 763.7,425.3 765.5,425.6 767.3,425.9 769.1,426.3" fill="none" stroke="#ebff00" stroke-width="3.5" stroke-linecap="round" stroke-linejoin="round"/>
<polyline points="769.1,426.3 770.9,426.6 772.7,426.9 774.6,427.3 776.4,427.6" fill="none" stroke="#fff700" stroke-width="3.5" stroke-linecap="round" stroke-linejoin="round"/>
<polyline points="776.4,427.6 778.2,427.9 780.0,428.3 781.8,428.6 783.5,428.9" fill="none" stroke="#ebff00" stroke-width="3.5" stroke-linecap="round" stroke-linejoin="round"/>
<polyline points="783.5,428.9 785.3,429.3 787.0,429.6" fill="none" stroke="#c7ff00" stroke-width="3.5" stroke-linecap="round" stroke-linejoin="round"/>
<polyline points="787.0,429.6 788.7,429.9 790.4,430.3" fill="none" stroke="#a3ff00" stroke-width="3.5" stroke-linecap="round" stroke-linejoin="round"/>
<polyline points="790.4,430.3 792.1,430.6" fill="none" stroke="#7fff00" stroke-width="3.5" stroke-linecap="round" stroke-linejoin="round"/>
<polyline points="792.1,430.6 793.7,430.9 795.3,431.3" fill="none" stroke="#5bff00" stroke-width="3.5" stroke-linecap="round" stroke-linejoin="round"/>
<polyline points="795.3,431.3 796.9,431.6" fill="none" stroke="#36ff00" stroke-width="3.5" stroke-linecap="round" stroke-linejoin="round"/>
<polyline points="796.9,431.6 798.4,431.9" fill="none" stroke="#12ff00" stroke-width="3.5" stroke-linecap="round" stroke-linejoin="round"/>
<polyline points="798.4,431.9 799.9,432.3" fill="none" stroke="#00ff08" stroke-width="3.5" stroke-linecap="round" stroke-linejoin="round"/>
<polyline points="799.9,432.3 801.3,432.6" fill="none" stroke="#00ff19" stroke-width="3.5" stroke-linecap="round" stroke-linejoin="round"/>
<polyline points="801.3,432.6 802.7,432.9" fill="none" stroke="#00ff2a" stroke-width="3.5" stroke-linecap="round" stroke-linejoin="round"/>
<polyline points="802.7,432.9 804.1,433.3" fill="none" stroke="#00ff3a" stroke-width="3.5" stroke-linecap="round" stroke-linejoin="round"/>
<polyline points="804.1,433.3 805.4,433.6" fill="none" stroke="#00ff4b" stroke-width="3.5" stroke-linecap="round" stroke-linejoin="round"/>
<polyline points="805.4,433.6 806.7,433.9" fill="none" stroke="#00ff5c" stroke-width="3.5" stroke-linecap="round" stroke-linejoin="round"/>
<polyline points="806.7,433.9 807.9,434.3" fill="none" stroke="#00ff6c" stroke-width="3.5" stroke-linecap="round" stroke-linejoin="round"/>
<polyline points="807.9,434.3 809.0,434.6" fill="none" stroke="#00ff8d" stroke-width="3.5" stroke-linecap="round" stroke-linejoin="round"/>
<polyline points="809.0,434.6 810.1,434.9" fill="none" stroke="#00ff9c" stroke-width="3.5" stroke-linecap="round" stroke-linejoin="round"/>
<polyline points="810.1,434.9 811.1,435.3" fill="none" stroke="#00ffab" stroke-width="3.5" stroke-linecap="round" stroke-linejoin="round"/>
<polyline points="811.1,435.3 812.1,435.6" fill="none" stroke="#00ffca" stroke-width="3.5" stroke-linecap="round" stroke-linejoin="round"/>
<polyline points="812.1,435.6 813.0,435.9" fill="none" stroke="#00ffd9" stroke-width="3.5" stroke-linecap="round" stroke-linejoin="round"/>
<polyline points="813.0,435.9 813.8,436.3" fill="none" stroke="#00ffe8" stroke-width="3.5" stroke-linecap="round" stroke-linejoin="round"/>
<polyline points="813.8,436.3 814.6,436.6" fill="none" stroke="#00fff7" stroke-width="3.5" stroke-linecap="round" stroke-linejoin="round"/>
<polyline points="814.6,436.6 815.3,436.9" fill="none" stroke="#00d4ff" stroke-width="3.5" stroke-linecap="round" stroke-linejoin="round"/>
<polyline points="815.3,436.9 816.0,437.3" fill="none" stroke="#00b8ff" stroke-width="3.5" stroke-linecap="round" stroke-linejoin="round"/>
<polyline points="816.0,437.3 816.6,437.6" fill="none" stroke="#009cff" stroke-width="3.5" stroke-linecap="round" stroke-linejoin="round"/>
<polyline points="816.6,437.6 817.1,437.9" fill="none" stroke="#007fff" stroke-width="3.5" stroke-linecap="round" stroke-linejoin="round"/>
<polyline points="817.1,437.9 817.5,438.3" fill="none" stroke="#0063ff" stroke-width="3.5" stroke-linecap="round" stroke-linejoin="round"/>
<polyline points="817.5,438.3 817.9,438.6" fill="none" stroke="#0046ff" stroke-width="3.5" stroke-linecap="round" stroke-linejoin="round"/>
<polyline points="817.9,438.6 818.2,438.9" fill="none" stroke="#002aff" stroke-width="3.5" stroke-linecap="round" stroke-linejoin="round"/>
<polyline points="818.2,438.9 818.4,439.3" fill="none" stroke="#000dff" stroke-width="3.5" stroke-linecap="round" stroke-linejoin="round"/>
<polyline points="818.4,439.3 818.5,439.6 818.6,439.9 818.6,440.3 818.6,440.6 818.4,440.9" fill="none" stroke="#0500f2" stroke-width="3.5" stroke-linecap="round" stroke-linejoin="round"/>
<polyline points="818.4,440.9 818.2,441.3" fill="none" stroke="#000dff" stroke-width="3.5" stroke-linecap="round" stroke-linejoin="round"/>
<polyline points="818.2,441.3 817.9,441.6 817.6,441.9" fill="none" stroke="#002aff" stroke-width="3.5" stroke-linecap="round" stroke-linejoin="round"/>
<polyline points="817.6,441.9 817.2,442.3" fill="none" stroke="#0046ff" stroke-width="3.5" stroke-linecap="round" stroke-linejoin="round"/>
<polyline points="817.2,442.3 816.7,442.6" fill="none" stroke="#0063ff" stroke-width="3.5" stroke-linecap="round" stroke-linejoin="round"/>
<polyline points="816.7,442.6 816.1,442.9" fill="none" stroke="#007fff" stroke-width="3.5" stroke-linecap="round" stroke-linejoin="round"/>
<polyline points="816.1,442.9 815.5,443.3" fill="none" stroke="#00b8ff" stroke-width="3.5" stroke-linecap="round" stroke-linejoin="round"/>
<polyline points="815.5,443.3 814.8,443.6" fill="none" stroke="#00d4ff" stroke-width="3.5" stroke-linecap="round" stroke-linejoin="round"/>
<polyline points="814.8,443.6 814.0,443.9" fill="none" stroke="#00f1ff" stroke-width="3.5" stroke-linecap="round" stroke-linejoin="round"/>
<polyline points="814.0,443.9 813.2,444.3" fill="none" stroke="#00fff7" stroke-width="3.5" stroke-linecap="round" stroke-linejoin="round"/>
<polyline points="813.2,444.3 812.3,444.6" fill="none" stroke="#00ffd9" stroke-width="3.5" stroke-linecap="round" stroke-linejoin="round"/>
<polyline points="812.3,444.6 811.4,444.9" fill="none" stroke="#00ffca" stroke-width="3.5" stroke-linecap="round" stroke-linejoin="round"/>
<polyline points="811.4,444.9 810.3,445.3" fill="none" stroke="#00ffba" stroke-width="3.5" stroke-linecap="round" stroke-linejoin="round"/>
<polyline points="810.3,445.3 809.3,445.6" fill="none" stroke="#00ff9c" stroke-width="3.5" stroke-linecap="round" stroke-linejoin="round"/>
<polyline points="809.3,445.6 808.1,445.9" fill="none" stroke="#00ff8d" stroke-width="3.5" stroke-linecap="round" stroke-linejoin="round"/>
<polyline points="808.1,445.9 807.0,446.3" fill="none" stroke="#00ff7d" stroke-width="3.5" stroke-linecap="round" stroke-linejoin="round"/>
<polyline points="807.0,446.3 805.7,446.6" fill="none" stroke="#00ff6c" stroke-width="3.5" stroke-linecap="round" stroke-linejoin="round"/>
<polyline points="805.7,446.6 804.4,446.9" fill="none" stroke="#00ff4b" stroke-width="3.5" stroke-linecap="round" stroke-linejoin="round"/>
<polyline points="804.4,446.9 803.1,447.3" fill="none" stroke="#00ff3a" stroke-width="3.5" stroke-linecap="round" stroke-linejoin="round"/>
<polyline points="803.1,447.3 801.7,447.6" fill="none" stroke="#00ff2a" stroke-width="3.5" stroke-linecap="round" stroke-linejoin="round"/>
<polyline points="801.7,447.6 800.2,447.9" fill="none" stroke="#00ff19" stroke-width="3.5" stroke-linecap="round" stroke-linejoin="round"/>
<polyline points="800.2,447.9 798.8,448.3" fill="none" stroke="#00ff08" stroke-width="3.5" stroke-linecap="round" stroke-linejoin="round"/>
<polyline points="798.8,448.3 797.2,448.6" fill="none" stroke="#12ff00" stroke-width="3.5" stroke-linecap="round" stroke-linejoin="round"/>
<polyline points="797.2,448.6 795.7,448.9" fill="none" stroke="#36ff00" stroke-width="3.5" stroke-linecap="round" stroke-linejoin="round"/>
<polyline points="795.7,448.9 794.1,449.3 792.4,449.6" fill="none" stroke="#5bff00" stroke-width="3.5" stroke-linecap="round" stroke-linejoin="round"/>
<polyline points="792.4,449.6 790.8,449.9" fill="none" stroke="#7fff00" stroke-width="3.5" stroke-linecap="round" stroke-linejoin="round"/>
<polyline points="790.8,449.9 789.1,450.3" fill="none" stroke="#a3ff00" stroke-width="3.5" stroke-linecap="round" stroke-linejoin="round"/>
<polyline points="789.1,450.3 787.3,450.6 785.6,450.9" fill="none" stroke="#c7ff00" stroke-width="3.5" stroke-linecap="round" stroke-linejoin="round"/>
<polyline points="785.6,450.9 783.8,451.3 782.0,451.6 780.2,451.9" fill="none" stroke="#ebff00" stroke-width="3.5" stroke-linecap="round" stroke-linejoin="round"/>
<polyline points="780.2,451.9 778.4,452.3 776.6,452.6 774.8,452.9 772.9,453.3 771.1,453.6 769.3,453.9 767.5,454.3 765.7,454.6" fill="none" stroke="#fff700" stroke-width="3.5" stroke-linecap="round" stroke-linejoin="round"/>
<polyline points="765.7,454.6 763.9,454.9 762.1,455.3 760.3,455.6" fill="none" stroke="#ebff00" stroke-width="3.5" stroke-linecap="round" stroke-linejoin="round"/>
<polyline points="760.3,455.6 758.6,455.9" fill="none" stroke="#c7ff00" stroke-width="3.5" stroke-linecap="round" stroke-linejoin="round"/>
<polyline points="758.6,455.9 756.8,456.3 755.1,456.6" fill="none" stroke="#a3ff00" stroke-width="3.5" stroke-linecap="round" stroke-linejoin="round"/>
<polyline points="755.1,456.6 753.5,456.9" fill="none" stroke="#7fff00" stroke-width="3.5" stroke-linecap="round" stroke-linejoin="round"/>
<polyline points="753.5,456.9 751.9,457.3 750.3,457.6" fill="none" stroke="#5bff00" stroke-width="3.5" stroke-linecap="round" stroke-linejoin="round"/>
<polyline points="750.3,457.6 748.7,457.9" fill="none" stroke="#36ff00" stroke-width="3.5" stroke-linecap="round" stroke-linejoin="round"/>
<polyline points="748.7,457.9 747.2,458.3" fill="none" stroke="#12ff00" stroke-width="3.5" stroke-linecap="round" stroke-linejoin="round"/>
<polyline points="747.2,458.3 745.7,458.6" fill="none" stroke="#00ff08" stroke-width="3.5" stroke-linecap="round" stroke-linejoin="round"/>
<polyline points="745.7,458.6 744.3,458.9" fill="none" stroke="#00ff19" stroke-width="3.5" stroke-linecap="round" stroke-linejoin="round"/>
<polyline points="744.3,458.9 742.9,459.3" fill="none" stroke="#00ff3a" stroke-width="3.5" stroke-linecap="round" stroke-linejoin="round"/>
<polyline points="742.9,459.3 741.6,459.6" fill="none" stroke="#00ff4b" stroke-width="3.5" stroke-linecap="round" stroke-linejoin="round"/>
<polyline points="741.6,459.6 740.3,459.9" fill="none" stroke="#00ff5c" stroke-width="3.5" stroke-linecap="round" stroke-linejoin="round"/>
<polyline points="740.3,459.9 739.1,460.3" fill="none" stroke="#00ff6c" stroke-width="3.5" stroke-linecap="round" stroke-linejoin="round"/>
<polyline points="739.1,460.3 738.0,460.6" fill="none" stroke="#00ff8d" stroke-width="3.5" stroke-linecap="round" stroke-linejoin="round"/>
<polyline points="738.0,460.6 736.9,460.9" fill="none" stroke="#00ff9c" stroke-width="3.5" stroke-linecap="round" stroke-linejoin="round"/>
<polyline points="736.9,460.9 735.8,461.3" fill="none" stroke="#00ffab" stroke-width="3.5" stroke-linecap="round" stroke-linejoin="round"/>
<polyline points="735.8,461.3 734.9,461.6" fill="none" stroke="#00ffca" stroke-width="3.5" stroke-linecap="round" stroke-linejoin="round"/>
<polyline points="734.9,461.6 734.0,461.9" fill="none" stroke="#00ffd9" stroke-width="3.5" stroke-linecap="round" stroke-linejoin="round"/>
<polyline points="734.0,461.9 733.2,462.3" fill="none" stroke="#00ffe8" stroke-width="3.5" stroke-linecap="round" stroke-linejoin="round"/>
<polyline points="733.2,462.3 732.4,462.6" fill="none" stroke="#00f1ff" stroke-width="3.5" stroke-linecap="round" stroke-linejoin="round"/>
<polyline points="732.4,462.6 731.7,462.9" fill="none" stroke="#00d4ff" stroke-width="3.5" stroke-linecap="round" stroke-linejoin="round"/>
<polyline points="731.7,462.9 731.1,463.3" fill="none" stroke="#009cff" stroke-width="3.5" stroke-linecap="round" stroke-linejoin="round"/>
<polyline points="731.1,463.3 730.6,463.6" fill="none" stroke="#007fff" stroke-width="3.5" stroke-linecap="round" stroke-linejoin="round"/>
<polyline points="730.6,463.6 730.1,463.9" fill="none" stroke="#0063ff" stroke-width="3.5" stroke-linecap="round" stroke-linejoin="round"/>
<polyline points="730.1,463.9 729.7,464.3" fill="none" stroke="#0046ff" stroke-width="3.5" stroke-linecap="round" stroke-linejoin="round"/>
<polyline points="729.7,464.3 729.4,464.6" fill="none" stroke="#002aff" stroke-width="3.5" stroke-linecap="round" stroke-linejoin="round"/>
<polyline points="729.4,464.6 729.2,464.9" fill="none" stroke="#000dff" stroke-width="3.5" stroke-linecap="round" stroke-linejoin="round"/>
<polyline points="729.2,464.9 729.1,465.3 729.0,465.6 729.0,465.9 729.2,466.3" fill="none" stroke="#0500f2" stroke-width="3.5" stroke-linecap="round" stroke-linejoin="round"/>
<polyline points="729.2,466.3 729.4,466.6" fill="none" stroke="#000dff" stroke-width="3.5" stroke-linecap="round" stroke-linejoin="round"/>
<polyline points="729.4,466.6 729.7,466.9" fill="none" stroke="#002aff" stroke-width="3.5" stroke-linecap="round" stroke-linejoin="round"/>
<polyline points="729.7,466.9 730.1,467.3" fill="none" stroke="#0046ff" stroke-width="3.5" stroke-linecap="round" stroke-linejoin="round"/>
<polyline points="730.1,467.3 730.6,467.6" fill="none" stroke="#0063ff" stroke-width="3.5" stroke-linecap="round" stroke-linejoin="round"/>
<polyline points="730.6,467.6 731.2,467.9" fill="none" stroke="#009cff" stroke-width="3.5" stroke-linecap="round" stroke-linejoin="round"/>
<polyline points="731.2,467.9 731.8,468.3" fill="none" stroke="#00b8ff" stroke-width="3.5" stroke-linecap="round" stroke-linejoin="round"/>
<polyline points="731.8,468.3 732.6,468.6" fill="none" stroke="#00f1ff" stroke-width="3.5" stroke-linecap="round" stroke-linejoin="round"/>
<polyline points="732.6,468.6 733.4,468.9" fill="none" stroke="#00ffe8" stroke-width="3.5" stroke-linecap="round" stroke-linejoin="round"/>
<polyline points="733.4,468.9 734.4,469.3" fill="none" stroke="#00ffca" stroke-width="3.5" stroke-linecap="round" stroke-linejoin="round"/>
<polyline points="734.4,469.3 735.4,469.6" fill="none" stroke="#00ffab" stroke-width="3.5" stroke-linecap="round" stroke-linejoin="round"/>
<polyline points="735.4,469.6 736.5,469.9" fill="none" stroke="#00ff9c" stroke-width="3.5" stroke-linecap="round" stroke-linejoin="round"/>
<polyline points="736.5,469.9 737.7,470.3" fill="none" stroke="#00ff7d" stroke-width="3.5" stroke-linecap="round" stroke-linejoin="round"/>
<polyline points="737.7,470.3 739.0,470.6" fill="none" stroke="#00ff5c" stroke-width="3.5" stroke-linecap="round" stroke-linejoin="round"/>
<polyline points="739.0,470.6 740.3,470.9" fill="none" stroke="#00ff3a" stroke-width="3.5" stroke-linecap="round" stroke-linejoin="round"/>
<polyline points="740.3,470.9 741.7,471.3" fill="none" stroke="#00ff19" stroke-width="3.5" stroke-linecap="round" stroke-linejoin="round"/>
<polyline points="741.7,471.3 743.2,471.6" fill="none" stroke="#00ff08" stroke-width="3.5" stroke-linecap="round" stroke-linejoin="round"/>
<polyline points="743.2,471.6 744.8,471.9" fill="none" stroke="#36ff00" stroke-width="3.5" stroke-linecap="round" stroke-linejoin="round"/>
<polyline points="744.8,471.9 746.5,472.3" fill="none" stroke="#7fff00" stroke-width="3.5" stroke-linecap="round" stroke-linejoin="round"/>
<polyline points="746.5,472.3 748.2,472.6" fill="none" stroke="#a3ff00" stroke-width="3.5" stroke-linecap="round" stroke-linejoin="round"/>
<polyline points="748.2,472.6 750.0,472.9" fill="none" stroke="#ebff00" stroke-width="3.5" stroke-linecap="round" stroke-linejoin="round"/>
<polyline points="750.0,472.9 751.8,473.3" fill="none" stroke="#ffe700" stroke-width="3.5" stroke-linecap="round" stroke-linejoin="round"/>
<polyline points="751.8,473.3 753.7,473.6" fill="none" stroke="#ffd600" stroke-width="3.5" stroke-linecap="round" stroke-linejoin="round"/>
<polyline points="753.7,473.6 755.7,473.9" fill="none" stroke="#ffc600" stroke-width="3.5" stroke-linecap="round" stroke-linejoin="round"/>
<polyline points="755.7,473.9 757.7,474.3" fill="none" stroke="#ffa500" stroke-width="3.5" stroke-linecap="round" stroke-linejoin="round"/>
<polyline points="757.7,474.3 759.8,474.6" fill="none" stroke="#ff9400" stroke-width="3.5" stroke-linecap="round" stroke-linejoin="round"/>
<polyline points="759.8,474.6 762.0,474.9" fill="none" stroke="#ff8400" stroke-width="3.5" stroke-linecap="round" stroke-linejoin="round"/>
<polyline points="762.0,474.9 764.1,475.3" fill="none" stroke="#ff7300" stroke-width="3.5" stroke-linecap="round" stroke-linejoin="round"/>
<polyline points="764.1,475.3 766.4,475.6" fill="none" stroke="#ff6200" stroke-width="3.5" stroke-linecap="round" stroke-linejoin="round"/>
<polyline points="766.4,475.6 768.6,475.9" fill="none" stroke="#ff5200" stroke-width="3.5" stroke-linecap="round" stroke-linejoin="round"/>
<polyline points="768.6,475.9 770.9,476.3" fill="none" stroke="#ff4100" stroke-width="3.5" stroke-linecap="round" stroke-linejoin="round"/>
<polyline points="770.9,476.3 773.2,476.6" fill="none" stroke="#ff3000" stroke-width="3.5" stroke-linecap="round" stroke-linejoin="round"/>
<polyline points="773.2,476.6 775.6,476.9 778.0,477.3" fill="none" stroke="#ff2000" stroke-width="3.5" stroke-linecap="round" stroke-linejoin="round"/>
<polyline points="778.0,477.3 780.4,477.6 782.8,477.9" fill="none" stroke="#ff0f00" stroke-width="3.5" stroke-linecap="round" stroke-linejoin="round"/>
<polyline points="782.8,477.9 785.3,478.3 787.7,478.6 790.2,478.9 792.6,479.3 795.1,479.6 797.5,479.9 800.0,480.3" fill="none" stroke="#ff0103" stroke-width="3.5" stroke-linecap="round" stroke-linejoin="round"/>
<polyline points="800.0,480.3 802.4,480.6 804.8,480.9" fill="none" stroke="#ff0f00" stroke-width="3.5" stroke-linecap="round" stroke-linejoin="round"/>
<polyline points="804.8,480.9 807.2,481.3 809.6,481.6" fill="none" stroke="#ff2000" stroke-width="3.5" stroke-linecap="round" stroke-linejoin="round"/>
<polyline points="809.6,481.6 811.9,481.9" fill="none" stroke="#ff3000" stroke-width="3.5" stroke-linecap="round" stroke-linejoin="round"/>
<polyline points="811.9,481.9 814.2,482.3" fill="none" stroke="#ff4100" stroke-width="3.5" stroke-linecap="round" stroke-linejoin="round"/>
<polyline points="814.2,482.3 816.5,482.6" fill="none" stroke="#ff5200" stroke-width="3.5" stroke-linecap="round" stroke-linejoin="round"/>
<polyline points="816.5,482.6 818.7,482.9" fill="none" stroke="#ff6200" stroke-width="3.5" stroke-linecap="round" stroke-linejoin="round"/>
<polyline points="818.7,482.9 820.9,483.3" fill="none" stroke="#ff7300" stroke-width="3.5" stroke-linecap="round" stroke-linejoin="round"/>
<polyline points="820.9,483.3 823.0,483.6" fill="none" stroke="#ff8400" stroke-width="3.5" stroke-linecap="round" stroke-linejoin="round"/>
<polyline points="823.0,483.6 825.1,483.9" fill="none" stroke="#ff9400" stroke-width="3.5" stroke-linecap="round" stroke-linejoin="round"/>
<polyline points="825.1,483.9 827.1,484.3" fill="none" stroke="#ffa500" stroke-width="3.5" stroke-linecap="round" stroke-linejoin="round"/>
<polyline points="827.1,484.3 829.1,484.6" fill="none" stroke="#ffc600" stroke-width="3.5" stroke-linecap="round" stroke-linejoin="round"/>
<polyline points="829.1,484.6 831.0,484.9" fill="none" stroke="#ffd600" stroke-width="3.5" stroke-linecap="round" stroke-linejoin="round"/>
<polyline points="831.0,484.9 832.8,485.3" fill="none" stroke="#fff700" stroke-width="3.5" stroke-linecap="round" stroke-linejoin="round"/>
<polyline points="832.8,485.3 834.6,485.6" fill="none" stroke="#ebff00" stroke-width="3.5" stroke-linecap="round" stroke-linejoin="round"/>
<polyline points="834.6,485.6 836.3,485.9" fill="none" stroke="#a3ff00" stroke-width="3.5" stroke-linecap="round" stroke-linejoin="round"/>
<polyline points="836.3,485.9 837.9,486.3" fill="none" stroke="#5bff00" stroke-width="3.5" stroke-linecap="round" stroke-linejoin="round"/>
<polyline points="837.9,486.3 839.5,486.6" fill="none" stroke="#36ff00" stroke-width="3.5" stroke-linecap="round" stroke-linejoin="round"/>
<polyline points="839.5,486.6 841.0,486.9" fill="none" stroke="#00ff08" stroke-width="3.5" stroke-linecap="round" stroke-linejoin="round"/>
<polyline points="841.0,486.9 842.4,487.3" fill="none" stroke="#00ff2a" stroke-width="3.5" stroke-linecap="round" stroke-linejoin="round"/>
<polyline points="842.4,487.3 843.7,487.6" fill="none" stroke="#00ff4b" stroke-width="3.5" stroke-linecap="round" stroke-linejoin="round"/>
<polyline points="843.7,487.6 844.9,487.9" fill="none" stroke="#00ff6c" stroke-width="3.5" stroke-linecap="round" stroke-linejoin="round"/>
<polyline points="844.9,487.9 846.0,488.3" fill="none" stroke="#00ff8d" stroke-width="3.5" stroke-linecap="round" stroke-linejoin="round"/>
<polyline points="846.0,488.3 847.1,488.6" fill="none" stroke="#00ffab" stroke-width="3.5" stroke-linecap="round" stroke-linejoin="round"/>
<polyline points="847.1,488.6 848.1,488.9" fill="none" stroke="#00ffca" stroke-width="3.5" stroke-linecap="round" stroke-linejoin="round"/>
<polyline points="848.1,488.9 848.9,489.3" fill="none" stroke="#00ffe8" stroke-width="3.5" stroke-linecap="round" stroke-linejoin="round"/>
<polyline points="848.9,489.3 849.7,489.6" fill="none" stroke="#00f1ff" stroke-width="3.5" stroke-linecap="round" stroke-linejoin="round"/>
<polyline points="849.7,489.6 850.4,489.9" fill="none" stroke="#00d4ff" stroke-width="3.5" stroke-linecap="round" stroke-linejoin="round"/>
<polyline points="850.4,489.9 850.9,490.3" fill="none" stroke="#009cff" stroke-width="3.5" stroke-linecap="round" stroke-linejoin="round"/>
<polyline points="850.9,490.3 851.4,490.6" fill="none" stroke="#0063ff" stroke-width="3.5" stroke-linecap="round" stroke-linejoin="round"/>
<polyline points="851.4,490.6 851.8,490.9" fill="none" stroke="#0046ff" stroke-width="3.5" stroke-linecap="round" stroke-linejoin="round"/>
<polyline points="851.8,490.9 852.1,491.3" fill="none" stroke="#000dff" stroke-width="3.5" stroke-linecap="round" stroke-linejoin="round"/>
<polyline points="852.1,491.3 852.2,491.6 852.3,491.9 852.3,492.3 852.1,492.6" fill="none" stroke="#0500f2" stroke-width="3.5" stroke-linecap="round" stroke-linejoin="round"/>
<polyline points="852.1,492.6 851.9,492.9" fill="none" stroke="#000dff" stroke-width="3.5" stroke-linecap="round" stroke-linejoin="round"/>
<polyline points="851.9,492.9 851.6,493.3" fill="none" stroke="#002aff" stroke-width="3.5" stroke-linecap="round" stroke-linejoin="round"/>
<polyline points="851.6,493.3 851.3,493.6" fill="none" stroke="#0046ff" stroke-width="3.5" stroke-linecap="round" stroke-linejoin="round"/>
<polyline points="851.3,493.6 850.8,493.9" fill="none" stroke="#0063ff" stroke-width="3.5" stroke-linecap="round" stroke-linejoin="round"/>
<polyline points="850.8,493.9 850.3,494.3" fill="none" stroke="#007fff" stroke-width="3.5" stroke-linecap="round" stroke-linejoin="round"/>
<polyline points="850.3,494.3 849.6,494.6" fill="none" stroke="#00b8ff" stroke-width="3.5" stroke-linecap="round" stroke-linejoin="round"/>
<polyline points="849.6,494.6 848.9,494.9" fill="none" stroke="#00d4ff" stroke-width="3.5" stroke-linecap="round" stroke-linejoin="round"/>
<polyline points="848.9,494.9 848.1,495.3" fill="none" stroke="#00fff7" stroke-width="3.5" stroke-linecap="round" stroke-linejoin="round"/>
<polyline points="848.1,495.3 847.2,495.6" fill="none" stroke="#00ffd9" stroke-width="3.5" stroke-linecap="round" stroke-linejoin="round"/>
<polyline points="847.2,495.6 846.3,495.9" fill="none" stroke="#00ffca" stroke-width="3.5" stroke-linecap="round" stroke-linejoin="round"/>
<polyline points="846.3,495.9 845.2,496.3" fill="none" stroke="#00ffab" stroke-width="3.5" stroke-linecap="round" stroke-linejoin="round"/>
<polyline points="845.2,496.3 844.1,496.6" fill="none" stroke="#00ff8d" stroke-width="3.5" stroke-linecap="round" stroke-linejoin="round"/>
<polyline points="844.1,496.6 842.9,496.9" fill="none" stroke="#00ff7d" stroke-width="3.5" stroke-linecap="round" stroke-linejoin="round"/>
<polyline points="842.9,496.9 841.7,497.3" fill="none" stroke="#00ff5c" stroke-width="3.5" stroke-linecap="round" stroke-linejoin="round"/>
<polyline points="841.7,497.3 840.3,497.6" fill="none" stroke="#00ff3a" stroke-width="3.5" stroke-linecap="round" stroke-linejoin="round"/>
<polyline points="840.3,497.6 838.9,497.9" fill="none" stroke="#00ff2a" stroke-width="3.5" stroke-linecap="round" stroke-linejoin="round"/>
<polyline points="838.9,497.9 837.5,498.3" fill="none" stroke="#00ff08" stroke-width="3.5" stroke-linecap="round" stroke-linejoin="round"/>
<polyline points="837.5,498.3 835.9,498.6" fill="none" stroke="#12ff00" stroke-width="3.5" stroke-linecap="round" stroke-linejoin="round"/>
<polyline points="835.9,498.6 834.3,498.9" fill="none" stroke="#5bff00" stroke-width="3.5" stroke-linecap="round" stroke-linejoin="round"/>
<polyline points="834.3,498.9 832.7,499.3" fill="none" stroke="#7fff00" stroke-width="3.5" stroke-linecap="round" stroke-linejoin="round"/>
<polyline points="832.7,499.3 830.9,499.6" fill="none" stroke="#a3ff00" stroke-width="3.5" stroke-linecap="round" stroke-linejoin="round"/>
<polyline points="830.9,499.6 829.2,499.9" fill="none" stroke="#ebff00" stroke-width="3.5" stroke-linecap="round" stroke-linejoin="round"/>
<polyline points="829.2,499.9 827.3,500.3" fill="none" stroke="#fff700" stroke-width="3.5" stroke-linecap="round" stroke-linejoin="round"/>
<polyline points="827.3,500.3 825.4,500.6" fill="none" stroke="#ffe700" stroke-width="3.5" stroke-linecap="round" stroke-linejoin="round"/>
<polyline points="825.4,500.6 823.5,500.9" fill="none" stroke="#ffd600" stroke-width="3.5" stroke-linecap="round" stroke-linejoin="round"/>
<polyline points="823.5,500.9 821.5,501.3" fill="none" stroke="#ffc600" stroke-width="3.5" stroke-linecap="round" stroke-linejoin="round"/>
<polyline points="821.5,501.3 819.5,501.6" fill="none" stroke="#ffb500" stroke-width="3.5" stroke-linecap="round" stroke-linejoin="round"/>
<polyline points="819.5,501.6 817.5,501.9" fill="none" stroke="#ffa500" stroke-width="3.5" stroke-linecap="round" stroke-linejoin="round"/>
<polyline points="817.5,501.9 815.4,502.3" fill="none" stroke="#ff9400" stroke-width="3.5" stroke-linecap="round" stroke-linejoin="round"/>
<polyline points="815.4,502.3 813.3,502.6" fill="none" stroke="#ff8400" stroke-width="3.5" stroke-linecap="round" stroke-linejoin="round"/>
<polyline points="813.3,502.6 811.1,502.9 808.9,503.3" fill="none" stroke="#ff7300" stroke-width="3.5" stroke-linecap="round" stroke-linejoin="round"/>
<polyline points="808.9,503.3 806.7,503.6 804.5,503.9" fill="none" stroke="#ff6200" stroke-width="3.5" stroke-linecap="round" stroke-linejoin="round"/>
<polyline points="804.5,503.9 802.3,504.3 800.0,504.6 797.8,504.9 795.5,505.3 793.2,505.6 791.0,505.9 788.7,506.3 786.5,506.6 784.2,506.9" fill="none" stroke="#ff5200" stroke-width="3.5" stroke-linecap="round" stroke-linejoin="round"/>
<polyline points="784.2,506.9 782.0,507.3 779.8,507.6" fill="none" stroke="#ff6200" stroke-width="3.5" stroke-linecap="round" stroke-linejoin="round"/>
<polyline points="779.8,507.6 777.6,507.9 775.5,508.3" fill="none" stroke="#ff7300" stroke-width="3.5" stroke-linecap="round" stroke-linejoin="round"/>
<polyline points="775.5,508.3 773.3,508.6" fill="none" stroke="#ff8400" stroke-width="3.5" stroke-linecap="round" stroke-linejoin="round"/>
<polyline points="773.3,508.6 771.2,508.9 769.2,509.3" fill="none" stroke="#ff9400" stroke-width="3.5" stroke-linecap="round" stroke-linejoin="round"/>
<polyline points="769.2,509.3 767.2,509.6" fill="none" stroke="#ffa500" stroke-width="3.5" stroke-linecap="round" stroke-linejoin="round"/>
<polyline points="767.2,509.6 765.2,509.9" fill="none" stroke="#ffb500" stroke-width="3.5" stroke-linecap="round" stroke-linejoin="round"/>
<polyline points="765.2,509.9 763.2,510.3" fill="none" stroke="#ffc600" stroke-width="3.5" stroke-linecap="round" stroke-linejoin="round"/>
<polyline points="763.2,510.3 761.4,510.6" fill="none" stroke="#ffe700" stroke-width="3.5" stroke-linecap="round" stroke-linejoin="round"/>
<polyline points="761.4,510.6 759.5,510.9" fill="none" stroke="#fff700" stroke-width="3.5" stroke-linecap="round" stroke-linejoin="round"/>
<polyline points="759.5,510.9 757.7,511.3" fill="none" stroke="#ebff00" stroke-width="3.5" stroke-linecap="round" stroke-linejoin="round"/>
<polyline points="757.7,511.3 756.0,511.6" fill="none" stroke="#c7ff00" stroke-width="3.5" stroke-linecap="round" stroke-linejoin="round"/>
<polyline points="756.0,511.6 754.4,511.9" fill="none" stroke="#7fff00" stroke-width="3.5" stroke-linecap="round" stroke-linejoin="round"/>
<polyline points="754.4,511.9 752.8,512.3" fill="none" stroke="#5bff00" stroke-width="3.5" stroke-linecap="round" stroke-linejoin="round"/>
<polyline points="752.8,512.3 751.2,512.6" fill="none" stroke="#12ff00" stroke-width="3.5" stroke-linecap="round" stroke-linejoin="round"/>
<polyline points="751.2,512.6 749.8,512.9" fill="none" stroke="#00ff08" stroke-width="3.5" stroke-linecap="round" stroke-linejoin="round"/>
<polyline points="749.8,512.9 748.4,513.3" fill="none" stroke="#00ff2a" stroke-width="3.5" stroke-linecap="round" stroke-linejoin="round"/>
<polyline points="748.4,513.3 747.0,513.6" fill="none" stroke="#00ff4b" stroke-width="3.5" stroke-linecap="round" stroke-linejoin="round"/>
<polyline points="747.0,513.6 745.8,513.9" fill="none" stroke="#00ff5c" stroke-width="3.5" stroke-linecap="round" stroke-linejoin="round"/>
<polyline points="745.8,513.9 744.6,514.3" fill="none" stroke="#00ff7d" stroke-width="3.5" stroke-linecap="round" stroke-linejoin="round"/>
<polyline points="744.6,514.3 743.5,514.6" fill="none" stroke="#00ff9c" stroke-width="3.5" stroke-linecap="round" stroke-linejoin="round"/>
<polyline points="743.5,514.6 742.5,514.9" fill="none" stroke="#00ffba" stroke-width="3.5" stroke-linecap="round" stroke-linejoin="round"/>
<polyline points="742.5,514.9 741.6,515.3" fill="none" stroke="#00ffca" stroke-width="3.5" stroke-linecap="round" stroke-linejoin="round"/>
<polyline points="741.6,515.3 740.7,515.6" fill="none" stroke="#00ffe8" stroke-width="3.5" stroke-linecap="round" stroke-linejoin="round"/>
<polyline points="740.7,515.6 740.0,515.9" fill="none" stroke="#00f1ff" stroke-width="3.5" stroke-linecap="round" stroke-linejoin="round"/>
<polyline points="740.0,515.9 739.3,516.3" fill="none" stroke="#00b8ff" stroke-width="3.5" stroke-linecap="round" stroke-linejoin="round"/>
<polyline points="739.3,516.3 738.7,516.6" fill="none" stroke="#009cff" stroke-width="3.5" stroke-linecap="round" stroke-linejoin="round"/>
<polyline points="738.7,516.6 738.3,516.9" fill="none" stroke="#0063ff" stroke-width="3.5" stroke-linecap="round" stroke-linejoin="round"/>
<polyline points="738.3,516.9 737.9,517.3" fill="none" stroke="#0046ff" stroke-width="3.5" stroke-linecap="round" stroke-linejoin="round"/>
<polyline points="737.9,517.3 737.5,517.6" fill="none" stroke="#002aff" stroke-width="3.5" stroke-linecap="round" stroke-linejoin="round"/>
<polyline points="737.5,517.6 737.3,517.9" fill="none" stroke="#000dff" stroke-width="3.5" stroke-linecap="round" stroke-linejoin="round"/>
<polyline points="737.3,517.9 737.2,518.3 737.2,518.6 737.3,518.9" fill="none" stroke="#0500f2" stroke-width="3.5" stroke-linecap="round" stroke-linejoin="round"/>
<polyline points="737.3,518.9 737.5,519.3" fill="none" stroke="#000dff" stroke-width="3.5" stroke-linecap="round" stroke-linejoin="round"/>
<polyline points="737.5,519.3 737.9,519.6" fill="none" stroke="#002aff" stroke-width="3.5" stroke-linecap="round" stroke-linejoin="round"/>
<polyline points="737.9,519.6 738.3,519.9" fill="none" stroke="#0063ff" stroke-width="3.5" stroke-linecap="round" stroke-linejoin="round"/>
<polyline points="738.3,519.9 738.9,520.3" fill="none" stroke="#007fff" stroke-width="3.5" stroke-linecap="round" stroke-linejoin="round"/>
<polyline points="738.9,520.3 739.5,520.6" fill="none" stroke="#00b8ff" stroke-width="3.5" stroke-linecap="round" stroke-linejoin="round"/>
<polyline points="739.5,520.6 740.3,520.9" fill="none" stroke="#00f1ff" stroke-width="3.5" stroke-linecap="round" stroke-linejoin="round"/>
<polyline points="740.3,520.9 741.1,521.3" fill="none" stroke="#00ffe8" stroke-width="3.5" stroke-linecap="round" stroke-linejoin="round"/>
<polyline points="741.1,521.3 742.1,521.6" fill="none" stroke="#00ffca" stroke-width="3.5" stroke-linecap="round" stroke-linejoin="round"/>
<polyline points="742.1,521.6 743.1,521.9" fill="none" stroke="#00ffab" stroke-width="3.5" stroke-linecap="round" stroke-linejoin="round"/>
<polyline points="743.1,521.9 744.3,522.3" fill="none" stroke="#00ff8d" stroke-width="3.5" stroke-linecap="round" stroke-linejoin="round"/>
<polyline points="744.3,522.3 745.5,522.6" fill="none" stroke="#00ff6c" stroke-width="3.5" stroke-linecap="round" stroke-linejoin="round"/>
<polyline points="745.5,522.6 746.9,522.9" fill="none" stroke="#00ff3a" stroke-width="3.5" stroke-linecap="round" stroke-linejoin="round"/>
<polyline points="746.9,522.9 748.3,523.3" fill="none" stroke="#00ff19" stroke-width="3.5" stroke-linecap="round" stroke-linejoin="round"/>
<polyline points="748.3,523.3 749.8,523.6" fill="none" stroke="#12ff00" stroke-width="3.5" stroke-linecap="round" stroke-linejoin="round"/>
<polyline points="749.8,523.6 751.4,523.9" fill="none" stroke="#5bff00" stroke-width="3.5" stroke-linecap="round" stroke-linejoin="round"/>
<polyline points="751.4,523.9 753.1,524.3" fill="none" stroke="#a3ff00" stroke-width="3.5" stroke-linecap="round" stroke-linejoin="round"/>
<polyline points="753.1,524.3 754.9,524.6" fill="none" stroke="#ebff00" stroke-width="3.5" stroke-linecap="round" stroke-linejoin="round"/>
<polyline points="754.9,524.6 756.7,524.9" fill="none" stroke="#ffe700" stroke-width="3.5" stroke-linecap="round" stroke-linejoin="round"/>
<polyline points="756.7,524.9 758.6,525.3" fill="none" stroke="#ffd600" stroke-width="3.5" stroke-linecap="round" stroke-linejoin="round"/>
<polyline points="758.6,525.3 760.6,525.6" fill="none" stroke="#ffb500" stroke-width="3.5" stroke-linecap="round" stroke-linejoin="round"/>
<polyline points="760.6,525.6 762.7,525.9" fill="none" stroke="#ff9400" stroke-width="3.5" stroke-linecap="round" stroke-linejoin="round"/>
<polyline points="762.7,525.9 764.9,526.3" fill="none" stroke="#ff7300" stroke-width="3.5" stroke-linecap="round" stroke-linejoin="round"/>
<polyline points="764.9,526.3 767.1,526.6" fill="none" stroke="#ff6200" stroke-width="3.5" stroke-linecap="round" stroke-linejoin="round"/>
<polyline points="767.1,526.6 769.4,526.9" fill="none" stroke="#ff4100" stroke-width="3.5" stroke-linecap="round" stroke-linejoin="round"/>
<polyline points="769.4,526.9 771.7,527.3" fill="none" stroke="#ff3000" stroke-width="3.5" stroke-linecap="round" stroke-linejoin="round"/>
<polyline points="771.7,527.3 774.1,527.6" fill="none" stroke="#ff2000" stroke-width="3.5" stroke-linecap="round" stroke-linejoin="round"/>
<polyline points="774.1,527.6 776.5,527.9" fill="none" stroke="#ff0103" stroke-width="3.5" stroke-linecap="round" stroke-linejoin="round"/>
<polyline points="776.5,527.9 779.0,528.3" fill="none" stroke="#ff1023" stroke-width="3.5" stroke-linecap="round" stroke-linejoin="round"/>
<polyline points="779.0,528.3 781.6,528.6" fill="none" stroke="#ff1e43" stroke-width="3.5" stroke-linecap="round" stroke-linejoin="round"/>
<polyline points="781.6,528.6 784.1,528.9" fill="none" stroke="#ff2c64" stroke-width="3.5" stroke-linecap="round" stroke-linejoin="round"/>
<polyline points="784.1,528.9 786.8,529.3" fill="none" stroke="#ff3b84" stroke-width="3.5" stroke-linecap="round" stroke-linejoin="round"/>
<polyline points="786.8,529.3 789.4,529.6" fill="none" stroke="#ff4f9c" stroke-width="3.5" stroke-linecap="round" stroke-linejoin="round"/>
<polyline points="789.4,529.6 792.1,529.9 794.8,530.3" fill="none" stroke="#ff68ae" stroke-width="3.5" stroke-linecap="round" stroke-linejoin="round"/>
<polyline points="794.8,530.3 797.5,530.6 800.3,530.9 803.0,531.3" fill="none" stroke="#ff81c1" stroke-width="3.5" stroke-linecap="round" stroke-linejoin="round"/>
<polyline points="803.0,531.3 805.8,531.6 808.6,531.9 811.4,532.3 814.1,532.6 816.9,532.9" fill="none" stroke="#ff9ad4" stroke-width="3.5" stroke-linecap="round" stroke-linejoin="round"/>
<polyline points="816.9,532.9 819.7,533.3 822.4,533.6 825.1,533.9" fill="none" stroke="#ff81c1" stroke-width="3.5" stroke-linecap="round" stroke-linejoin="round"/>
<polyline points="825.1,533.9 827.8,534.3" fill="none" stroke="#ff68ae" stroke-width="3.5" stroke-linecap="round" stroke-linejoin="round"/>
<polyline points="827.8,534.3 830.5,534.6" fill="none" stroke="#ff4f9c" stroke-width="3.5" stroke-linecap="round" stroke-linejoin="round"/>
<polyline points="830.5,534.6 833.1,534.9 835.7,535.3" fill="none" stroke="#ff3b84" stroke-width="3.5" stroke-linecap="round" stroke-linejoin="round"/>
<polyline points="835.7,535.3 838.3,535.6" fill="none" stroke="#ff2c64" stroke-width="3.5" stroke-linecap="round" stroke-linejoin="round"/>
<polyline points="838.3,535.6 840.8,535.9" fill="none" stroke="#ff1e43" stroke-width="3.5" stroke-linecap="round" stroke-linejoin="round"/>
<polyline points="840.8,535.9 843.3,536.3" fill="none" stroke="#ff0103" stroke-width="3.5" stroke-linecap="round" stroke-linejoin="round"/>
<polyline points="843.3,536.3 845.7,536.6" fill="none" stroke="#ff0f00" stroke-width="3.5" stroke-linecap="round" stroke-linejoin="round"/>
<polyline points="845.7,536.6 848.1,536.9" fill="none" stroke="#ff2000" stroke-width="3.5" stroke-linecap="round" stroke-linejoin="round"/>
<polyline points="848.1,536.9 850.4,537.3" fill="none" stroke="#ff3000" stroke-width="3.5" stroke-linecap="round" stroke-linejoin="round"/>
<polyline points="850.4,537.3 852.7,537.6" fill="none" stroke="#ff5200" stroke-width="3.5" stroke-linecap="round" stroke-linejoin="round"/>
<polyline points="852.7,537.6 854.8,537.9" fill="none" stroke="#ff7300" stroke-width="3.5" stroke-linecap="round" stroke-linejoin="round"/>
<polyline points="854.8,537.9 857.0,538.3" fill="none" stroke="#ff8400" stroke-width="3.5" stroke-linecap="round" stroke-linejoin="round"/>
<polyline points="857.0,538.3 859.0,538.6" fill="none" stroke="#ffa500" stroke-width="3.5" stroke-linecap="round" stroke-linejoin="round"/>
<polyline points="859.0,538.6 861.0,538.9" fill="none" stroke="#ffc600" stroke-width="3.5" stroke-linecap="round" stroke-linejoin="round"/>
<polyline points="861.0,538.9 862.9,539.3" fill="none" stroke="#ffd600" stroke-width="3.5" stroke-linecap="round" stroke-linejoin="round"/>
<polyline points="862.9,539.3 864.7,539.6" fill="none" stroke="#fff700" stroke-width="3.5" stroke-linecap="round" stroke-linejoin="round"/>
<polyline points="864.7,539.6 866.4,539.9" fill="none" stroke="#c7ff00" stroke-width="3.5" stroke-linecap="round" stroke-linejoin="round"/>
<polyline points="866.4,539.9 868.0,540.3" fill="none" stroke="#7fff00" stroke-width="3.5" stroke-linecap="round" stroke-linejoin="round"/>
<polyline points="868.0,540.3 869.6,540.6" fill="none" stroke="#36ff00" stroke-width="3.5" stroke-linecap="round" stroke-linejoin="round"/>
<polyline points="869.6,540.6 871.1,540.9" fill="none" stroke="#00ff08" stroke-width="3.5" stroke-linecap="round" stroke-linejoin="round"/>
<polyline points="871.1,540.9 872.4,541.3" fill="none" stroke="#00ff3a" stroke-width="3.5" stroke-linecap="round" stroke-linejoin="round"/>
<polyline points="872.4,541.3 873.7,541.6" fill="none" stroke="#00ff5c" stroke-width="3.5" stroke-linecap="round" stroke-linejoin="round"/>
<polyline points="873.7,541.6 874.9,541.9" fill="none" stroke="#00ff7d" stroke-width="3.5" stroke-linecap="round" stroke-linejoin="round"/>
<polyline points="874.9,541.9 876.0,542.3" fill="none" stroke="#00ff9c" stroke-width="3.5" stroke-linecap="round" stroke-linejoin="round"/>
<polyline points="876.0,542.3 877.0,542.6" fill="none" stroke="#00ffba" stroke-width="3.5" stroke-linecap="round" stroke-linejoin="round"/>
<polyline points="877.0,542.6 877.8,542.9" fill="none" stroke="#00ffd9" stroke-width="3.5" stroke-linecap="round" stroke-linejoin="round"/>
<polyline points="877.8,542.9 878.6,543.3" fill="none" stroke="#00fff7" stroke-width="3.5" stroke-linecap="round" stroke-linejoin="round"/>
<polyline points="878.6,543.3 879.3,543.6" fill="none" stroke="#00d4ff" stroke-width="3.5" stroke-linecap="round" stroke-linejoin="round"/>
<polyline points="879.3,543.6 879.9,543.9" fill="none" stroke="#009cff" stroke-width="3.5" stroke-linecap="round" stroke-linejoin="round"/>
<polyline points="879.9,543.9 880.3,544.3" fill="none" stroke="#0063ff" stroke-width="3.5" stroke-linecap="round" stroke-linejoin="round"/>
<polyline points="880.3,544.3 880.7,544.6" fill="none" stroke="#002aff" stroke-width="3.5" stroke-linecap="round" stroke-linejoin="round"/>
<polyline points="880.7,544.6 881.0,544.9" fill="none" stroke="#000dff" stroke-width="3.5" stroke-linecap="round" stroke-linejoin="round"/>
<polyline points="881.0,544.9 881.1,545.3 881.1,545.6 881.1,545.9" fill="none" stroke="#0500f2" stroke-width="3.5" stroke-linecap="round" stroke-linejoin="round"/>
<polyline points="881.1,545.9 880.9,546.3" fill="none" stroke="#000dff" stroke-width="3.5" stroke-linecap="round" stroke-linejoin="round"/>
<polyline points="880.9,546.3 880.6,546.6" fill="none" stroke="#002aff" stroke-width="3.5" stroke-linecap="round" stroke-linejoin="round"/>
<polyline points="880.6,546.6 880.2,546.9" fill="none" stroke="#0046ff" stroke-width="3.5" stroke-linecap="round" stroke-linejoin="round"/>
<polyline points="880.2,546.9 879.7,547.3" fill="none" stroke="#007fff" stroke-width="3.5" stroke-linecap="round" stroke-linejoin="round"/>
<polyline points="879.7,547.3 879.1,547.6" fill="none" stroke="#009cff" stroke-width="3.5" stroke-linecap="round" stroke-linejoin="round"/>
<polyline points="879.1,547.6 878.4,547.9" fill="none" stroke="#00d4ff" stroke-width="3.5" stroke-linecap="round" stroke-linejoin="round"/>
<polyline points="878.4,547.9 877.6,548.3" fill="none" stroke="#00fff7" stroke-width="3.5" stroke-linecap="round" stroke-linejoin="round"/>
<polyline points="877.6,548.3 876.7,548.6" fill="none" stroke="#00ffd9" stroke-width="3.5" stroke-linecap="round" stroke-linejoin="round"/>
<polyline points="876.7,548.6 875.6,548.9" fill="none" stroke="#00ffab" stroke-width="3.5" stroke-linecap="round" stroke-linejoin="round"/>
<polyline points="875.6,548.9 874.5,549.3" fill="none" stroke="#00ff8d" stroke-width="3.5" stroke-linecap="round" stroke-linejoin="round"/>
<polyline points="874.5,549.3 873.3,549.6" fill="none" stroke="#00ff6c" stroke-width="3.5" stroke-linecap="round" stroke-linejoin="round"/>
<polyline points="873.3,549.6 872.0,549.9" fill="none" stroke="#00ff4b" stroke-width="3.5" stroke-linecap="round" stroke-linejoin="round"/>
<polyline points="872.0,549.9 870.6,550.3" fill="none" stroke="#00ff2a" stroke-width="3.5" stroke-linecap="round" stroke-linejoin="round"/>
<polyline points="870.6,550.3 869.1,550.6" fill="none" stroke="#00ff08" stroke-width="3.5" stroke-linecap="round" stroke-linejoin="round"/>
<polyline points="869.1,550.6 867.5,550.9" fill="none" stroke="#36ff00" stroke-width="3.5" stroke-linecap="round" stroke-linejoin="round"/>
<polyline points="867.5,550.9 865.9,551.3" fill="none" stroke="#7fff00" stroke-width="3.5" stroke-linecap="round" stroke-linejoin="round"/>
<polyline points="865.9,551.3 864.1,551.6" fill="none" stroke="#c7ff00" stroke-width="3.5" stroke-linecap="round" stroke-linejoin="round"/>
<polyline points="864.1,551.6 862.3,551.9" fill="none" stroke="#fff700" stroke-width="3.5" stroke-linecap="round" stroke-linejoin="round"/>
<polyline points="862.3,551.9 860.4,552.3" fill="none" stroke="#ffd600" stroke-width="3.5" stroke-linecap="round" stroke-linejoin="round"/>
<polyline points="860.4,552.3 858.4,552.6" fill="none" stroke="#ffc600" stroke-width="3.5" stroke-linecap="round" stroke-linejoin="round"/>
<polyline points="858.4,552.6 856.4,552.9" fill="none" stroke="#ffa500" stroke-width="3.5" stroke-linecap="round" stroke-linejoin="round"/>
<polyline points="856.4,552.9 854.3,553.3" fill="none" stroke="#ff8400" stroke-width="3.5" stroke-linecap="round" stroke-linejoin="round"/>
<polyline points="854.3,553.3 852.1,553.6" fill="none" stroke="#ff7300" stroke-width="3.5" stroke-linecap="round" stroke-linejoin="round"/>
<polyline points="852.1,553.6 849.9,553.9" fill="none" stroke="#ff6200" stroke-width="3.5" stroke-linecap="round" stroke-linejoin="round"/>
<polyline points="849.9,553.9 847.6,554.3" fill="none" stroke="#ff4100" stroke-width="3.5" stroke-linecap="round" stroke-linejoin="round"/>
<polyline points="847.6,554.3 845.3,554.6" fill="none" stroke="#ff3000" stroke-width="3.5" stroke-linecap="round" stroke-linejoin="round"/>
<polyline points="845.3,554.6 842.9,554.9" fill="none" stroke="#ff2000" stroke-width="3.5" stroke-linecap="round" stroke-linejoin="round"/>
<polyline points="842.9,554.9 840.5,555.3" fill="none" stroke="#ff0f00" stroke-width="3.5" stroke-linecap="round" stroke-linejoin="round"/>
<polyline points="840.5,555.3 838.1,555.6" fill="none" stroke="#ff0103" stroke-width="3.5" stroke-linecap="round" stroke-linejoin="round"/>
<polyline points="838.1,555.6 835.6,555.9" fill="none" stroke="#ff1023" stroke-width="3.5" stroke-linecap="round" stroke-linejoin="round"/>
<polyline points="835.6,555.9 833.1,556.3 830.5,556.6" fill="none" stroke="#ff1e43" stroke-width="3.5" stroke-linecap="round" stroke-linejoin="round"/>
<polyline points="830.5,556.6 828.0,556.9 825.4,557.3 822.8,557.6" fill="none" stroke="#ff2c64" stroke-width="3.5" stroke-linecap="round" stroke-linejoin="round"/>
<polyline points="822.8,557.6 820.2,557.9 817.6,558.3 815.0,558.6" fill="none" stroke="#ff3b84" stroke-width="3.5" stroke-linecap="round" stroke-linejoin="round"/>
<polyline points="815.0,558.6 812.4,558.9 809.8,559.3 807.2,559.6" fill="none" stroke="#ff2c64" stroke-width="3.5" stroke-linecap="round" stroke-linejoin="round"/>
<polyline points="807.2,559.6 804.7,559.9 802.1,560.3" fill="none" stroke="#ff1e43" stroke-width="3.5" stroke-linecap="round" stroke-linejoin="round"/>
<polyline points="802.1,560.3 799.6,560.6" fill="none" stroke="#ff1023" stroke-width="3.5" stroke-linecap="round" stroke-linejoin="round"/>
<polyline points="799.6,560.6 797.2,560.9" fill="none" stroke="#ff0103" stroke-width="3.5" stroke-linecap="round" stroke-linejoin="round"/>
<polyline points="797.2,560.9 794.7,561.3 792.4,561.6" fill="none" stroke="#ff0f00" stroke-width="3.5" stroke-linecap="round" stroke-linejoin="round"/>
<polyline points="792.4,561.6 790.0,561.9" fill="none" stroke="#ff3000" stroke-width="3.5" stroke-linecap="round" stroke-linejoin="round"/>
<polyline points="790.0,561.9 787.7,562.3" fill="none" stroke="#ff4100" stroke-width="3.5" stroke-linecap="round" stroke-linejoin="round"/>
<polyline points="787.7,562.3 785.5,562.6" fill="none" stroke="#ff5200" stroke-width="3.5" stroke-linecap="round" stroke-linejoin="round"/>
<polyline points="785.5,562.6 783.3,562.9" fill="none" stroke="#ff6200" stroke-width="3.5" stroke-linecap="round" stroke-linejoin="round"/>
<polyline points="783.3,562.9 781.1,563.3" fill="none" stroke="#ff8400" stroke-width="3.5" stroke-linecap="round" stroke-linejoin="round"/>
<polyline points="781.1,563.3 779.1,563.6" fill="none" stroke="#ff9400" stroke-width="3.5" stroke-linecap="round" stroke-linejoin="round"/>
<polyline points="779.1,563.6 777.1,563.9" fill="none" stroke="#ffb500" stroke-width="3.5" stroke-linecap="round" stroke-linejoin="round"/>
<polyline points="777.1,563.9 775.2,564.3" fill="none" stroke="#ffd600" stroke-width="3.5" stroke-linecap="round" stroke-linejoin="round"/>
<polyline points="775.2,564.3 773.3,564.6" fill="none" stroke="#ffe700" stroke-width="3.5" stroke-linecap="round" stroke-linejoin="round"/>
<polyline points="773.3,564.6 771.5,564.9" fill="none" stroke="#ebff00" stroke-width="3.5" stroke-linecap="round" stroke-linejoin="round"/>
<polyline points="771.5,564.9 769.8,565.3" fill="none" stroke="#a3ff00" stroke-width="3.5" stroke-linecap="round" stroke-linejoin="round"/>
<polyline points="769.8,565.3 768.2,565.6" fill="none" stroke="#5bff00" stroke-width="3.5" stroke-linecap="round" stroke-linejoin="round"/>
<polyline points="768.2,565.6 766.7,565.9" fill="none" stroke="#12ff00" stroke-width="3.5" stroke-linecap="round" stroke-linejoin="round"/>
<polyline points="766.7,565.9 765.3,566.3" fill="none" stroke="#00ff19" stroke-width="3.5" stroke-linecap="round" stroke-linejoin="round"/>
<polyline points="765.3,566.3 764.0,566.6" fill="none" stroke="#00ff3a" stroke-width="3.5" stroke-linecap="round" stroke-linejoin="round"/>
<polyline points="764.0,566.6 762.7,566.9" fill="none" stroke="#00ff6c" stroke-width="3.5" stroke-linecap="round" stroke-linejoin="round"/>
<polyline points="762.7,566.9 761.6,567.3" fill="none" stroke="#00ff8d" stroke-width="3.5" stroke-linecap="round" stroke-linejoin="round"/>
<polyline points="761.6,567.3 760.5,567.6" fill="none" stroke="#00ffab" stroke-width="3.5" stroke-linecap="round" stroke-linejoin="round"/>
<polyline points="760.5,567.6 759.6,567.9" fill="none" stroke="#00ffca" stroke-width="3.5" stroke-linecap="round" stroke-linejoin="round"/>
<polyline points="759.6,567.9 758.8,568.3" fill="none" stroke="#00ffe8" stroke-width="3.5" stroke-linecap="round" stroke-linejoin="round"/>
<polyline points="758.8,568.3 758.0,568.6" fill="none" stroke="#00f1ff" stroke-width="3.5" stroke-linecap="round" stroke-linejoin="round"/>
<path d="M641.3 336.4 L646.3 341.4 M646.3 336.4 L641.3 341.4 M643.8 335.9 L643.8 341.9" stroke="#1a20c0" stroke-width="0.8"/>
<path d="M676.9 441.1 L681.9 446.1 M681.9 441.1 L676.9 446.1 M679.4 440.6 L679.4 446.6" stroke="#1a20c0" stroke-width="0.8"/>
<path d="M707.7 547.0 L712.7 552.0 M712.7 547.0 L707.7 552.0 M710.2 546.5 L710.2 552.5" stroke="#1a20c0" stroke-width="0.8"/>
<path d="M551.2 388.2 L556.2 393.2 M556.2 388.2 L551.2 393.2 M553.7 387.7 L553.7 393.7" stroke="#1a20c0" stroke-width="0.8"/>
<path d="M561.3 493.7 L566.3 498.7 M566.3 493.7 L561.3 498.7 M563.8 493.2 L563.8 499.2" stroke="#1a20c0" stroke-width="0.8"/>
<path d="M732.9 281.2 L737.9 286.2 M737.9 281.2 L732.9 286.2 M735.4 280.7 L735.4 286.7" stroke="#1a20c0" stroke-width="0.8"/>
<path d="M753.5 333.7 L758.5 338.7 M758.5 333.7 L753.5 338.7 M756.0 333.2 L756.0 339.2" stroke="#1a20c0" stroke-width="0.8"/>
<path d="M782.0 385.2 L787.0 390.2 M787.0 385.2 L782.0 390.2 M784.5 384.7 L784.5 390.7" stroke="#1a20c0" stroke-width="0.8"/>
<path d="M815.8 436.6 L820.8 441.6 M820.8 436.6 L815.8 441.6 M818.3 436.1 L818.3 442.1" stroke="#1a20c0" stroke-width="0.8"/>
<path d="M849.6 488.8 L854.6 493.8 M854.6 488.8 L849.6 493.8 M852.1 488.3 L852.1 494.3" stroke="#1a20c0" stroke-width="0.8"/>
<path d="M878.5 542.5 L883.5 547.5 M883.5 542.5 L878.5 547.5 M881.0 542.0 L881.0 548.0" stroke="#1a20c0" stroke-width="0.8"/>
<path d="M696.5 305.2 L701.5 310.2 M701.5 305.2 L696.5 310.2 M699.0 304.7 L699.0 310.7" stroke="#1a20c0" stroke-width="0.8"/>
<path d="M712.6 357.8 L717.6 362.8 M717.6 357.8 L712.6 362.8 M715.1 357.3 L715.1 363.3" stroke="#1a20c0" stroke-width="0.8"/>
<path d="M721.6 410.3 L726.6 415.3 M726.6 410.3 L721.6 415.3 M724.1 409.8 L724.1 415.8" stroke="#1a20c0" stroke-width="0.8"/>
<path d="M726.5 463.3 L731.5 468.3 M731.5 463.3 L726.5 468.3 M729.0 462.8 L729.0 468.8" stroke="#1a20c0" stroke-width="0.8"/>
<path d="M734.7 516.2 L739.7 521.2 M739.7 516.2 L734.7 521.2 M737.2 515.7 L737.2 521.7" stroke="#1a20c0" stroke-width="0.8"/>
<line x1="1041.4" y1="593.7" x2="1040.8" y2="574" stroke="#7a7aff" stroke-width="1.3"/>
<path d="M1039 575.5 L1040.7 571 L1042.3 575.5 Z" fill="#1a1aff"/>
<line x1="1041.4" y1="593.7" x2="1061" y2="593.7" stroke="#ff9a9a" stroke-width="1.3"/>
<path d="M1059.5 591.7 L1064.5 593.7 L1059.5 595.7 Z" fill="#ff2020"/>
<circle cx="1045.2" cy="591.4" r="1.7" fill="#10e010"/>
</svg>
<div class="t" style="left:350.50px;top:248.54px;font-size:12px;color:#1e1e1e;font-weight:normal;letter-spacing:0.5499999999999972px;">[m/s]</div>
<div class="t" style="left:307.00px;top:279.64px;font-size:12px;color:#1e1e1e;font-weight:normal;letter-spacing:0.24375000000000036px;">4.360e+04</div>
<div class="t" style="left:307.00px;top:346.24px;font-size:12px;color:#1e1e1e;font-weight:normal;letter-spacing:0.24375000000000036px;">3.395e+04</div>
<div class="t" style="left:307.00px;top:414.54px;font-size:12px;color:#1e1e1e;font-weight:normal;letter-spacing:0.24375000000000036px;">2.430e+04</div>
<div class="t" style="left:307.00px;top:482.04px;font-size:12px;color:#1e1e1e;font-weight:normal;letter-spacing:0.24375000000000036px;">1.465e+04</div>
<div class="t" style="left:307.00px;top:549.64px;font-size:12px;color:#1e1e1e;font-weight:normal;letter-spacing:0.24375000000000036px;">5.000e+03</div>
<div class="t" style="left:509.00px;top:275.61px;font-size:10.5px;color:#1e1e1e;font-weight:normal;letter-spacing:0.006249999999999645px;">0.000e+00</div>
<div class="t" style="left:587.40px;top:275.61px;font-size:10.5px;color:#1e1e1e;font-weight:normal;letter-spacing:0.1625000000000032px;">2.500e-03</div>
<div class="t" style="left:665.30px;top:275.31px;font-size:10.5px;color:#1e1e1e;font-weight:normal;letter-spacing:-0.024999999999996803px;">5.000e-03</div>
<div class="t" style="left:743.00px;top:274.61px;font-size:10.5px;color:#1e1e1e;font-weight:normal;letter-spacing:-0.01249999999999396px;">7.500e-03</div>
<div class="t" style="left:822.00px;top:274.21px;font-size:10.5px;color:#1e1e1e;font-weight:normal;letter-spacing:-0.16249999999999964px;">1.000e-02</div>
<div class="t" style="left:789.00px;top:285.01px;font-size:10.5px;color:#1e1e1e;font-weight:normal;letter-spacing:-0.05000000000000249px;">1.000e-02</div>
<div class="t" style="left:792.10px;top:363.91px;font-size:10.5px;color:#1e1e1e;font-weight:normal;letter-spacing:-0.012500000000008171px;">7.500e-03</div>
<div class="t" style="left:795.10px;top:442.61px;font-size:10.5px;color:#1e1e1e;font-weight:normal;letter-spacing:-0.012500000000008171px;">5.000e-03</div>
<div class="t" style="left:798.30px;top:521.61px;font-size:10.5px;color:#1e1e1e;font-weight:normal;letter-spacing:-0.037499999999999645px;">2.500e-03</div>
<div class="t" style="left:801.30px;top:600.71px;font-size:10.5px;color:#1e1e1e;font-weight:normal;letter-spacing:-0.006249999999988987px;">0.000e+00</div>
<div class="t" style="left:675.20px;top:262.56px;font-size:12.8px;color:#111;font-weight:normal;letter-spacing:0.3125px;">x [m]</div>
<div class="t" style="left:778.20px;top:445.84px;font-size:12px;color:#111;font-weight:normal;letter-spacing:0px;">Z</div>
<div class="t" style="left:1044.20px;top:562.96px;font-size:9.5px;color:#111;font-weight:normal;letter-spacing:0px;">Z</div>
<div class="t" style="left:1047.80px;top:578.96px;font-size:9.5px;color:#111;font-weight:normal;letter-spacing:0px;">Y</div>
<div class="t" style="left:1063.00px;top:580.96px;font-size:9.5px;color:#111;font-weight:normal;letter-spacing:0px;">X</div>
<svg style="left:0px;top:0px" width="1172" height="991" viewBox="0 0 1172 991">
<defs><clipPath id="pc"><rect x="273" y="673" width="831" height="214"/></clipPath></defs>
<line x1="373.3" y1="673" x2="373.3" y2="887" stroke="#6e6e6e" stroke-width="1"/>
<line x1="273" y1="837.4" x2="1104" y2="837.4" stroke="#6e6e6e" stroke-width="1"/>
<line x1="367.8" y1="698.9" x2="373.3" y2="698.9" stroke="#6e6e6e" stroke-width="1"/>
<line x1="367.8" y1="726.2" x2="373.3" y2="726.2" stroke="#6e6e6e" stroke-width="1"/>
<line x1="367.8" y1="753.9" x2="373.3" y2="753.9" stroke="#6e6e6e" stroke-width="1"/>
<line x1="367.8" y1="781.4" x2="373.3" y2="781.4" stroke="#6e6e6e" stroke-width="1"/>
<line x1="367.8" y1="809.2" x2="373.3" y2="809.2" stroke="#6e6e6e" stroke-width="1"/>
<line x1="367.8" y1="836.9" x2="373.3" y2="836.9" stroke="#6e6e6e" stroke-width="1"/>
<line x1="446.8" y1="837.4" x2="446.8" y2="842.4" stroke="#6e6e6e" stroke-width="1"/>
<line x1="520.3" y1="837.4" x2="520.3" y2="842.4" stroke="#6e6e6e" stroke-width="1"/>
<line x1="593.8" y1="837.4" x2="593.8" y2="842.4" stroke="#6e6e6e" stroke-width="1"/>
<line x1="667.3" y1="837.4" x2="667.3" y2="842.4" stroke="#6e6e6e" stroke-width="1"/>
<line x1="740.8" y1="837.4" x2="740.8" y2="842.4" stroke="#6e6e6e" stroke-width="1"/>
<line x1="814.2" y1="837.4" x2="814.2" y2="842.4" stroke="#6e6e6e" stroke-width="1"/>
<line x1="887.7" y1="837.4" x2="887.7" y2="842.4" stroke="#6e6e6e" stroke-width="1"/>
<line x1="961.2" y1="837.4" x2="961.2" y2="842.4" stroke="#6e6e6e" stroke-width="1"/>
<line x1="1034.7" y1="837.4" x2="1034.7" y2="842.4" stroke="#6e6e6e" stroke-width="1"/>
<line x1="370.6" y1="754.3" x2="1104" y2="754.3" stroke="#d62728" stroke-width="3.6"/>
<polyline points="372.5,836.4 377.0,833.9 381.5,826.8 386.0,815.4 390.5,800.4 395.0,782.8 399.5,763.5 404.0,744.9 408.5,727.6 413.0,711.7 417.5,697.7 422.0,686.5 426.5,678.5 431.0,674.1 435.5,673.5 440.0,677.5 444.5,685.8 449.0,697.9 453.5,713.1 458.0,730.6 462.5,749.3 467.0,767.5 471.5,784.6 476.0,800.1 480.5,813.1 485.0,823.0 489.5,829.2 494.0,831.6 498.5,829.7 503.0,823.6 507.5,813.9 512.0,800.9 516.5,785.5 521.0,768.7 525.5,751.3 530.0,735.1 534.5,719.9 539.0,706.7 543.5,696.0 548.0,688.4 552.5,684.1 557.0,683.5 561.5,686.5 566.0,693.0 570.5,702.6 575.0,714.6 579.5,728.5 584.0,743.4 588.5,758.8 593.0,774.1 597.5,787.9 602.0,799.7 606.5,808.7 611.0,814.6 615.5,817.1 620.0,816.1 624.5,812.0 629.0,805.1 633.5,795.7 638.0,784.4 642.5,771.7 647.0,758.5 651.5,744.9 656.0,731.9 660.5,720.4 665.0,711.0 669.5,704.2 674.0,700.3 678.5,699.4 683.0,701.6 687.5,706.4 692.0,713.6 696.5,722.7 701.0,733.2 705.5,744.5 710.0,756.1 714.5,767.4 719.0,777.8 723.5,786.5 728.0,793.3 732.5,797.9 737.0,800.0 741.5,799.6 746.0,797.1 750.5,792.6 755.0,786.2 759.5,778.4 764.0,769.6 768.5,760.2 773.0,750.3 777.5,740.3 782.0,731.4 786.5,724.0 791.0,718.7 795.5,715.7 800.0,715.1 804.5,716.7 809.0,720.0 813.5,725.0 818.0,731.3 822.5,738.6 827.0,746.5 831.5,754.7 836.0,762.7 840.5,770.2 845.0,776.6 849.5,781.7 854.0,785.3 858.5,787.2 863.0,787.3 867.5,785.9 872.0,782.7 876.5,778.2 881.0,772.5 885.5,765.9 890.0,758.8 894.5,751.7 899.0,745.0 903.5,738.9 908.0,733.6 912.5,729.5 917.0,726.7 921.5,725.3 926.0,725.4 930.5,726.8 935.0,729.5 939.5,733.4 944.0,738.4 948.5,744.0 953.0,750.1 957.5,756.6 962.0,763.3 966.5,769.4 971.0,774.4 975.5,778.2 980.0,780.5 984.5,781.1 989.0,780.6 993.5,778.7 998.0,775.6 1002.5,771.4 1007.0,766.3 1011.5,760.5 1016.0,754.3 1020.5,747.7 1025.0,741.4 1029.5,735.7 1034.0,731.1 1038.5,727.6 1043.0,725.6 1047.5,725.2 1052.0,726.2 1056.5,728.6 1061.0,732.4 1065.5,737.4 1070.0,743.2 1074.5,749.7 1079.0,756.7 1083.5,763.8 1088.0,770.5 1092.5,776.4 1097.0,781.2 1101.5,784.7 1106.0,786.5" fill="none" stroke="#3a80c0" stroke-width="1.1" stroke-linejoin="round" clip-path="url(#pc)"/>
<rect x="949.5" y="680.5" width="76" height="47" fill="#fff" stroke="#000" stroke-width="1.1"/>
<line x1="954" y1="694.5" x2="964.7" y2="694.5" stroke="#3a80c0" stroke-width="1.1"/>
<line x1="954.5" y1="713.5" x2="964.5" y2="713.5" stroke="#d62728" stroke-width="3" stroke-linecap="round"/>
</svg>
<div class="t" style="left:348.90px;top:718.55px;font-size:14px;color:#000;font-weight:normal;letter-spacing:-0.574999999999994px;">0.5</div>
<div class="t" style="left:344.00px;top:773.75px;font-size:14px;color:#000;font-weight:normal;letter-spacing:-0.30000000000000426px;">-0.5</div>
<div class="t" style="left:344.00px;top:829.85px;font-size:14px;color:#000;font-weight:normal;letter-spacing:-0.30000000000000426px;">-1.5</div>
<div class="t" style="left:424.24px;top:843.35px;font-size:14px;color:#000;font-weight:normal;letter-spacing:0.14000000000000057px;">0.0002</div>
<div class="t" style="left:497.73px;top:843.35px;font-size:14px;color:#000;font-weight:normal;letter-spacing:0.14000000000001195px;">0.0004</div>
<div class="t" style="left:571.22px;top:843.35px;font-size:14px;color:#000;font-weight:normal;letter-spacing:0.14000000000000057px;">0.0006</div>
<div class="t" style="left:644.71px;top:843.35px;font-size:14px;color:#000;font-weight:normal;letter-spacing:0.14000000000000057px;">0.0008</div>
<div class="t" style="left:721.75px;top:843.35px;font-size:14px;color:#000;font-weight:normal;letter-spacing:0.33750000000002345px;">0.001</div>
<div class="t" style="left:791.69px;top:843.35px;font-size:14px;color:#000;font-weight:normal;letter-spacing:0.14000000000000057px;">0.0012</div>
<div class="t" style="left:865.18px;top:843.35px;font-size:14px;color:#000;font-weight:normal;letter-spacing:0.14000000000000057px;">0.0014</div>
<div class="t" style="left:938.67px;top:843.35px;font-size:14px;color:#000;font-weight:normal;letter-spacing:0.14000000000000057px;">0.0016</div>
<div class="t" style="left:1012.16px;top:843.35px;font-size:14px;color:#000;font-weight:normal;letter-spacing:0.14000000000000057px;">0.0018</div>
<div class="t" style="left:621.00px;top:862.65px;font-size:14px;color:#000;font-weight:normal;letter-spacing:0px;">t [ms]</div>
<div class="t" style="left:332.8px;top:755.4px;font-size:14.4px;color:#000;transform:translate(-50%,-50%) rotate(-90deg);transform-origin:50% 50%;line-height:1">ElectrodePotential [kV]</div>
<div class="t" style="left:969.40px;top:688.64px;font-size:13.3px;color:#000;font-weight:normal;letter-spacing:0.08333333333334518px;">Cathode</div>
<div class="t" style="left:969.40px;top:707.54px;font-size:13.3px;color:#000;font-weight:normal;letter-spacing:0.287500000000005px;">Anode</div>
<div class="a" style="left:66px;top:888px;width:1039px;height:25px;background:#eff0f1"></div>
<div class="t" style="left:71.00px;top:895.04px;font-size:13.3px;color:#31363b;font-weight:normal;letter-spacing:0.04800000000000068px;">This is a developer build.</div>
<div class="t" style="left:960.40px;top:895.04px;font-size:13.3px;color:#31363b;font-weight:normal;letter-spacing:-0.007142857142850646px;">Finished</div>
<svg style="left:1080px;top:890px" width="24" height="22" viewBox="0 0 24 22">
<path d="M2.4 19.3 L20.5 1.6 M7.5 19.3 L20.5 6.6 M12.5 19.3 L20.5 11.6 M17.5 19.3 L20.5 16.5" stroke="#a3a7ab" stroke-width="1.3" stroke-linecap="round"/></svg>
</body></html>
